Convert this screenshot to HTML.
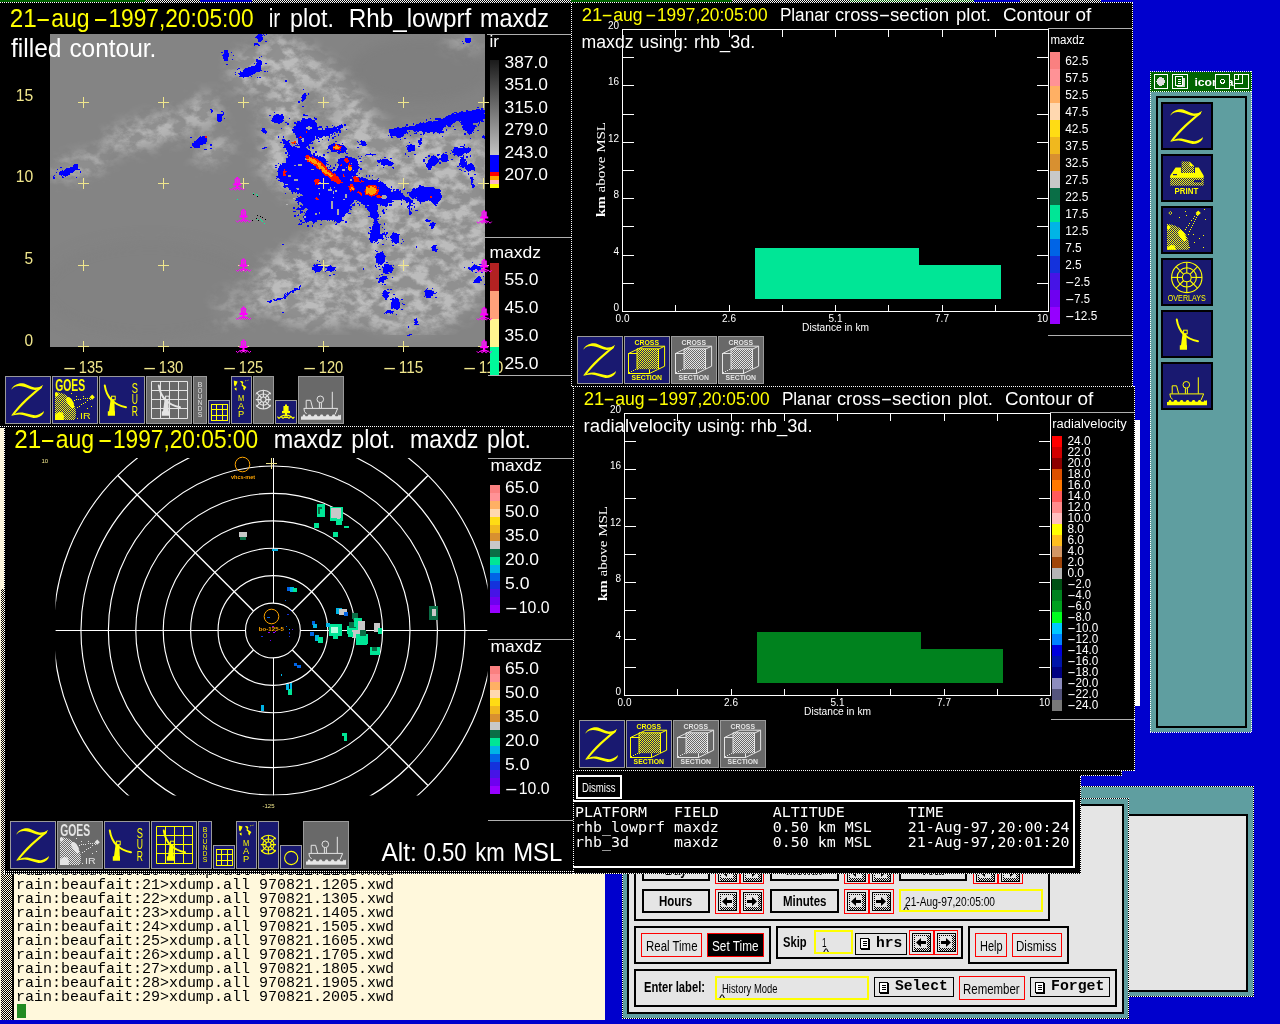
<!DOCTYPE html>
<html lang="en"><head><meta charset="utf-8"><title>zeb display</title>
<style>
html,body{margin:0;padding:0;}
body{width:1280px;height:1024px;overflow:hidden;background:#0000cd;position:relative;font-family:"Liberation Sans",sans-serif;}
.win{position:absolute;overflow:hidden;will-change:transform;}
.win>svg{position:absolute;left:0;top:0;display:block;}
.abs{position:absolute;display:block;}
.b{position:absolute;}
.t{position:absolute;white-space:nowrap;transform-origin:0 0;display:block;}
.pre{white-space:pre;}
</style></head><body>
<svg width="0" height="0" style="position:absolute"><defs>
<pattern id="dy" width="2" height="2" patternUnits="userSpaceOnUse"><rect width="1" height="1" fill="#ffff00"/><rect x="1" y="1" width="1" height="1" fill="#ffff00"/></pattern>
<pattern id="dw" width="2" height="2" patternUnits="userSpaceOnUse"><rect width="1" height="1" fill="#e4e4e4"/><rect x="1" y="1" width="1" height="1" fill="#e4e4e4"/></pattern>
<pattern id="stip" width="2" height="2" patternUnits="userSpaceOnUse"><rect width="2" height="2" fill="#fff8dc"/><rect width="1" height="1" fill="#000"/><rect x="1" y="1" width="1" height="1" fill="#000"/></pattern>
<pattern id="stipg" width="2" height="2" patternUnits="userSpaceOnUse"><rect width="2" height="2" fill="#e5e5e5"/><rect width="1" height="1" fill="#000"/><rect x="1" y="1" width="1" height="1" fill="#000"/></pattern><pattern id="stipgr" width="2" height="2" patternUnits="userSpaceOnUse"><rect width="2" height="2" fill="#006400"/><rect width="1" height="1" fill="#fff"/><rect x="1" y="1" width="1" height="1" fill="#fff"/></pattern><pattern id="stipw" width="2" height="2" patternUnits="userSpaceOnUse"><rect width="2" height="2" fill="#000"/><rect width="1" height="1" fill="#fff"/><rect x="1" y="1" width="1" height="1" fill="#fff"/></pattern></defs></svg>
<div class="win term" style="left:0px;top:427px;width:605px;height:593px;background:#fff8dc;"><svg width="13" height="431" style="position:absolute;left:0;top:162px" shape-rendering="crispEdges"><rect x="1" width="12" height="431" fill="url(#stip)"/></svg><div class="b" style="left:12px;top:445px;width:2px;height:148px;background:#000;"></div><span class="t pre" style="left:16.2px;top:437px;font:normal 15px/16px 'Liberation Mono', monospace;color:#000;transform:scaleX(0.9999);">rain:beaufait:20&gt;xdump.all 970821.1105.xwd</span><span class="t pre" style="left:16.2px;top:451px;font:normal 15px/16px 'Liberation Mono', monospace;color:#000;transform:scaleX(0.9999);">rain:beaufait:21&gt;xdump.all 970821.1205.xwd</span><span class="t pre" style="left:16.2px;top:465px;font:normal 15px/16px 'Liberation Mono', monospace;color:#000;transform:scaleX(0.9999);">rain:beaufait:22&gt;xdump.all 970821.1305.xwd</span><span class="t pre" style="left:16.2px;top:479px;font:normal 15px/16px 'Liberation Mono', monospace;color:#000;transform:scaleX(0.9999);">rain:beaufait:23&gt;xdump.all 970821.1405.xwd</span><span class="t pre" style="left:16.2px;top:493px;font:normal 15px/16px 'Liberation Mono', monospace;color:#000;transform:scaleX(0.9999);">rain:beaufait:24&gt;xdump.all 970821.1505.xwd</span><span class="t pre" style="left:16.2px;top:507px;font:normal 15px/16px 'Liberation Mono', monospace;color:#000;transform:scaleX(0.9999);">rain:beaufait:25&gt;xdump.all 970821.1605.xwd</span><span class="t pre" style="left:16.2px;top:521px;font:normal 15px/16px 'Liberation Mono', monospace;color:#000;transform:scaleX(0.9999);">rain:beaufait:26&gt;xdump.all 970821.1705.xwd</span><span class="t pre" style="left:16.2px;top:535px;font:normal 15px/16px 'Liberation Mono', monospace;color:#000;transform:scaleX(0.9999);">rain:beaufait:27&gt;xdump.all 970821.1805.xwd</span><span class="t pre" style="left:16.2px;top:549px;font:normal 15px/16px 'Liberation Mono', monospace;color:#000;transform:scaleX(0.9999);">rain:beaufait:28&gt;xdump.all 970821.1905.xwd</span><span class="t pre" style="left:16.2px;top:563px;font:normal 15px/16px 'Liberation Mono', monospace;color:#000;transform:scaleX(0.9999);">rain:beaufait:29&gt;xdump.all 970821.2005.xwd</span><div class="b" style="left:17px;top:577px;width:9px;height:14px;background:#228b22;"></div></div>
<div class="win aux" style="left:1080px;top:786px;width:174px;height:211px;background:#5f9ea0;outline:1px dotted #fff;outline-offset:-1px;box-shadow:inset 0 0 0 1px #000;"><div class="b" style="left:20px;top:28px;width:148px;height:178px;background:#e5e5e5;border:2px solid #000;box-sizing:border-box;"></div></div>
<div class="win tctl" style="left:622px;top:798px;width:507px;height:221px;background:#5f9ea0;outline:1px dotted #fff;outline-offset:-1px;box-shadow:inset 0 0 0 1px #000;"><div class="b" style="left:5px;top:6px;width:497px;height:210px;background:#e5e5e5;border:2px solid #000;box-sizing:border-box;"></div><div class="b" style="left:12px;top:14px;width:416px;height:109px;border:2px solid #000;box-sizing:border-box;"></div><div class="b" style="left:20px;top:60px;width:68px;height:23px;border:2px solid #000;box-sizing:border-box;"></div><span class="t" style="left:42.65px;top:63.5px;font:bold 14px/16px 'Liberation Sans', sans-serif;color:#000;transform:scaleX(0.8566);">Day</span><div class="b" style="left:148px;top:60px;width:69px;height:23px;border:2px solid #000;box-sizing:border-box;"></div><span class="t" style="left:164.4px;top:63.5px;font:bold 14px/16px 'Liberation Sans', sans-serif;color:#000;transform:scaleX(0.8575);">Month</span><div class="b" style="left:277px;top:60px;width:68px;height:23px;border:2px solid #000;box-sizing:border-box;"></div><span class="t" style="left:298.1px;top:63.5px;font:bold 14px/16px 'Liberation Sans', sans-serif;color:#000;transform:scaleX(0.8788);">Year</span><div class="b" style="left:93px;top:62px;width:25px;height:24px;border:1px solid #ff0000;box-sizing:border-box;"><svg width="19" height="19" viewBox="0 0 19 19" shape-rendering="crispEdges" style="position:absolute;left:2px;top:2px"><rect x="0.5" y="0.5" width="18" height="18" fill="#e5e5e5" stroke="#000" stroke-width="1"/><rect x="15" y="2" width="3" height="16" fill="url(#stipg)"/><rect x="2" y="15" width="16" height="3" fill="url(#stipg)"/><rect x="2" y="2" width="14" height="1" fill="url(#stipg)"/><rect x="2" y="3" width="1" height="12" fill="url(#stipg)"/><path d="M4,9.5 L9,5 V8 H14 V11 H9 V14 Z" fill="#000" shape-rendering="geometricPrecision"/></svg></div><div class="b" style="left:118px;top:62px;width:24px;height:24px;border:1px solid #ff0000;box-sizing:border-box;"><svg width="19" height="19" viewBox="0 0 19 19" shape-rendering="crispEdges" style="position:absolute;left:2px;top:2px"><rect x="0.5" y="0.5" width="18" height="18" fill="#e5e5e5" stroke="#000" stroke-width="1"/><rect x="15" y="2" width="3" height="16" fill="url(#stipg)"/><rect x="2" y="15" width="16" height="3" fill="url(#stipg)"/><rect x="2" y="2" width="14" height="1" fill="url(#stipg)"/><rect x="2" y="3" width="1" height="12" fill="url(#stipg)"/><path d="M14,9.5 L9,5 V8 H4 V11 H9 V14 Z" fill="#000" shape-rendering="geometricPrecision"/></svg></div><div class="b" style="left:222px;top:62px;width:25px;height:24px;border:1px solid #ff0000;box-sizing:border-box;"><svg width="19" height="19" viewBox="0 0 19 19" shape-rendering="crispEdges" style="position:absolute;left:2px;top:2px"><rect x="0.5" y="0.5" width="18" height="18" fill="#e5e5e5" stroke="#000" stroke-width="1"/><rect x="15" y="2" width="3" height="16" fill="url(#stipg)"/><rect x="2" y="15" width="16" height="3" fill="url(#stipg)"/><rect x="2" y="2" width="14" height="1" fill="url(#stipg)"/><rect x="2" y="3" width="1" height="12" fill="url(#stipg)"/><path d="M4,9.5 L9,5 V8 H14 V11 H9 V14 Z" fill="#000" shape-rendering="geometricPrecision"/></svg></div><div class="b" style="left:247px;top:62px;width:25px;height:24px;border:1px solid #ff0000;box-sizing:border-box;"><svg width="19" height="19" viewBox="0 0 19 19" shape-rendering="crispEdges" style="position:absolute;left:2px;top:2px"><rect x="0.5" y="0.5" width="18" height="18" fill="#e5e5e5" stroke="#000" stroke-width="1"/><rect x="15" y="2" width="3" height="16" fill="url(#stipg)"/><rect x="2" y="15" width="16" height="3" fill="url(#stipg)"/><rect x="2" y="2" width="14" height="1" fill="url(#stipg)"/><rect x="2" y="3" width="1" height="12" fill="url(#stipg)"/><path d="M14,9.5 L9,5 V8 H4 V11 H9 V14 Z" fill="#000" shape-rendering="geometricPrecision"/></svg></div><div class="b" style="left:351px;top:62px;width:25px;height:24px;border:1px solid #ff0000;box-sizing:border-box;"><svg width="19" height="19" viewBox="0 0 19 19" shape-rendering="crispEdges" style="position:absolute;left:2px;top:2px"><rect x="0.5" y="0.5" width="18" height="18" fill="#e5e5e5" stroke="#000" stroke-width="1"/><rect x="15" y="2" width="3" height="16" fill="url(#stipg)"/><rect x="2" y="15" width="16" height="3" fill="url(#stipg)"/><rect x="2" y="2" width="14" height="1" fill="url(#stipg)"/><rect x="2" y="3" width="1" height="12" fill="url(#stipg)"/><path d="M4,9.5 L9,5 V8 H14 V11 H9 V14 Z" fill="#000" shape-rendering="geometricPrecision"/></svg></div><div class="b" style="left:376px;top:62px;width:25px;height:24px;border:1px solid #ff0000;box-sizing:border-box;"><svg width="19" height="19" viewBox="0 0 19 19" shape-rendering="crispEdges" style="position:absolute;left:2px;top:2px"><rect x="0.5" y="0.5" width="18" height="18" fill="#e5e5e5" stroke="#000" stroke-width="1"/><rect x="15" y="2" width="3" height="16" fill="url(#stipg)"/><rect x="2" y="15" width="16" height="3" fill="url(#stipg)"/><rect x="2" y="2" width="14" height="1" fill="url(#stipg)"/><rect x="2" y="3" width="1" height="12" fill="url(#stipg)"/><path d="M14,9.5 L9,5 V8 H4 V11 H9 V14 Z" fill="#000" shape-rendering="geometricPrecision"/></svg></div><div class="b" style="left:20px;top:91px;width:68px;height:24px;border:2px solid #000;box-sizing:border-box;"></div><span class="t" style="left:37.05px;top:95.4px;font:bold 14px/16px 'Liberation Sans', sans-serif;color:#000;transform:scaleX(0.8208);">Hours</span><div class="b" style="left:148px;top:91px;width:69px;height:24px;border:2px solid #000;box-sizing:border-box;"></div><span class="t" style="left:160.65px;top:95.4px;font:bold 14px/16px 'Liberation Sans', sans-serif;color:#000;transform:scaleX(0.8224);">Minutes</span><div class="b" style="left:93px;top:91px;width:25px;height:25px;border:1px solid #ff0000;box-sizing:border-box;"><svg width="19" height="19" viewBox="0 0 19 19" shape-rendering="crispEdges" style="position:absolute;left:2px;top:2px"><rect x="0.5" y="0.5" width="18" height="18" fill="#e5e5e5" stroke="#000" stroke-width="1"/><rect x="15" y="2" width="3" height="16" fill="url(#stipg)"/><rect x="2" y="15" width="16" height="3" fill="url(#stipg)"/><rect x="2" y="2" width="14" height="1" fill="url(#stipg)"/><rect x="2" y="3" width="1" height="12" fill="url(#stipg)"/><path d="M4,9.5 L9,5 V8 H14 V11 H9 V14 Z" fill="#000" shape-rendering="geometricPrecision"/></svg></div><div class="b" style="left:118px;top:91px;width:24px;height:25px;border:1px solid #ff0000;box-sizing:border-box;"><svg width="19" height="19" viewBox="0 0 19 19" shape-rendering="crispEdges" style="position:absolute;left:2px;top:2px"><rect x="0.5" y="0.5" width="18" height="18" fill="#e5e5e5" stroke="#000" stroke-width="1"/><rect x="15" y="2" width="3" height="16" fill="url(#stipg)"/><rect x="2" y="15" width="16" height="3" fill="url(#stipg)"/><rect x="2" y="2" width="14" height="1" fill="url(#stipg)"/><rect x="2" y="3" width="1" height="12" fill="url(#stipg)"/><path d="M14,9.5 L9,5 V8 H4 V11 H9 V14 Z" fill="#000" shape-rendering="geometricPrecision"/></svg></div><div class="b" style="left:222px;top:91px;width:25px;height:25px;border:1px solid #ff0000;box-sizing:border-box;"><svg width="19" height="19" viewBox="0 0 19 19" shape-rendering="crispEdges" style="position:absolute;left:2px;top:2px"><rect x="0.5" y="0.5" width="18" height="18" fill="#e5e5e5" stroke="#000" stroke-width="1"/><rect x="15" y="2" width="3" height="16" fill="url(#stipg)"/><rect x="2" y="15" width="16" height="3" fill="url(#stipg)"/><rect x="2" y="2" width="14" height="1" fill="url(#stipg)"/><rect x="2" y="3" width="1" height="12" fill="url(#stipg)"/><path d="M4,9.5 L9,5 V8 H14 V11 H9 V14 Z" fill="#000" shape-rendering="geometricPrecision"/></svg></div><div class="b" style="left:247px;top:91px;width:25px;height:25px;border:1px solid #ff0000;box-sizing:border-box;"><svg width="19" height="19" viewBox="0 0 19 19" shape-rendering="crispEdges" style="position:absolute;left:2px;top:2px"><rect x="0.5" y="0.5" width="18" height="18" fill="#e5e5e5" stroke="#000" stroke-width="1"/><rect x="15" y="2" width="3" height="16" fill="url(#stipg)"/><rect x="2" y="15" width="16" height="3" fill="url(#stipg)"/><rect x="2" y="2" width="14" height="1" fill="url(#stipg)"/><rect x="2" y="3" width="1" height="12" fill="url(#stipg)"/><path d="M14,9.5 L9,5 V8 H4 V11 H9 V14 Z" fill="#000" shape-rendering="geometricPrecision"/></svg></div><div class="b" style="left:277px;top:91px;width:144px;height:23px;border:2px solid #ffff00;box-sizing:border-box;"></div><span class="t" style="left:283px;top:97.4px;font:normal 12px/14px 'Liberation Sans', sans-serif;color:#000;transform:scaleX(0.8484);">21-Aug-97,20:05:00</span><span class="t" style="left:280.8px;top:107.3px;font:bold 7.4px/9px 'Liberation Sans', sans-serif;color:#000;transform:scaleX(1.4347);">^</span><div class="b" style="left:12px;top:128px;width:137px;height:38px;border:2px solid #000;box-sizing:border-box;"></div><div class="b" style="left:19px;top:135px;width:61px;height:24px;border:1px solid #ff0000;box-sizing:border-box;"></div><span class="t" style="left:23.6px;top:139.6px;font:normal 14px/16px 'Liberation Sans', sans-serif;color:#000;transform:scaleX(0.8172);">Real Time</span><div class="b" style="left:85px;top:135px;width:57px;height:24px;border:1px solid #ff0000;box-sizing:border-box;background:#000;"></div><span class="t" style="left:89.6px;top:139.6px;font:normal 14px/16px 'Liberation Sans', sans-serif;color:#fff;transform:scaleX(0.8417);">Set Time</span><div class="b" style="left:154px;top:128px;width:187px;height:33px;border:2px solid #000;box-sizing:border-box;"></div><span class="t" style="left:161.4px;top:136px;font:bold 14px/16px 'Liberation Sans', sans-serif;color:#000;transform:scaleX(0.7982);">Skip</span><div class="b" style="left:192px;top:132px;width:39px;height:24px;border:2px solid #ffff00;box-sizing:border-box;"></div><span class="t" style="left:200px;top:138.2px;font:normal 12px/14px 'Liberation Sans', sans-serif;color:#000;transform:scaleX(0.6743);">1</span><span class="t" style="left:200.5px;top:148.5px;font:bold 7.4px/9px 'Liberation Sans', sans-serif;color:#000;transform:scaleX(1.4347);">^</span><div class="b" style="left:233px;top:135px;width:52px;height:22px;border:1px solid #000;box-sizing:border-box;"><svg width="10" height="12" viewBox="0 0 10 12" shape-rendering="crispEdges" style="position:absolute;left:4px;top:4px"><rect x="0.5" y="0.5" width="8" height="10" fill="#fff" stroke="#000" stroke-width="1"/><rect x="1" y="10" width="9" height="1.5" fill="#000"/><rect x="8.5" y="1" width="1.5" height="10" fill="#000"/><rect x="2.5" y="3" width="4" height="1" fill="#000"/><rect x="2.5" y="5" width="4" height="1" fill="#000"/><rect x="2.5" y="7" width="4" height="1" fill="#000"/></svg></div><span class="t" style="left:254px;top:138.4px;font:bold 15px/16px 'Liberation Mono', monospace;color:#000;transform:scaleX(0.9739);">hrs</span><div class="b" style="left:287px;top:132px;width:25px;height:25px;border:1px solid #ff0000;box-sizing:border-box;"><svg width="19" height="19" viewBox="0 0 19 19" shape-rendering="crispEdges" style="position:absolute;left:2px;top:2px"><rect x="0.5" y="0.5" width="18" height="18" fill="#e5e5e5" stroke="#000" stroke-width="1"/><rect x="15" y="2" width="3" height="16" fill="url(#stipg)"/><rect x="2" y="15" width="16" height="3" fill="url(#stipg)"/><rect x="2" y="2" width="14" height="1" fill="url(#stipg)"/><rect x="2" y="3" width="1" height="12" fill="url(#stipg)"/><path d="M4,9.5 L9,5 V8 H14 V11 H9 V14 Z" fill="#000" shape-rendering="geometricPrecision"/></svg></div><div class="b" style="left:312px;top:132px;width:24px;height:25px;border:1px solid #ff0000;box-sizing:border-box;"><svg width="19" height="19" viewBox="0 0 19 19" shape-rendering="crispEdges" style="position:absolute;left:2px;top:2px"><rect x="0.5" y="0.5" width="18" height="18" fill="#e5e5e5" stroke="#000" stroke-width="1"/><rect x="15" y="2" width="3" height="16" fill="url(#stipg)"/><rect x="2" y="15" width="16" height="3" fill="url(#stipg)"/><rect x="2" y="2" width="14" height="1" fill="url(#stipg)"/><rect x="2" y="3" width="1" height="12" fill="url(#stipg)"/><path d="M14,9.5 L9,5 V8 H4 V11 H9 V14 Z" fill="#000" shape-rendering="geometricPrecision"/></svg></div><div class="b" style="left:346px;top:128px;width:101px;height:38px;border:2px solid #000;box-sizing:border-box;"></div><div class="b" style="left:353px;top:135px;width:32px;height:24px;border:1px solid #ff0000;box-sizing:border-box;"></div><span class="t" style="left:357.6px;top:139.6px;font:normal 14px/16px 'Liberation Sans', sans-serif;color:#000;transform:scaleX(0.7814);">Help</span><div class="b" style="left:390px;top:135px;width:50px;height:24px;border:1px solid #ff0000;box-sizing:border-box;"></div><span class="t" style="left:394.4px;top:139.6px;font:normal 14px/16px 'Liberation Sans', sans-serif;color:#000;transform:scaleX(0.8266);">Dismiss</span><div class="b" style="left:12px;top:171px;width:483px;height:38px;border:2px solid #000;box-sizing:border-box;"></div><span class="t" style="left:22.4px;top:181.2px;font:bold 14px/16px 'Liberation Sans', sans-serif;color:#000;transform:scaleX(0.8001);">Enter label:</span><div class="b" style="left:93px;top:178px;width:154px;height:24px;border:2px solid #ffff00;box-sizing:border-box;"></div><span class="t" style="left:99.5px;top:183.7px;font:normal 12px/14px 'Liberation Sans', sans-serif;color:#000;transform:scaleX(0.7851);">History Mode</span><span class="t" style="left:96.7px;top:194.5px;font:bold 7.4px/9px 'Liberation Sans', sans-serif;color:#000;transform:scaleX(1.4347);">^</span><div class="b" style="left:252px;top:179px;width:80px;height:20px;border:1px solid #000;box-sizing:border-box;"><svg width="10" height="12" viewBox="0 0 10 12" shape-rendering="crispEdges" style="position:absolute;left:4px;top:4px"><rect x="0.5" y="0.5" width="8" height="10" fill="#fff" stroke="#000" stroke-width="1"/><rect x="1" y="10" width="9" height="1.5" fill="#000"/><rect x="8.5" y="1" width="1.5" height="10" fill="#000"/><rect x="2.5" y="3" width="4" height="1" fill="#000"/><rect x="2.5" y="5" width="4" height="1" fill="#000"/><rect x="2.5" y="7" width="4" height="1" fill="#000"/></svg></div><span class="t" style="left:273.3px;top:180.8px;font:bold 15px/16px 'Liberation Mono', monospace;color:#000;transform:scaleX(0.9758);">Select</span><div class="b" style="left:337px;top:178px;width:66px;height:24px;border:1px solid #ff0000;box-sizing:border-box;"></div><span class="t" style="left:341.2px;top:182.7px;font:normal 14px/16px 'Liberation Sans', sans-serif;color:#000;transform:scaleX(0.8174);">Remember</span><div class="b" style="left:408px;top:179px;width:80px;height:20px;border:1px solid #000;box-sizing:border-box;"><svg width="10" height="12" viewBox="0 0 10 12" shape-rendering="crispEdges" style="position:absolute;left:4px;top:4px"><rect x="0.5" y="0.5" width="8" height="10" fill="#fff" stroke="#000" stroke-width="1"/><rect x="1" y="10" width="9" height="1.5" fill="#000"/><rect x="8.5" y="1" width="1.5" height="10" fill="#000"/><rect x="2.5" y="3" width="4" height="1" fill="#000"/><rect x="2.5" y="5" width="4" height="1" fill="#000"/><rect x="2.5" y="7" width="4" height="1" fill="#000"/></svg></div><span class="t" style="left:428.8px;top:181px;font:bold 15px/16px 'Liberation Mono', monospace;color:#000;transform:scaleX(0.9888);">Forget</span></div>
<div class="win pal" style="left:1150px;top:71px;width:102px;height:662px;background:transparent;"><svg width="102" height="662" viewBox="1150 71 102 662" font-family='"Liberation Sans", sans-serif' shape-rendering="crispEdges" text-rendering="optimizeLegibility"><rect x="1150" y="72" width="102" height="19.5" fill="#006400"/><rect x="1150" y="91.5" width="102" height="640.5" fill="#5f9ea0"/><rect x="1156.5" y="96.5" width="89.5" height="630" fill="none" stroke="#000" stroke-width="2"/><rect x="1154" y="74.5" width="13.5" height="14" fill="none" stroke="#fff" stroke-width="1"/><circle cx="1160.7" cy="81.5" r="4.3" fill="#dcdcdc"/><rect x="1172.5" y="74.5" width="14.5" height="14" fill="none" stroke="#fff" stroke-width="1"/><rect x="1176.5" y="77.5" width="8" height="9.5" fill="#dcdcdc"/><rect x="1175.5" y="76.5" width="7" height="9" fill="#006400" stroke="#fff" stroke-width="1"/><line x1="1177.5" y1="79.5" x2="1181" y2="79.5" stroke="#fff" stroke-width="1"/><line x1="1177.5" y1="81.5" x2="1181" y2="81.5" stroke="#fff" stroke-width="1"/><line x1="1177.5" y1="83.5" x2="1181" y2="83.5" stroke="#fff" stroke-width="1"/><text x="1194.4" y="86" font-size="11.6" fill="#fff" font-family='"Liberation Sans", sans-serif' font-weight="bold" textLength="44.0" lengthAdjust="spacingAndGlyphs">iconbar</text><rect x="1215.5" y="74.5" width="14" height="14" fill="#006400" stroke="#fff" stroke-width="1"/><circle cx="1222.5" cy="81.3" r="2" fill="none" stroke="#fff" stroke-width="1"/><rect x="1234.5" y="74.5" width="14" height="14" fill="#006400" stroke="#fff" stroke-width="1"/><path d="M1242.5,74.5 V83.5 H1234.5 M1238.5,74.5 V79.5 H1234.5" fill="none" stroke="#fff" stroke-width="1"/><g shape-rendering="geometricPrecision"><rect x="1161" y="102" width="52" height="48" fill="#000"/><rect x="1163" y="104" width="48" height="44" fill="#191970"/><g transform="translate(1164,102)"><path d="M6.5,13 C8,9.5 13,6.8 17.5,7.2 C22,7.8 27,11.6 31,11.6 C34,11.4 36.5,10.5 37.8,9 L36.5,12 C33,14.5 28,14.3 24,12.6 C19,10.4 14,9.2 10.5,10.6 C8.5,11.4 7.5,12.4 6.5,13.6 Z" fill="#ffff00"/><path d="M37.8,9 L36.2,12.5 C28,19 17,29 9.5,38.2 L6.2,39.6 C14,28 27,16.5 37.8,9 Z" fill="#ffff00"/><path d="M6.2,39.8 C9,37.8 13,36 17.5,36.6 C22,37.4 27,39.6 31,39.2 C34.5,38.6 37,37 38.8,35 L38.6,37 C36.5,40.4 32.5,42.2 28.5,42 C23.5,41.4 19,38.6 14.5,38.6 C11,38.8 8.5,39.6 6.2,39.8 Z" fill="#ffff00"/></g><rect x="1161" y="154" width="52" height="48" fill="#000"/><rect x="1163" y="156" width="48" height="44" fill="#191970"/><g transform="translate(1161,154)"><path d="M20.6,7.4 H28.6 L33,12 V20 H20.6 Z" fill="url(#dy)"/><path d="M28.6,7.4 L33,12 H28.6 Z" fill="#ffff00"/><path d="M14.6,13.6 H20 V19 H34 V13.6 H37.8 L42.6,21.6 V23 H9.2 V21.6 Z" fill="#ffff00"/><rect x="9.2" y="23" width="33.4" height="8.6" fill="url(#dy)"/><rect x="9.2" y="22.4" width="33.4" height="1.4" fill="#ffff00"/><rect x="33" y="26" width="7.4" height="2.4" fill="#191970"/><rect x="12" y="20" width="4" height="1.2" fill="#191970"/><text x="13.6" y="39.8" font-size="8.2" fill="#ffff00" font-family='"Liberation Sans", sans-serif' font-weight="bold" textLength="23.6" lengthAdjust="spacingAndGlyphs">PRINT</text></g><rect x="1161" y="206" width="52" height="48" fill="#000"/><rect x="1163" y="208" width="48" height="44" fill="#191970"/><g transform="translate(1161,206)"><clipPath id="gcp"><rect x="6" y="0" width="40" height="43.8"/></clipPath><g clip-path="url(#gcp)"><circle cx="6" cy="40" r="22" fill="url(#dy)"/><path d="M17.5,24.5 l2.5,-0.5 l2.5,2 l2,3.5 l0.8,5 l-2.3,1 l-2.5,-2.5 l-2,-3 l-1.5,-2.5 Z" fill="#ffff00"/><path d="M6,47 l0,-5.5 l3.5,-2.5 l4,0.5 l1.5,4 l-0.5,3.5 Z" fill="#ffff00"/><path d="M6,19.5 l2.5,0 l1.5,2 l-2,2 l-2,0 Z" fill="#ffff00"/></g><path d="M37.2,4.4 l2.6,2.6 l-2.6,2.6 l-2.6,-2.6 Z" fill="#ffff00"/><rect x="35" y="8" width="1" height="1" fill="#ffff00" shape-rendering="crispEdges"/><rect x="33" y="10" width="1" height="1" fill="#ffff00" shape-rendering="crispEdges"/><rect x="32" y="12" width="1" height="1" fill="#ffff00" shape-rendering="crispEdges"/><rect x="30" y="14" width="1" height="1" fill="#ffff00" shape-rendering="crispEdges"/><rect x="28" y="17" width="1" height="1" fill="#ffff00" shape-rendering="crispEdges"/><rect x="27" y="19" width="1" height="1" fill="#ffff00" shape-rendering="crispEdges"/><rect x="25" y="21" width="1" height="1" fill="#ffff00" shape-rendering="crispEdges"/><rect x="24" y="23" width="1" height="1" fill="#ffff00" shape-rendering="crispEdges"/><rect x="36" y="9" width="1" height="1" fill="#ffff00" shape-rendering="crispEdges"/><rect x="35" y="11" width="1" height="1" fill="#ffff00" shape-rendering="crispEdges"/><rect x="34" y="13" width="1" height="1" fill="#ffff00" shape-rendering="crispEdges"/><rect x="33" y="15" width="1" height="1" fill="#ffff00" shape-rendering="crispEdges"/><rect x="32" y="17" width="1" height="1" fill="#ffff00" shape-rendering="crispEdges"/><rect x="31" y="19" width="1" height="1" fill="#ffff00" shape-rendering="crispEdges"/><rect x="30" y="21" width="1" height="1" fill="#ffff00" shape-rendering="crispEdges"/><rect x="29" y="23" width="1" height="1" fill="#ffff00" shape-rendering="crispEdges"/><rect x="28" y="25" width="1" height="1" fill="#ffff00" shape-rendering="crispEdges"/><rect x="27" y="28" width="1" height="1" fill="#ffff00" shape-rendering="crispEdges"/><path d="M9.4,5.4 l1.6,1.6 l-1.6,1.6 l-1.6,-1.6 Z" fill="none" stroke="#ffff00" stroke-width="0.8"/><rect x="24" y="5" width="1" height="1" fill="#ffff00" shape-rendering="crispEdges"/><rect x="43" y="3" width="1" height="1" fill="#ffff00" shape-rendering="crispEdges"/><rect x="18" y="11" width="1" height="1" fill="#ffff00" shape-rendering="crispEdges"/><rect x="44" y="13" width="1" height="1" fill="#ffff00" shape-rendering="crispEdges"/><rect x="32" y="28" width="1" height="1" fill="#ffff00" shape-rendering="crispEdges"/><rect x="38" y="32" width="1" height="1" fill="#ffff00" shape-rendering="crispEdges"/><rect x="42" y="29" width="1" height="1" fill="#ffff00" shape-rendering="crispEdges"/><rect x="33" y="36" width="1" height="1" fill="#ffff00" shape-rendering="crispEdges"/><rect x="42" y="41" width="1" height="1" fill="#ffff00" shape-rendering="crispEdges"/><rect x="28" y="41" width="1" height="1" fill="#ffff00" shape-rendering="crispEdges"/><rect x="25" y="9" width="1" height="1" fill="#ffff00" shape-rendering="crispEdges"/></g><rect x="1161" y="258" width="52" height="48" fill="#000"/><rect x="1163" y="260" width="48" height="44" fill="#191970"/><g transform="translate(1161,258)"><circle cx="25.8" cy="19.4" r="15.2" fill="none" stroke="#ffff00" stroke-width="1.1"/><circle cx="25.8" cy="19.4" r="9.6" fill="none" stroke="#ffff00" stroke-width="1.1"/><circle cx="25.8" cy="19.4" r="4.4" fill="none" stroke="#ffff00" stroke-width="1.1"/><line x1="30.2" y1="19.4" x2="41" y2="19.4" stroke="#ffff00" stroke-width="1.1"/><line x1="28.9113" y1="22.5113" x2="36.548" y2="30.148" stroke="#ffff00" stroke-width="1.1"/><line x1="25.8" y1="23.8" x2="25.8" y2="34.6" stroke="#ffff00" stroke-width="1.1"/><line x1="22.6887" y1="22.5113" x2="15.052" y2="30.148" stroke="#ffff00" stroke-width="1.1"/><line x1="21.4" y1="19.4" x2="10.6" y2="19.4" stroke="#ffff00" stroke-width="1.1"/><line x1="22.6887" y1="16.2887" x2="15.052" y2="8.65198" stroke="#ffff00" stroke-width="1.1"/><line x1="25.8" y1="15" x2="25.8" y2="4.2" stroke="#ffff00" stroke-width="1.1"/><line x1="28.9113" y1="16.2887" x2="36.548" y2="8.65198" stroke="#ffff00" stroke-width="1.1"/><text x="6.8" y="42.8" font-size="8.6" fill="#ffff00" textLength="38.0" lengthAdjust="spacingAndGlyphs">OVERLAYS</text></g><rect x="1161" y="310" width="52" height="48" fill="#000"/><rect x="1163" y="312" width="48" height="44" fill="#191970"/><g transform="translate(1161,310)"><g transform="translate(10,0)"><path d="M5.8,9.6 Q8.5,27.5 27,31.2" fill="none" stroke="#ffff00" stroke-width="2" stroke-linecap="round"/><rect x="12.6" y="20.2" width="3.6" height="3.6" fill="none" stroke="#ffff00" stroke-width="1"/><path d="M11.6,23.5 L15.3,23.5 L15.8,35.2 L16,35.2 L16,39.8 L8.8,39.8 L8.8,35.2 L10,35.2 Z" fill="#ffff00"/></g></g><rect x="1161" y="362" width="52" height="48" fill="#000"/><rect x="1163" y="364" width="48" height="44" fill="#191970"/><g transform="translate(1161,361.5)"><g transform="translate(3,0)"><path d="M3,43.8 V40.4 L4.4,40.4 L5.4,38.4 L6.6,38.4 L7.6,40.2 L9.4,40.2 L10.6,38.4 L12.4,38.4 L13.6,40.2 L15.6,40.2 L16.8,38.4 L18.4,38.4 L19.6,40.2 L21.6,40.2 L22.8,38.4 L24.4,38.4 L25.6,40.2 L27.6,40.2 L28.8,38.4 L30.4,38.4 L31.6,40.2 L33.6,40.2 L34.8,38.4 L36.4,38.4 L37.6,40.2 L39.6,40.2 L40.8,38.6 L41.8,39.6 L43,38.4 V43.8 Z" fill="#ffff00"/><path d="M5.8,32.4 H39.8 M5.9,32.4 Q5.8,36 8.6,38 M39.6,32.6 L37,38.6" fill="none" stroke="#ffff00" stroke-width="1"/><path d="M8.2,32.2 V24.3 H12.6 L14.6,32" fill="none" stroke="#ffff00" stroke-width="1"/><circle cx="22.3" cy="23.3" r="3.3" fill="none" stroke="#ffff00" stroke-width="1"/><path d="M21.4,26.6 V32.2 M23.4,26.6 V32.2 M34.3,15.8 V32.2" fill="none" stroke="#ffff00" stroke-width="1"/></g></g></g><line x1="1150" y1="71.5" x2="1252" y2="71.5" stroke="#fff" stroke-width="1" stroke-dasharray="1 1"/><line x1="1150.5" y1="71" x2="1150.5" y2="732" stroke="#fff" stroke-width="1" stroke-dasharray="1 1"/><line x1="1251.5" y1="71" x2="1251.5" y2="732" stroke="#fff" stroke-width="1" stroke-dasharray="1 1"/><line x1="1150" y1="732.5" x2="1252" y2="732.5" stroke="#fff" stroke-width="1" stroke-dasharray="1 1"/><line x1="1150" y1="91.5" x2="1252" y2="91.5" stroke="#fff" stroke-width="1" stroke-dasharray="1 1"/></svg></div>
<div class="b" style="left:1135px;top:420px;width:5px;height:286px;background:#fff;"></div><div class="b" style="left:1044px;top:770px;width:78px;height:6px;background:#000;border:1px dotted #fff;border-top:none;box-sizing:border-box;"></div>
<div class="win ir" style="left:0px;top:0px;width:573px;height:428px;background:#000;"><svg width="573" height="428" viewBox="0 0 573 428" font-family='"Liberation Sans", sans-serif' shape-rendering="crispEdges" text-rendering="optimizeLegibility"><clipPath id="satclip"><rect x="50" y="34" width="435" height="313"/></clipPath><filter id="cl" x="0" y="0" width="100%" height="100%" filterUnits="objectBoundingBox" color-interpolation-filters="sRGB">
<feGaussianBlur in="SourceAlpha" stdDeviation="9" result="b"/>
<feTurbulence type="fractalNoise" baseFrequency="0.07 0.1" numOctaves="5" seed="7" result="n"/>
<feColorMatrix in="n" type="matrix" values="0 0 0 0 1  0 0 0 0 1  0 0 0 0 1  3.4 0 0 0 -1.25" result="n2"/>
<feComposite in="n2" in2="b" operator="in"/>
</filter>
<filter id="soft" x="-20%" y="-20%" width="140%" height="140%"><feGaussianBlur stdDeviation="7"/></filter>
<filter id="rough2" x="-5%" y="-5%" width="110%" height="110%" color-interpolation-filters="sRGB">
<feTurbulence type="fractalNoise" baseFrequency="0.3" numOctaves="2" seed="4" result="t"/>
<feDisplacementMap in="SourceGraphic" in2="t" scale="3.5" xChannelSelector="R" yChannelSelector="G"/>
</filter>
<filter id="rough" x="-5%" y="-5%" width="110%" height="110%" color-interpolation-filters="sRGB">
<feTurbulence type="fractalNoise" baseFrequency="0.22" numOctaves="2" seed="11" result="t"/>
<feDisplacementMap in="SourceGraphic" in2="t" scale="5" xChannelSelector="R" yChannelSelector="G"/>
</filter><g clip-path="url(#satclip)"><rect x="50" y="34" width="435" height="313" fill="#848484"/><g opacity="0.0"></g><g filter="url(#cl)" opacity="0.4"><ellipse cx="322" cy="78" rx="70" ry="15" fill="#fff" transform="rotate(40 322 78)"/><ellipse cx="292" cy="66" rx="34" ry="22" fill="#fff" transform="rotate(30 292 66)"/><ellipse cx="283" cy="118" rx="22" ry="34" fill="#fff"/><ellipse cx="405" cy="245" rx="95" ry="90" fill="#fff"/><ellipse cx="335" cy="160" rx="75" ry="45" fill="#fff"/><ellipse cx="440" cy="165" rx="55" ry="38" fill="#fff"/><ellipse cx="462" cy="44" rx="18" ry="9" fill="#fff"/><ellipse cx="318" cy="285" rx="62" ry="42" fill="#fff"/><ellipse cx="245" cy="300" rx="36" ry="18" fill="#fff" transform="rotate(-28 245 300)"/><ellipse cx="150" cy="132" rx="50" ry="14" fill="#fff" transform="rotate(-15 150 132)"/><ellipse cx="80" cy="166" rx="30" ry="10" fill="#fff" transform="rotate(-15 80 166)"/><ellipse cx="204" cy="112" rx="16" ry="18" fill="#fff"/><ellipse cx="214" cy="150" rx="22" ry="10" fill="#fff" transform="rotate(-35 214 150)"/><ellipse cx="252" cy="72" rx="22" ry="22" fill="#fff"/><ellipse cx="465" cy="255" rx="25" ry="40" fill="#fff"/></g><g filter="url(#soft)" opacity="0.10"><ellipse cx="322" cy="78" rx="70" ry="15" fill="#fff" transform="rotate(40 322 78)"/><ellipse cx="292" cy="66" rx="34" ry="22" fill="#fff" transform="rotate(30 292 66)"/><ellipse cx="283" cy="118" rx="22" ry="34" fill="#fff"/><ellipse cx="405" cy="245" rx="95" ry="90" fill="#fff"/><ellipse cx="335" cy="160" rx="75" ry="45" fill="#fff"/><ellipse cx="440" cy="165" rx="55" ry="38" fill="#fff"/><ellipse cx="462" cy="44" rx="18" ry="9" fill="#fff"/><ellipse cx="318" cy="285" rx="62" ry="42" fill="#fff"/><ellipse cx="245" cy="300" rx="36" ry="18" fill="#fff" transform="rotate(-28 245 300)"/><ellipse cx="150" cy="132" rx="50" ry="14" fill="#fff" transform="rotate(-15 150 132)"/><ellipse cx="80" cy="166" rx="30" ry="10" fill="#fff" transform="rotate(-15 80 166)"/><ellipse cx="204" cy="112" rx="16" ry="18" fill="#fff"/><ellipse cx="214" cy="150" rx="22" ry="10" fill="#fff" transform="rotate(-35 214 150)"/><ellipse cx="252" cy="72" rx="22" ry="22" fill="#fff"/><ellipse cx="465" cy="255" rx="25" ry="40" fill="#fff"/></g><g filter="url(#soft)" opacity="0.5"><ellipse cx="420" cy="70" rx="70" ry="32" fill="#7a7a7a"/><ellipse cx="150" cy="290" rx="110" ry="50" fill="#808080"/></g><g filter="url(#rough)"><polygon points="277.9,167.2 283.9,163 289,156 282,139.5 284,138.5 292.5,147.4 299.4,147.4 297.7,137 292.5,130 297,124 302,118 309.7,118 316.6,121.7 318,130 333.8,127.7 343,125 340.6,130 332,135.4 316.6,137 311.4,144 306,147.4 313,154 325,157.7 326.9,169.8 337,171.5 339,157.7 357.8,157.7 358.7,169.8 354.4,176.7 376.7,180 388.7,187 392,192 399,190 404,196 411,200 411.5,215 409.5,215 408.5,201 402.5,200.3 392,200 385,207 378.4,203.7 378,221 380.5,233 385.3,231 383.6,239.8 369.8,241.5 371.5,229.5 374,221 368,210.6 361,202 354.4,200.3 351,207 345.8,214 339,222.6 330,219 314.8,221.8 304.5,222.6 302.8,215.8 308,209 292.5,210.6 304.5,203.7 294,200.3 302.8,195 292.5,191.7 284,186 279,178" fill="#0000ff"/><polygon points="414,188 420,186 428,187 440,188 442,196 441,201 435,205.5 430,200 425,203 419.7,203.7 416,198 411,199 408,192" fill="#0000ff"/><polygon points="388.7,129.4 407.7,126.8 426.6,121.7 437,120 449,114.8 464.4,111.3 476.4,109.6 485,109.6 485,120 474.7,121.7 473,134 469,135 464.4,130 459,120 452,124 445.5,126.8 441,133 437,132 420,131.5 407.7,130 402.5,137 390,136" fill="#0000ff"/><ellipse cx="278" cy="119" rx="6.5" ry="5" fill="#0000ff" transform="rotate(-30 278 119)"/><ellipse cx="303.5" cy="98" rx="2.5" ry="5" fill="#0000ff" transform="rotate(20 303.5 98)"/><ellipse cx="285.6" cy="81" rx="1.2" ry="1.2" fill="#0000ff"/><ellipse cx="338" cy="148.3" rx="9.5" ry="4.3" fill="#0000ff" transform="rotate(8 338 148.3)"/><ellipse cx="363" cy="144" rx="3.6" ry="3" fill="#0000ff" transform="rotate(-30 363 144)"/><ellipse cx="386" cy="162.5" rx="8" ry="2.8" fill="#0000ff" transform="rotate(12 386 162.5)"/><ellipse cx="370.5" cy="154.8" rx="4.5" ry="1.2" fill="#0000ff"/><ellipse cx="411" cy="148.3" rx="5" ry="4" fill="#0000ff"/><ellipse cx="420" cy="141" rx="2" ry="3" fill="#0000ff"/><ellipse cx="433" cy="161" rx="7" ry="4.5" fill="#0000ff" transform="rotate(-25 433 161)"/><ellipse cx="444" cy="158" rx="5" ry="3.5" fill="#0000ff" transform="rotate(-20 444 158)"/><ellipse cx="429.5" cy="165" rx="2.5" ry="4" fill="#0000ff"/><ellipse cx="458" cy="152" rx="6" ry="4.5" fill="#0000ff" transform="rotate(10 458 152)"/><ellipse cx="466" cy="150" rx="5" ry="3" fill="#0000ff"/><ellipse cx="463" cy="163" rx="4" ry="5" fill="#0000ff"/><ellipse cx="470" cy="168" rx="4" ry="4" fill="#0000ff"/><ellipse cx="472" cy="182" rx="1.3" ry="5" fill="#0000ff" transform="rotate(-10 472 182)"/><ellipse cx="484" cy="137" rx="2" ry="3" fill="#0000ff"/><ellipse cx="200" cy="142.5" rx="9" ry="4.2" fill="#0000ff" transform="rotate(-38 200 142.5)"/><ellipse cx="219.3" cy="118" rx="2.8" ry="4.2" fill="#0000ff"/><ellipse cx="250" cy="71.5" rx="12" ry="4.4" fill="#0000ff" transform="rotate(-22 250 71.5)"/><ellipse cx="259" cy="64" rx="3.5" ry="4.5" fill="#0000ff"/><ellipse cx="226" cy="55.5" rx="3" ry="6" fill="#0000ff" transform="rotate(5 226 55.5)"/><ellipse cx="260" cy="37.5" rx="4" ry="3.6" fill="#0000ff"/><ellipse cx="256.5" cy="45" rx="2.5" ry="1.5" fill="#0000ff"/><ellipse cx="264" cy="131" rx="1.6" ry="3" fill="#0000ff"/><ellipse cx="264.5" cy="148" rx="2.5" ry="1.2" fill="#0000ff"/><ellipse cx="212" cy="110.5" rx="1.2" ry="1.2" fill="#0000ff"/><ellipse cx="68" cy="171.5" rx="11" ry="3.2" fill="#0000ff" transform="rotate(-20 68 171.5)"/><ellipse cx="53.5" cy="177" rx="1.8" ry="2.4" fill="#0000ff" transform="rotate(-30 53.5 177)"/><ellipse cx="75" cy="166" rx="3" ry="2" fill="#0000ff"/><ellipse cx="380" cy="258.5" rx="4.8" ry="6.8" fill="#0000ff"/><ellipse cx="387.5" cy="269" rx="5.5" ry="4.6" fill="#0000ff" transform="rotate(-20 387.5 269)"/><ellipse cx="383" cy="279" rx="5" ry="2.6" fill="#0000ff" transform="rotate(-20 383 279)"/><ellipse cx="395.5" cy="238" rx="4.6" ry="4.8" fill="#0000ff"/><ellipse cx="433" cy="226" rx="1.8" ry="4.2" fill="#0000ff"/><ellipse cx="434.5" cy="248" rx="2.6" ry="3.6" fill="#0000ff" transform="rotate(20 434.5 248)"/><ellipse cx="317.5" cy="268" rx="5.2" ry="4.4" fill="#0000ff"/><ellipse cx="332" cy="269" rx="4.2" ry="3" fill="#0000ff" transform="rotate(-10 332 269)"/><ellipse cx="385.5" cy="295" rx="3" ry="5" fill="#0000ff" transform="rotate(-10 385.5 295)"/><ellipse cx="395.5" cy="304" rx="4.4" ry="5.6" fill="#0000ff" transform="rotate(15 395.5 304)"/><ellipse cx="388.5" cy="312" rx="3.4" ry="2" fill="#0000ff"/><ellipse cx="429" cy="293.5" rx="4.6" ry="4" fill="#0000ff"/><ellipse cx="416" cy="322" rx="2" ry="3.6" fill="#0000ff" transform="rotate(-20 416 322)"/><ellipse cx="408" cy="327" rx="1" ry="1.2" fill="#0000ff"/><ellipse cx="410" cy="335.5" rx="2" ry="0.8" fill="#0000ff"/><ellipse cx="476" cy="267.5" rx="8" ry="2.6" fill="#0000ff" transform="rotate(-12 476 267.5)"/><ellipse cx="478" cy="280" rx="4.6" ry="2.4" fill="#0000ff" transform="rotate(-20 478 280)"/><ellipse cx="427.5" cy="220" rx="1.2" ry="1.6" fill="#0000ff"/><ellipse cx="283" cy="245" rx="1" ry="1" fill="#0000ff"/><ellipse cx="363.5" cy="269.5" rx="0.9" ry="1.6" fill="#0000ff"/><ellipse cx="283" cy="313.5" rx="1.5" ry="0.8" fill="#0000ff"/><ellipse cx="416.5" cy="248" rx="0.8" ry="1" fill="#0000ff"/><path d="M266.7,301.7 L282,298.4 L289,293 L297.6,289 L301,285.4" fill="none" stroke="#0000ff" stroke-width="1.8"/><path d="M297,225 L305,222" fill="none" stroke="#0000ff" stroke-width="1.2"/></g><ellipse cx="468" cy="40.3" rx="3.3" ry="2.5" fill="#0000ff"/><rect x="462" y="41" width="1" height="1" fill="#0000ff"/><rect x="463" y="43" width="1" height="1" fill="#0000ff"/><rect x="277.5" y="162.5" width="1" height="1" fill="#0000ff"/><rect x="284" y="167.5" width="1" height="2" fill="#0000ff"/><rect x="274.5" y="164.5" width="2.5" height="1" fill="#0000ff"/><rect x="283" y="166.5" width="2" height="1" fill="#0000ff"/><rect x="284" y="163" width="1" height="2" fill="#0000ff"/><rect x="282.5" y="164.5" width="1.5" height="1" fill="#0000ff"/><rect x="280.5" y="165.5" width="2.5" height="1.5" fill="#0000ff"/><rect x="290" y="157.5" width="2" height="1" fill="#0000ff"/><rect x="288" y="148" width="1.5" height="1" fill="#0000ff"/><rect x="280" y="142" width="1.5" height="1" fill="#0000ff"/><rect x="286.5" y="141" width="2" height="1.5" fill="#0000ff"/><rect x="286.5" y="155" width="1" height="1" fill="#0000ff"/><rect x="283" y="147" width="1.5" height="1" fill="#0000ff"/><rect x="287.5" y="147" width="1" height="1" fill="#0000ff"/><rect x="282.5" y="139" width="2.5" height="1.5" fill="#0000ff"/><rect x="287.5" y="156" width="2" height="1" fill="#0000ff"/><rect x="285" y="152" width="1.5" height="2" fill="#0000ff"/><rect x="283" y="136" width="1" height="2" fill="#0000ff"/><rect x="278" y="136" width="1" height="2" fill="#0000ff"/><rect x="288" y="144.5" width="2" height="1.5" fill="#0000ff"/><rect x="295.5" y="142.5" width="1" height="1.5" fill="#0000ff"/><rect x="289" y="143.5" width="1" height="2" fill="#0000ff"/><rect x="286" y="140.5" width="2.5" height="1" fill="#0000ff"/><rect x="285" y="144" width="2.5" height="1" fill="#0000ff"/><rect x="287.5" y="140" width="2.5" height="1" fill="#0000ff"/><rect x="296.5" y="144" width="1.5" height="1.5" fill="#0000ff"/><rect x="292" y="148" width="1" height="1" fill="#0000ff"/><rect x="300.5" y="151.5" width="2.5" height="1" fill="#0000ff"/><rect x="293" y="148" width="1.5" height="2" fill="#0000ff"/><rect x="301.5" y="139.5" width="1" height="1.5" fill="#0000ff"/><rect x="300.5" y="142" width="2.5" height="2" fill="#0000ff"/><rect x="296.5" y="144.5" width="2.5" height="1" fill="#0000ff"/><rect x="294" y="143" width="1" height="1" fill="#0000ff"/><rect x="295" y="145" width="2.5" height="1" fill="#0000ff"/><rect x="296" y="135.5" width="2.5" height="2" fill="#0000ff"/><rect x="296" y="134.5" width="1" height="1" fill="#0000ff"/><rect x="293" y="131.5" width="1" height="1" fill="#0000ff"/><rect x="299.5" y="139.5" width="1" height="1" fill="#0000ff"/><rect x="293.5" y="125.5" width="1" height="1.5" fill="#0000ff"/><rect x="298" y="123.5" width="2.5" height="1" fill="#0000ff"/><rect x="297" y="132.5" width="1" height="1" fill="#0000ff"/><rect x="293" y="126.5" width="2" height="1" fill="#0000ff"/><rect x="293.5" y="122" width="2" height="1.5" fill="#0000ff"/><rect x="303" y="126" width="2.5" height="2" fill="#0000ff"/><rect x="296" y="127.5" width="2.5" height="1" fill="#0000ff"/><rect x="297" y="120.5" width="2.5" height="1" fill="#0000ff"/><rect x="302.5" y="121" width="1" height="1" fill="#0000ff"/><rect x="305" y="114.5" width="2.5" height="1" fill="#0000ff"/><rect x="302.5" y="114" width="2.5" height="1.5" fill="#0000ff"/><rect x="306.5" y="120" width="1" height="1.5" fill="#0000ff"/><rect x="314" y="117.5" width="1.5" height="1" fill="#0000ff"/><rect x="311" y="118.5" width="1" height="1" fill="#0000ff"/><rect x="313.5" y="116.5" width="1.5" height="1" fill="#0000ff"/><rect x="314.5" y="118" width="2.5" height="1.5" fill="#0000ff"/><rect x="322" y="128" width="1" height="1.5" fill="#0000ff"/><rect x="314.5" y="133" width="1.5" height="1" fill="#0000ff"/><rect x="320" y="126" width="1.5" height="1" fill="#0000ff"/><rect x="315" y="129" width="1.5" height="2" fill="#0000ff"/><rect x="325.5" y="125.5" width="2" height="1.5" fill="#0000ff"/><rect x="317" y="126.5" width="1.5" height="1" fill="#0000ff"/><rect x="330" y="127.5" width="1" height="1" fill="#0000ff"/><rect x="322.5" y="133.5" width="2.5" height="1" fill="#0000ff"/><rect x="332" y="125" width="1" height="1" fill="#0000ff"/><rect x="326.5" y="132" width="1" height="1.5" fill="#0000ff"/><rect x="319" y="126" width="2.5" height="2" fill="#0000ff"/><rect x="335.5" y="131.5" width="1" height="1" fill="#0000ff"/><rect x="345.5" y="128.5" width="1" height="1" fill="#0000ff"/><rect x="339" y="129.5" width="1" height="1.5" fill="#0000ff"/><rect x="337" y="126" width="1" height="2" fill="#0000ff"/><rect x="338.5" y="126.5" width="1.5" height="1" fill="#0000ff"/><rect x="337.5" y="126" width="1.5" height="1" fill="#0000ff"/><rect x="338.5" y="131" width="2" height="1.5" fill="#0000ff"/><rect x="337.5" y="134" width="1" height="1.5" fill="#0000ff"/><rect x="344" y="124" width="1.5" height="2" fill="#0000ff"/><rect x="335.5" y="132" width="2.5" height="1" fill="#0000ff"/><rect x="340.5" y="127" width="2.5" height="1" fill="#0000ff"/><rect x="333.5" y="133.5" width="1.5" height="1.5" fill="#0000ff"/><rect x="331.5" y="137" width="2.5" height="1.5" fill="#0000ff"/><rect x="333.5" y="135.5" width="2.5" height="1" fill="#0000ff"/><rect x="330.5" y="134.5" width="1" height="1.5" fill="#0000ff"/><rect x="328.5" y="134.5" width="1" height="2" fill="#0000ff"/><rect x="321" y="135" width="2" height="2" fill="#0000ff"/><rect x="321.5" y="139" width="1" height="1" fill="#0000ff"/><rect x="329" y="137" width="1" height="1" fill="#0000ff"/><rect x="319" y="134" width="1" height="1" fill="#0000ff"/><rect x="328" y="139" width="1" height="2" fill="#0000ff"/><rect x="315.5" y="137" width="2" height="2" fill="#0000ff"/><rect x="311.5" y="141.5" width="1" height="2" fill="#0000ff"/><rect x="318" y="140.5" width="2" height="1" fill="#0000ff"/><rect x="317.5" y="137.5" width="1" height="2" fill="#0000ff"/><rect x="312" y="147" width="2" height="2" fill="#0000ff"/><rect x="307.5" y="150.5" width="2" height="2" fill="#0000ff"/><rect x="307.5" y="146" width="2.5" height="2" fill="#0000ff"/><rect x="308.5" y="147.5" width="1.5" height="1" fill="#0000ff"/><rect x="306.5" y="149.5" width="1" height="1" fill="#0000ff"/><rect x="309.5" y="151" width="1" height="2" fill="#0000ff"/><rect x="309" y="149.5" width="1" height="2" fill="#0000ff"/><rect x="311" y="154" width="1" height="2" fill="#0000ff"/><rect x="322.5" y="154" width="2" height="2" fill="#0000ff"/><rect x="321.5" y="158.5" width="1" height="2" fill="#0000ff"/><rect x="315" y="150.5" width="1.5" height="2" fill="#0000ff"/><rect x="325" y="160.5" width="2.5" height="1" fill="#0000ff"/><rect x="324.5" y="159" width="1" height="2" fill="#0000ff"/><rect x="314.5" y="150.5" width="2" height="1.5" fill="#0000ff"/><rect x="324" y="162.5" width="2" height="1.5" fill="#0000ff"/><rect x="329.5" y="164.5" width="1" height="2" fill="#0000ff"/><rect x="325.5" y="162.5" width="1.5" height="1" fill="#0000ff"/><rect x="329" y="167" width="1" height="1" fill="#0000ff"/><rect x="321" y="157" width="1" height="2" fill="#0000ff"/><rect x="327" y="163.5" width="1.5" height="1.5" fill="#0000ff"/><rect x="329.5" y="172.5" width="1" height="1" fill="#0000ff"/><rect x="333" y="167" width="1.5" height="2" fill="#0000ff"/><rect x="333" y="166.5" width="1" height="1" fill="#0000ff"/><rect x="332" y="172.5" width="1" height="1" fill="#0000ff"/><rect x="330" y="169" width="2.5" height="1.5" fill="#0000ff"/><rect x="336.5" y="171" width="2" height="1.5" fill="#0000ff"/><rect x="341" y="164.5" width="2" height="1" fill="#0000ff"/><rect x="342.5" y="159.5" width="2.5" height="2" fill="#0000ff"/><rect x="341" y="166" width="1.5" height="1" fill="#0000ff"/><rect x="335" y="163.5" width="1" height="2" fill="#0000ff"/><rect x="339.5" y="162" width="2" height="1.5" fill="#0000ff"/><rect x="335" y="171.5" width="1.5" height="1.5" fill="#0000ff"/><rect x="357.5" y="155.5" width="1" height="1" fill="#0000ff"/><rect x="342.5" y="157.5" width="1" height="2" fill="#0000ff"/><rect x="351" y="160.5" width="1" height="1.5" fill="#0000ff"/><rect x="345" y="156" width="2.5" height="1.5" fill="#0000ff"/><rect x="348" y="157" width="2.5" height="1.5" fill="#0000ff"/><rect x="345" y="156" width="1" height="1" fill="#0000ff"/><rect x="351" y="160" width="1" height="1" fill="#0000ff"/><rect x="343" y="159.5" width="2.5" height="1.5" fill="#0000ff"/><rect x="360.5" y="156" width="1.5" height="1" fill="#0000ff"/><rect x="360" y="158" width="1" height="1" fill="#0000ff"/><rect x="360" y="161" width="2" height="1" fill="#0000ff"/><rect x="359.5" y="168" width="2" height="1.5" fill="#0000ff"/><rect x="354" y="164" width="2" height="1" fill="#0000ff"/><rect x="357.5" y="164" width="1" height="1" fill="#0000ff"/><rect x="358.5" y="157.5" width="1" height="1" fill="#0000ff"/><rect x="355.5" y="174.5" width="2.5" height="1" fill="#0000ff"/><rect x="354.5" y="179" width="1.5" height="2" fill="#0000ff"/><rect x="358.5" y="173" width="1" height="1" fill="#0000ff"/><rect x="354" y="170.5" width="1" height="1" fill="#0000ff"/><rect x="363.5" y="177.5" width="2.5" height="2" fill="#0000ff"/><rect x="358.5" y="179.5" width="2" height="1" fill="#0000ff"/><rect x="373.5" y="181.5" width="2.5" height="1" fill="#0000ff"/><rect x="364.5" y="179.5" width="1.5" height="1" fill="#0000ff"/><rect x="353" y="175" width="2.5" height="1.5" fill="#0000ff"/><rect x="364" y="176.5" width="2" height="1.5" fill="#0000ff"/><rect x="365.5" y="174.5" width="1" height="2" fill="#0000ff"/><rect x="371.5" y="175" width="1" height="1" fill="#0000ff"/><rect x="378" y="178" width="1" height="1" fill="#0000ff"/><rect x="366.5" y="182" width="1" height="2" fill="#0000ff"/><rect x="368.5" y="175" width="1.5" height="2" fill="#0000ff"/><rect x="382" y="185.5" width="1.5" height="2" fill="#0000ff"/><rect x="383" y="189" width="2.5" height="1" fill="#0000ff"/><rect x="380.5" y="181.5" width="2" height="1" fill="#0000ff"/><rect x="385" y="184" width="1" height="1.5" fill="#0000ff"/><rect x="384" y="184" width="1" height="1" fill="#0000ff"/><rect x="376.5" y="180" width="2" height="1" fill="#0000ff"/><rect x="378" y="183" width="1" height="1.5" fill="#0000ff"/><rect x="391" y="186" width="1" height="2" fill="#0000ff"/><rect x="393" y="188.5" width="1.5" height="1.5" fill="#0000ff"/><rect x="390" y="189" width="2" height="1" fill="#0000ff"/><rect x="398.5" y="191.5" width="1" height="1" fill="#0000ff"/><rect x="396.5" y="190.5" width="2.5" height="1.5" fill="#0000ff"/><rect x="396" y="188.5" width="2.5" height="2" fill="#0000ff"/><rect x="397.5" y="190" width="1.5" height="2" fill="#0000ff"/><rect x="399.5" y="190" width="1" height="2" fill="#0000ff"/><rect x="402.5" y="187.5" width="2" height="2" fill="#0000ff"/><rect x="402.5" y="195" width="1" height="2" fill="#0000ff"/><rect x="400.5" y="200" width="1.5" height="1" fill="#0000ff"/><rect x="409.5" y="199.5" width="2" height="1" fill="#0000ff"/><rect x="408" y="200.5" width="1" height="1" fill="#0000ff"/><rect x="411.5" y="196.5" width="2" height="1" fill="#0000ff"/><rect x="413" y="202.5" width="2" height="1.5" fill="#0000ff"/><rect x="415" y="209.5" width="2.5" height="1" fill="#0000ff"/><rect x="409" y="211" width="1.5" height="1" fill="#0000ff"/><rect x="411" y="207.5" width="1" height="2" fill="#0000ff"/><rect x="409.5" y="198.5" width="1.5" height="1" fill="#0000ff"/><rect x="410" y="201" width="2.5" height="2" fill="#0000ff"/><rect x="414" y="205.5" width="1" height="2" fill="#0000ff"/><rect x="409" y="213" width="1" height="1" fill="#0000ff"/><rect x="408.5" y="213" width="1" height="2" fill="#0000ff"/><rect x="410" y="199.5" width="2" height="1.5" fill="#0000ff"/><rect x="406.5" y="205.5" width="1.5" height="2" fill="#0000ff"/><rect x="406" y="202" width="2" height="1" fill="#0000ff"/><rect x="410" y="212.5" width="1.5" height="1" fill="#0000ff"/><rect x="410" y="199.5" width="2.5" height="1" fill="#0000ff"/><rect x="411" y="205" width="1.5" height="1" fill="#0000ff"/><rect x="407.5" y="207.5" width="2.5" height="1.5" fill="#0000ff"/><rect x="406.5" y="202" width="1" height="1" fill="#0000ff"/><rect x="404.5" y="198.5" width="2" height="1" fill="#0000ff"/><rect x="407" y="197" width="1.5" height="1.5" fill="#0000ff"/><rect x="391.5" y="197" width="2.5" height="1.5" fill="#0000ff"/><rect x="400.5" y="203" width="1.5" height="2" fill="#0000ff"/><rect x="390.5" y="203.5" width="1" height="2" fill="#0000ff"/><rect x="389" y="204" width="2" height="1.5" fill="#0000ff"/><rect x="400.5" y="198" width="1" height="2" fill="#0000ff"/><rect x="391.5" y="200.5" width="2" height="1.5" fill="#0000ff"/><rect x="389" y="196.5" width="2.5" height="1.5" fill="#0000ff"/><rect x="383" y="202.5" width="2" height="1.5" fill="#0000ff"/><rect x="384" y="200.5" width="1" height="1.5" fill="#0000ff"/><rect x="381.5" y="204.5" width="2.5" height="1" fill="#0000ff"/><rect x="381.5" y="210" width="2.5" height="2" fill="#0000ff"/><rect x="383" y="208.5" width="1" height="2" fill="#0000ff"/><rect x="385" y="203" width="1.5" height="1" fill="#0000ff"/><rect x="386" y="208.5" width="1" height="1.5" fill="#0000ff"/><rect x="382.5" y="212" width="2" height="1.5" fill="#0000ff"/><rect x="375" y="210" width="2" height="1" fill="#0000ff"/><rect x="379.5" y="216" width="1" height="1" fill="#0000ff"/><rect x="376" y="214" width="2.5" height="1" fill="#0000ff"/><rect x="381" y="202.5" width="1" height="1" fill="#0000ff"/><rect x="375" y="213" width="1" height="1.5" fill="#0000ff"/><rect x="375" y="215" width="1.5" height="1" fill="#0000ff"/><rect x="381.5" y="202.5" width="1.5" height="1" fill="#0000ff"/><rect x="375" y="226" width="1" height="2" fill="#0000ff"/><rect x="381.5" y="227" width="1.5" height="1" fill="#0000ff"/><rect x="376.5" y="227.5" width="2.5" height="1.5" fill="#0000ff"/><rect x="383.5" y="222.5" width="2" height="2" fill="#0000ff"/><rect x="375.5" y="228" width="2" height="1" fill="#0000ff"/><rect x="378.5" y="228.5" width="1" height="1.5" fill="#0000ff"/><rect x="384.5" y="233.5" width="2" height="1.5" fill="#0000ff"/><rect x="383.5" y="228.5" width="1" height="1" fill="#0000ff"/><rect x="386" y="231.5" width="2" height="2" fill="#0000ff"/><rect x="381" y="234" width="1.5" height="1.5" fill="#0000ff"/><rect x="385.5" y="239" width="1" height="1" fill="#0000ff"/><rect x="381.5" y="234" width="1" height="1" fill="#0000ff"/><rect x="385" y="234.5" width="1" height="2" fill="#0000ff"/><rect x="386" y="236.5" width="1" height="1.5" fill="#0000ff"/><rect x="374" y="241.5" width="1" height="1" fill="#0000ff"/><rect x="372" y="237.5" width="2.5" height="1.5" fill="#0000ff"/><rect x="380" y="237.5" width="2" height="1" fill="#0000ff"/><rect x="376.5" y="242.5" width="1" height="1" fill="#0000ff"/><rect x="382" y="244" width="1.5" height="1" fill="#0000ff"/><rect x="378" y="241.5" width="1" height="1" fill="#0000ff"/><rect x="377.5" y="237.5" width="2.5" height="1" fill="#0000ff"/><rect x="370" y="234" width="1.5" height="1.5" fill="#0000ff"/><rect x="371.5" y="228.5" width="1" height="1" fill="#0000ff"/><rect x="371" y="241" width="1.5" height="2" fill="#0000ff"/><rect x="371" y="233" width="1.5" height="1" fill="#0000ff"/><rect x="367.5" y="232" width="1.5" height="2" fill="#0000ff"/><rect x="369" y="232.5" width="2.5" height="1" fill="#0000ff"/><rect x="369.5" y="227" width="1" height="1.5" fill="#0000ff"/><rect x="369" y="227" width="2" height="1" fill="#0000ff"/><rect x="372" y="226" width="2.5" height="1.5" fill="#0000ff"/><rect x="375" y="225" width="1" height="2" fill="#0000ff"/><rect x="371.5" y="212" width="2.5" height="2" fill="#0000ff"/><rect x="369" y="210" width="1" height="1.5" fill="#0000ff"/><rect x="377" y="219" width="1.5" height="1" fill="#0000ff"/><rect x="368" y="216" width="2" height="1" fill="#0000ff"/><rect x="370" y="215.5" width="1.5" height="1" fill="#0000ff"/><rect x="374.5" y="220.5" width="1" height="1.5" fill="#0000ff"/><rect x="369.5" y="209" width="1" height="1" fill="#0000ff"/><rect x="365" y="207" width="1" height="1" fill="#0000ff"/><rect x="369" y="209" width="2.5" height="2" fill="#0000ff"/><rect x="366.5" y="206" width="2.5" height="1.5" fill="#0000ff"/><rect x="363" y="200" width="1" height="2" fill="#0000ff"/><rect x="356.5" y="199" width="1" height="1.5" fill="#0000ff"/><rect x="356" y="200.5" width="1" height="1.5" fill="#0000ff"/><rect x="351.5" y="204" width="1" height="2" fill="#0000ff"/><rect x="358.5" y="204" width="1" height="2" fill="#0000ff"/><rect x="352" y="203.5" width="2.5" height="2" fill="#0000ff"/><rect x="357" y="203" width="1.5" height="1" fill="#0000ff"/><rect x="349.5" y="201.5" width="2" height="2" fill="#0000ff"/><rect x="353.5" y="202.5" width="1.5" height="2" fill="#0000ff"/><rect x="347.5" y="210.5" width="1.5" height="1" fill="#0000ff"/><rect x="350" y="208.5" width="1.5" height="1" fill="#0000ff"/><rect x="350" y="206" width="1.5" height="1.5" fill="#0000ff"/><rect x="348" y="213" width="2.5" height="1" fill="#0000ff"/><rect x="342.5" y="219.5" width="1" height="1" fill="#0000ff"/><rect x="340.5" y="218.5" width="1.5" height="1.5" fill="#0000ff"/><rect x="342" y="219.5" width="2" height="1" fill="#0000ff"/><rect x="341" y="212" width="1" height="1" fill="#0000ff"/><rect x="344.5" y="221" width="2.5" height="2" fill="#0000ff"/><rect x="334.5" y="224" width="2.5" height="1" fill="#0000ff"/><rect x="328.5" y="219" width="1" height="2" fill="#0000ff"/><rect x="336" y="223" width="1" height="1" fill="#0000ff"/><rect x="339" y="221" width="1" height="1.5" fill="#0000ff"/><rect x="333.5" y="219.5" width="1.5" height="2" fill="#0000ff"/><rect x="321.5" y="217.5" width="1" height="1" fill="#0000ff"/><rect x="312.5" y="221.5" width="1.5" height="1" fill="#0000ff"/><rect x="319.5" y="217.5" width="1" height="1" fill="#0000ff"/><rect x="329.5" y="216.5" width="2" height="1" fill="#0000ff"/><rect x="313" y="221" width="1.5" height="1" fill="#0000ff"/><rect x="323" y="219" width="2" height="1" fill="#0000ff"/><rect x="320" y="224" width="1.5" height="1" fill="#0000ff"/><rect x="311.5" y="225" width="1" height="2" fill="#0000ff"/><rect x="305.5" y="218.5" width="1.5" height="1" fill="#0000ff"/><rect x="306.5" y="224.5" width="2.5" height="2" fill="#0000ff"/><rect x="311.5" y="220" width="1" height="1" fill="#0000ff"/><rect x="313" y="221.5" width="1" height="2" fill="#0000ff"/><rect x="299" y="218.5" width="1" height="1" fill="#0000ff"/><rect x="299.5" y="219.5" width="2.5" height="2" fill="#0000ff"/><rect x="305.5" y="221.5" width="1.5" height="1" fill="#0000ff"/><rect x="303.5" y="218.5" width="2.5" height="1" fill="#0000ff"/><rect x="304.5" y="214.5" width="1.5" height="1.5" fill="#0000ff"/><rect x="305.5" y="207" width="1" height="1" fill="#0000ff"/><rect x="309" y="209" width="1" height="1.5" fill="#0000ff"/><rect x="308.5" y="209" width="2" height="2" fill="#0000ff"/><rect x="301" y="206" width="2" height="1" fill="#0000ff"/><rect x="299.5" y="207" width="1" height="1.5" fill="#0000ff"/><rect x="293.5" y="215" width="2.5" height="2" fill="#0000ff"/><rect x="306.5" y="206.5" width="1.5" height="1" fill="#0000ff"/><rect x="293" y="207" width="1.5" height="2" fill="#0000ff"/><rect x="296.5" y="214" width="2" height="1.5" fill="#0000ff"/><rect x="293" y="210.5" width="2.5" height="1.5" fill="#0000ff"/><rect x="297.5" y="206.5" width="2.5" height="1" fill="#0000ff"/><rect x="297.5" y="203" width="1.5" height="1.5" fill="#0000ff"/><rect x="300" y="204.5" width="2" height="1.5" fill="#0000ff"/><rect x="300" y="211" width="2.5" height="2" fill="#0000ff"/><rect x="300" y="212.5" width="1" height="2" fill="#0000ff"/><rect x="299.5" y="209.5" width="1" height="1" fill="#0000ff"/><rect x="304.5" y="204" width="1" height="1" fill="#0000ff"/><rect x="296.5" y="207.5" width="2.5" height="1" fill="#0000ff"/><rect x="300" y="205.5" width="1.5" height="2" fill="#0000ff"/><rect x="297" y="201.5" width="2" height="1.5" fill="#0000ff"/><rect x="295.5" y="198" width="1" height="2" fill="#0000ff"/><rect x="303" y="198.5" width="1.5" height="2" fill="#0000ff"/><rect x="303.5" y="204.5" width="2" height="1" fill="#0000ff"/><rect x="298.5" y="199" width="2" height="1" fill="#0000ff"/><rect x="305.5" y="200.5" width="1.5" height="1" fill="#0000ff"/><rect x="297" y="195.5" width="1" height="1" fill="#0000ff"/><rect x="301" y="192.5" width="1" height="1" fill="#0000ff"/><rect x="296" y="198" width="2.5" height="1.5" fill="#0000ff"/><rect x="302.5" y="190" width="1" height="1" fill="#0000ff"/><rect x="304" y="196" width="2.5" height="2" fill="#0000ff"/><rect x="298" y="188.5" width="1.5" height="1" fill="#0000ff"/><rect x="300" y="192" width="2.5" height="1" fill="#0000ff"/><rect x="291.5" y="192.5" width="1" height="1" fill="#0000ff"/><rect x="286.5" y="185.5" width="1" height="1.5" fill="#0000ff"/><rect x="284.5" y="184.5" width="1" height="1.5" fill="#0000ff"/><rect x="295" y="188.5" width="1.5" height="1" fill="#0000ff"/><rect x="285" y="193" width="1" height="1" fill="#0000ff"/><rect x="289" y="189" width="2.5" height="1" fill="#0000ff"/><rect x="275.5" y="175.5" width="2.5" height="1.5" fill="#0000ff"/><rect x="283" y="180" width="1" height="2" fill="#0000ff"/><rect x="280" y="180" width="1.5" height="2" fill="#0000ff"/><rect x="285.5" y="183" width="2" height="1" fill="#0000ff"/><rect x="277.5" y="179.5" width="2" height="1" fill="#0000ff"/><rect x="275.5" y="177.5" width="1.5" height="1.5" fill="#0000ff"/><rect x="274.5" y="166.5" width="2.5" height="1" fill="#0000ff"/><rect x="278.5" y="172.5" width="1" height="1" fill="#0000ff"/><rect x="277" y="176" width="2.5" height="2" fill="#0000ff"/><rect x="282" y="172.5" width="1.5" height="1.5" fill="#0000ff"/><rect x="389.5" y="133" width="2" height="2" fill="#0000ff"/><rect x="405.5" y="124" width="2" height="2" fill="#0000ff"/><rect x="405" y="125.5" width="1" height="1.5" fill="#0000ff"/><rect x="401" y="129.5" width="2" height="1.5" fill="#0000ff"/><rect x="401.5" y="127.5" width="1.5" height="1.5" fill="#0000ff"/><rect x="402" y="126.5" width="2.5" height="1" fill="#0000ff"/><rect x="394" y="127.5" width="2" height="1.5" fill="#0000ff"/><rect x="405.5" y="128" width="1" height="1" fill="#0000ff"/><rect x="417.5" y="123.5" width="1.5" height="1" fill="#0000ff"/><rect x="411.5" y="126" width="1" height="1" fill="#0000ff"/><rect x="409" y="126" width="2" height="1" fill="#0000ff"/><rect x="419.5" y="122.5" width="2.5" height="1.5" fill="#0000ff"/><rect x="414.5" y="128" width="1.5" height="1.5" fill="#0000ff"/><rect x="417.5" y="124" width="2.5" height="1.5" fill="#0000ff"/><rect x="413" y="123" width="1" height="2" fill="#0000ff"/><rect x="421" y="125.5" width="1" height="2" fill="#0000ff"/><rect x="430.5" y="125" width="2.5" height="1" fill="#0000ff"/><rect x="435" y="118" width="2.5" height="2" fill="#0000ff"/><rect x="429.5" y="117.5" width="1" height="1" fill="#0000ff"/><rect x="425.5" y="119" width="1" height="2" fill="#0000ff"/><rect x="432.5" y="120.5" width="1" height="1" fill="#0000ff"/><rect x="443.5" y="121.5" width="2" height="2" fill="#0000ff"/><rect x="438" y="121.5" width="1.5" height="1.5" fill="#0000ff"/><rect x="448" y="118" width="1.5" height="2" fill="#0000ff"/><rect x="437.5" y="119.5" width="1" height="1.5" fill="#0000ff"/><rect x="448" y="117.5" width="2" height="1.5" fill="#0000ff"/><rect x="443" y="121" width="1.5" height="1.5" fill="#0000ff"/><rect x="452.5" y="113.5" width="2" height="1.5" fill="#0000ff"/><rect x="466" y="110" width="1.5" height="1" fill="#0000ff"/><rect x="454" y="111.5" width="2" height="1" fill="#0000ff"/><rect x="452.5" y="117.5" width="1.5" height="1" fill="#0000ff"/><rect x="452.5" y="112.5" width="1" height="1" fill="#0000ff"/><rect x="455" y="112" width="2" height="1" fill="#0000ff"/><rect x="456.5" y="116" width="1" height="2" fill="#0000ff"/><rect x="475.5" y="110" width="1" height="1.5" fill="#0000ff"/><rect x="469.5" y="114" width="1" height="1" fill="#0000ff"/><rect x="472.5" y="114" width="1" height="2" fill="#0000ff"/><rect x="472.5" y="113" width="2" height="2" fill="#0000ff"/><rect x="468.5" y="114" width="1.5" height="1" fill="#0000ff"/><rect x="477" y="106.5" width="1.5" height="1.5" fill="#0000ff"/><rect x="481.5" y="110" width="1" height="2" fill="#0000ff"/><rect x="481" y="108" width="2" height="1.5" fill="#0000ff"/><rect x="478.5" y="108.5" width="1.5" height="1" fill="#0000ff"/><rect x="488" y="114.5" width="2" height="1.5" fill="#0000ff"/><rect x="486.5" y="108" width="1" height="2" fill="#0000ff"/><rect x="483" y="111" width="1" height="2" fill="#0000ff"/><rect x="488.5" y="116" width="2.5" height="1" fill="#0000ff"/><rect x="484" y="110" width="1" height="2" fill="#0000ff"/><rect x="481" y="120.5" width="1.5" height="1" fill="#0000ff"/><rect x="482" y="120" width="1" height="1" fill="#0000ff"/><rect x="475" y="121.5" width="2.5" height="1.5" fill="#0000ff"/><rect x="481" y="120.5" width="2.5" height="1" fill="#0000ff"/><rect x="478.5" y="122" width="1" height="2" fill="#0000ff"/><rect x="472.5" y="131.5" width="1" height="1" fill="#0000ff"/><rect x="476.5" y="129.5" width="2.5" height="1" fill="#0000ff"/><rect x="477.5" y="123.5" width="1" height="2" fill="#0000ff"/><rect x="474.5" y="125.5" width="2" height="1" fill="#0000ff"/><rect x="473.5" y="124.5" width="2" height="1.5" fill="#0000ff"/><rect x="469.5" y="137.5" width="1" height="1" fill="#0000ff"/><rect x="471.5" y="130.5" width="1" height="1" fill="#0000ff"/><rect x="464" y="128.5" width="1" height="1" fill="#0000ff"/><rect x="469.5" y="132.5" width="2" height="1.5" fill="#0000ff"/><rect x="463.5" y="133" width="2" height="2" fill="#0000ff"/><rect x="467.5" y="132" width="1" height="1.5" fill="#0000ff"/><rect x="467.5" y="128" width="1" height="1" fill="#0000ff"/><rect x="462" y="125.5" width="2" height="2" fill="#0000ff"/><rect x="464" y="122.5" width="1.5" height="1" fill="#0000ff"/><rect x="466.5" y="129" width="1" height="1" fill="#0000ff"/><rect x="452.5" y="125.5" width="1" height="1" fill="#0000ff"/><rect x="454.5" y="117" width="2.5" height="1" fill="#0000ff"/><rect x="453.5" y="120.5" width="2.5" height="1" fill="#0000ff"/><rect x="456" y="120" width="1.5" height="1" fill="#0000ff"/><rect x="448.5" y="125" width="2.5" height="1.5" fill="#0000ff"/><rect x="453.5" y="128.5" width="2.5" height="1" fill="#0000ff"/><rect x="447.5" y="125.5" width="2.5" height="1" fill="#0000ff"/><rect x="442" y="130.5" width="1.5" height="2" fill="#0000ff"/><rect x="440.5" y="131" width="1" height="1.5" fill="#0000ff"/><rect x="446" y="129" width="1" height="1.5" fill="#0000ff"/><rect x="439" y="132" width="1" height="2" fill="#0000ff"/><rect x="437.5" y="129" width="1" height="1.5" fill="#0000ff"/><rect x="441.5" y="136" width="1.5" height="1" fill="#0000ff"/><rect x="430.5" y="128" width="2" height="1" fill="#0000ff"/><rect x="419.5" y="133.5" width="2.5" height="1" fill="#0000ff"/><rect x="432" y="130.5" width="1" height="1" fill="#0000ff"/><rect x="425" y="128.5" width="2" height="1" fill="#0000ff"/><rect x="427" y="131" width="1" height="1.5" fill="#0000ff"/><rect x="423" y="132" width="1.5" height="1.5" fill="#0000ff"/><rect x="432.5" y="132" width="1" height="2" fill="#0000ff"/><rect x="409" y="128" width="1.5" height="2" fill="#0000ff"/><rect x="422.5" y="133.5" width="1" height="1.5" fill="#0000ff"/><rect x="414" y="132.5" width="1.5" height="1" fill="#0000ff"/><rect x="415.5" y="132" width="1" height="2" fill="#0000ff"/><rect x="417" y="129.5" width="2" height="2" fill="#0000ff"/><rect x="407" y="132" width="1" height="2" fill="#0000ff"/><rect x="410" y="135" width="1" height="1" fill="#0000ff"/><rect x="400" y="138.5" width="1" height="1" fill="#0000ff"/><rect x="408.5" y="130.5" width="1" height="1" fill="#0000ff"/><rect x="399.5" y="133.5" width="2.5" height="2" fill="#0000ff"/><rect x="390.5" y="136.5" width="2" height="1" fill="#0000ff"/><rect x="404" y="137.5" width="1.5" height="1" fill="#0000ff"/><rect x="398" y="136" width="1" height="1" fill="#0000ff"/><rect x="391" y="134" width="2.5" height="1.5" fill="#0000ff"/><rect x="390.5" y="135.5" width="1.5" height="2" fill="#0000ff"/><rect x="387.5" y="134.5" width="1.5" height="1" fill="#0000ff"/><rect x="392" y="134" width="1" height="2" fill="#0000ff"/><rect x="390" y="130" width="1" height="1" fill="#0000ff"/><rect x="287" y="123" width="1.5" height="1.5" fill="#0000ff"/><rect x="289" y="117.5" width="1" height="1" fill="#0000ff"/><rect x="280.5" y="127.5" width="1.5" height="1" fill="#0000ff"/><rect x="285" y="121.5" width="2" height="1.5" fill="#0000ff"/><rect x="273.5" y="111.5" width="1" height="1" fill="#0000ff"/><rect x="269" y="114.5" width="1.5" height="1" fill="#0000ff"/><rect x="302" y="105.5" width="1.5" height="1.5" fill="#0000ff"/><rect x="307.5" y="93" width="1" height="1.5" fill="#0000ff"/><rect x="302.5" y="89" width="1" height="1" fill="#0000ff"/><rect x="298" y="101" width="2" height="1.5" fill="#0000ff"/><rect x="327" y="151.5" width="1.5" height="1" fill="#0000ff"/><rect x="326.5" y="149" width="1.5" height="1" fill="#0000ff"/><rect x="332.5" y="143" width="2" height="1" fill="#0000ff"/><rect x="342" y="143" width="1" height="1" fill="#0000ff"/><rect x="335" y="141" width="1.5" height="1" fill="#0000ff"/><rect x="345.5" y="152.5" width="1.5" height="1" fill="#0000ff"/><rect x="346" y="152.5" width="2" height="1.5" fill="#0000ff"/><rect x="328" y="148" width="2" height="1" fill="#0000ff"/><rect x="357" y="140.5" width="1" height="1" fill="#0000ff"/><rect x="357" y="147" width="2" height="1" fill="#0000ff"/><rect x="358" y="141.5" width="1" height="1" fill="#0000ff"/><rect x="382.5" y="166.5" width="1.5" height="1" fill="#0000ff"/><rect x="376.5" y="164.5" width="1.5" height="1" fill="#0000ff"/><rect x="384" y="157" width="1.5" height="1" fill="#0000ff"/><rect x="391.5" y="166.5" width="2" height="1" fill="#0000ff"/><rect x="389.5" y="157.5" width="2" height="1.5" fill="#0000ff"/><rect x="392.5" y="167.5" width="1" height="1" fill="#0000ff"/><rect x="407.5" y="155.5" width="1.5" height="1.5" fill="#0000ff"/><rect x="408.5" y="142" width="1" height="1" fill="#0000ff"/><rect x="405" y="153" width="1" height="1.5" fill="#0000ff"/><rect x="414" y="153.5" width="2" height="1" fill="#0000ff"/><rect x="418" y="146" width="1.5" height="1" fill="#0000ff"/><rect x="437" y="154" width="1.5" height="1.5" fill="#0000ff"/><rect x="422.5" y="161" width="2" height="1" fill="#0000ff"/><rect x="430.5" y="155.5" width="2" height="1" fill="#0000ff"/><rect x="424.5" y="157" width="2" height="1" fill="#0000ff"/><rect x="422.5" y="159" width="2" height="1.5" fill="#0000ff"/><rect x="428" y="155" width="2" height="1.5" fill="#0000ff"/><rect x="439" y="162" width="2" height="1.5" fill="#0000ff"/><rect x="438.5" y="153.5" width="1.5" height="1" fill="#0000ff"/><rect x="451" y="158.5" width="2" height="1.5" fill="#0000ff"/><rect x="437" y="155" width="1.5" height="1" fill="#0000ff"/><rect x="445" y="152" width="1.5" height="1" fill="#0000ff"/><rect x="450" y="153" width="1" height="1" fill="#0000ff"/><rect x="462.5" y="146" width="1.5" height="1" fill="#0000ff"/><rect x="460" y="145.5" width="1" height="1" fill="#0000ff"/><rect x="456.5" y="146.5" width="1" height="1.5" fill="#0000ff"/><rect x="465.5" y="157" width="2" height="1" fill="#0000ff"/><rect x="466.5" y="149" width="2" height="1" fill="#0000ff"/><rect x="462.5" y="155" width="1.5" height="1.5" fill="#0000ff"/><rect x="469.5" y="155" width="1" height="1.5" fill="#0000ff"/><rect x="461" y="146" width="1.5" height="1" fill="#0000ff"/><rect x="464" y="144" width="1" height="1.5" fill="#0000ff"/><rect x="469" y="167" width="1.5" height="1" fill="#0000ff"/><rect x="457" y="165.5" width="2" height="1.5" fill="#0000ff"/><rect x="460.5" y="170" width="1" height="1" fill="#0000ff"/><rect x="459" y="168.5" width="2" height="1.5" fill="#0000ff"/><rect x="465.5" y="155.5" width="2" height="1" fill="#0000ff"/><rect x="467.5" y="173" width="1.5" height="1.5" fill="#0000ff"/><rect x="474" y="173.5" width="2" height="1" fill="#0000ff"/><rect x="464" y="171" width="2" height="1" fill="#0000ff"/><rect x="464" y="166" width="1.5" height="1" fill="#0000ff"/><rect x="190" y="137" width="1.5" height="1" fill="#0000ff"/><rect x="204" y="149" width="2" height="1" fill="#0000ff"/><rect x="190" y="146.5" width="1.5" height="1" fill="#0000ff"/><rect x="206" y="149" width="1" height="1" fill="#0000ff"/><rect x="210" y="144" width="1.5" height="1.5" fill="#0000ff"/><rect x="199.5" y="135.5" width="1" height="1.5" fill="#0000ff"/><rect x="210" y="147.5" width="1.5" height="1.5" fill="#0000ff"/><rect x="221" y="111" width="2" height="1" fill="#0000ff"/><rect x="224" y="117.5" width="1" height="1" fill="#0000ff"/><rect x="222.5" y="113.5" width="1" height="1" fill="#0000ff"/><rect x="222.5" y="112" width="1" height="1.5" fill="#0000ff"/><rect x="238" y="67.5" width="2" height="1" fill="#0000ff"/><rect x="256.5" y="77" width="1" height="1" fill="#0000ff"/><rect x="236.5" y="68.5" width="1" height="1" fill="#0000ff"/><rect x="263.5" y="70.5" width="2" height="1.5" fill="#0000ff"/><rect x="255" y="64.5" width="1.5" height="1" fill="#0000ff"/><rect x="267" y="71" width="1" height="1" fill="#0000ff"/><rect x="258.5" y="76.5" width="2" height="1" fill="#0000ff"/><rect x="234.5" y="72" width="1.5" height="1" fill="#0000ff"/><rect x="235" y="74" width="1" height="1" fill="#0000ff"/><rect x="253.5" y="63" width="1.5" height="1" fill="#0000ff"/><rect x="264.5" y="62.5" width="2" height="1" fill="#0000ff"/><rect x="258.5" y="56.5" width="1.5" height="1" fill="#0000ff"/><rect x="260.5" y="55.5" width="1" height="1" fill="#0000ff"/><rect x="225.5" y="63.5" width="2" height="1" fill="#0000ff"/><rect x="221" y="52" width="2" height="1" fill="#0000ff"/><rect x="231.5" y="58.5" width="1" height="1" fill="#0000ff"/><rect x="230.5" y="52" width="1.5" height="1" fill="#0000ff"/><rect x="232.5" y="55" width="1.5" height="1" fill="#0000ff"/><rect x="265.5" y="34" width="1.5" height="1" fill="#0000ff"/><rect x="266" y="41" width="1" height="1" fill="#0000ff"/><rect x="255" y="32.5" width="1.5" height="1.5" fill="#0000ff"/><rect x="264.5" y="40.5" width="1" height="1" fill="#0000ff"/><rect x="56.5" y="168.5" width="1" height="1.5" fill="#0000ff"/><rect x="61.5" y="177" width="2" height="1" fill="#0000ff"/><rect x="56" y="172" width="1" height="1" fill="#0000ff"/><rect x="61.5" y="176" width="1" height="1.5" fill="#0000ff"/><rect x="79.5" y="171" width="1" height="1.5" fill="#0000ff"/><rect x="60" y="166.5" width="2" height="1.5" fill="#0000ff"/><rect x="75.5" y="176.5" width="1" height="1" fill="#0000ff"/><rect x="77.5" y="168.5" width="2" height="1" fill="#0000ff"/><rect x="375.5" y="267" width="1" height="1" fill="#0000ff"/><rect x="376" y="250.5" width="2" height="1.5" fill="#0000ff"/><rect x="378" y="266" width="2" height="1" fill="#0000ff"/><rect x="382" y="266.5" width="1.5" height="1" fill="#0000ff"/><rect x="375" y="250" width="1" height="1" fill="#0000ff"/><rect x="375" y="265" width="1" height="1.5" fill="#0000ff"/><rect x="392.5" y="264.5" width="1.5" height="1" fill="#0000ff"/><rect x="380.5" y="273.5" width="2" height="1.5" fill="#0000ff"/><rect x="391.5" y="277" width="1" height="1" fill="#0000ff"/><rect x="382" y="265.5" width="1" height="1" fill="#0000ff"/><rect x="379" y="268.5" width="1.5" height="1" fill="#0000ff"/><rect x="385.5" y="262" width="2" height="1" fill="#0000ff"/><rect x="382" y="284" width="1" height="1" fill="#0000ff"/><rect x="376" y="277.5" width="2" height="1.5" fill="#0000ff"/><rect x="378.5" y="275" width="1" height="1" fill="#0000ff"/><rect x="383.5" y="283.5" width="2" height="1.5" fill="#0000ff"/><rect x="403" y="240.5" width="1" height="1" fill="#0000ff"/><rect x="401.5" y="238.5" width="1.5" height="1" fill="#0000ff"/><rect x="387.5" y="237" width="1" height="1" fill="#0000ff"/><rect x="401" y="243" width="1" height="1" fill="#0000ff"/><rect x="392" y="244.5" width="1.5" height="1.5" fill="#0000ff"/><rect x="325.5" y="267" width="2" height="1" fill="#0000ff"/><rect x="326" y="270" width="1" height="1" fill="#0000ff"/><rect x="319" y="260.5" width="1" height="1" fill="#0000ff"/><rect x="317" y="260" width="1" height="1" fill="#0000ff"/><rect x="324.5" y="270.5" width="1" height="1" fill="#0000ff"/><rect x="324.5" y="267" width="1.5" height="1" fill="#0000ff"/><rect x="329" y="274.5" width="1.5" height="1" fill="#0000ff"/><rect x="327" y="266.5" width="1" height="1" fill="#0000ff"/><rect x="333" y="273.5" width="1.5" height="1" fill="#0000ff"/><rect x="390" y="289" width="1.5" height="1" fill="#0000ff"/><rect x="390" y="298.5" width="1.5" height="1.5" fill="#0000ff"/><rect x="387" y="288.5" width="1.5" height="1.5" fill="#0000ff"/><rect x="392.5" y="293.5" width="2" height="1.5" fill="#0000ff"/><rect x="396" y="297.5" width="1.5" height="1" fill="#0000ff"/><rect x="396" y="313.5" width="1" height="1" fill="#0000ff"/><rect x="403" y="304" width="2" height="1" fill="#0000ff"/><rect x="401" y="308.5" width="1.5" height="1" fill="#0000ff"/><rect x="401.5" y="302.5" width="1" height="1" fill="#0000ff"/><rect x="401" y="298.5" width="1.5" height="1" fill="#0000ff"/><rect x="435" y="292.5" width="1" height="1.5" fill="#0000ff"/><rect x="431.5" y="287.5" width="1.5" height="1.5" fill="#0000ff"/><rect x="435.5" y="292" width="1.5" height="1" fill="#0000ff"/><rect x="426.5" y="287.5" width="1.5" height="1" fill="#0000ff"/><rect x="434.5" y="297" width="2" height="1" fill="#0000ff"/><rect x="481" y="272" width="1.5" height="1" fill="#0000ff"/><rect x="463.5" y="266.5" width="1.5" height="1" fill="#0000ff"/><rect x="475" y="272" width="2" height="1" fill="#0000ff"/><rect x="481.5" y="264" width="1.5" height="1" fill="#0000ff"/><rect x="484" y="270" width="2" height="1" fill="#0000ff"/><rect x="471.5" y="262" width="1" height="1" fill="#0000ff"/><rect x="482.5" y="276" width="1" height="1" fill="#0000ff"/><rect x="484.5" y="282.5" width="1" height="1" fill="#0000ff"/><rect x="483.5" y="283.5" width="2" height="1.5" fill="#0000ff"/><rect x="484.5" y="283" width="1" height="1" fill="#0000ff"/><ellipse cx="300" cy="165" rx="2.4" ry="1.2" fill="#a8a8a8"/><ellipse cx="296" cy="180" rx="2" ry="1" fill="#a8a8a8"/><ellipse cx="318" cy="183" rx="3.5" ry="1.4" fill="#a8a8a8"/><ellipse cx="332" cy="205" rx="1.5" ry="4" fill="#a8a8a8"/><ellipse cx="338" cy="212" rx="1.2" ry="3" fill="#a8a8a8"/><ellipse cx="346" cy="196" rx="1" ry="2.5" fill="#a8a8a8"/><ellipse cx="351" cy="180" rx="1.6" ry="1" fill="#a8a8a8"/><ellipse cx="330" cy="190" rx="2.5" ry="1.2" fill="#a8a8a8"/><ellipse cx="384" cy="197" rx="3" ry="2" fill="#a8a8a8"/><ellipse cx="309" cy="128" rx="3" ry="1.6" fill="#a8a8a8"/><ellipse cx="303" cy="140" rx="1.6" ry="2.4" fill="#a8a8a8"/><ellipse cx="358" cy="210" rx="1" ry="2" fill="#a8a8a8"/><ellipse cx="386" cy="225" rx="1" ry="2.5" fill="#a8a8a8"/><rect x="325" y="175" width="1" height="1" fill="#989898"/><rect x="285" y="184" width="3" height="1" fill="#b4b4b4"/><rect x="333" y="192" width="1" height="2" fill="#b4b4b4"/><rect x="299" y="214" width="2" height="1" fill="#a0a0a0"/><rect x="305" y="158" width="3" height="2" fill="#a0a0a0"/><rect x="352" y="176" width="1" height="1" fill="#a0a0a0"/><rect x="343" y="199" width="2" height="1" fill="#b4b4b4"/><rect x="364" y="177" width="2" height="1" fill="#a0a0a0"/><rect x="346" y="150" width="2" height="1" fill="#b4b4b4"/><rect x="358" y="159" width="1" height="1" fill="#989898"/><rect x="364" y="158" width="3" height="1" fill="#a0a0a0"/><rect x="351" y="163" width="1" height="1" fill="#a0a0a0"/><rect x="363" y="159" width="1" height="2" fill="#a0a0a0"/><rect x="334" y="187" width="1" height="1" fill="#a0a0a0"/><rect x="319" y="193" width="1" height="2" fill="#989898"/><rect x="297" y="214" width="1" height="1" fill="#b4b4b4"/><rect x="333" y="191" width="1" height="2" fill="#b4b4b4"/><rect x="349" y="189" width="1" height="1" fill="#989898"/><rect x="319" y="212" width="1" height="2" fill="#989898"/><rect x="288" y="175" width="3" height="2" fill="#989898"/><rect x="352" y="156" width="2" height="1" fill="#989898"/><rect x="316" y="164" width="1" height="2" fill="#989898"/><rect x="286" y="204" width="2" height="1" fill="#b4b4b4"/><rect x="294" y="165" width="2" height="1" fill="#a0a0a0"/><rect x="311" y="169" width="3" height="1" fill="#a0a0a0"/><rect x="318" y="188" width="2" height="1" fill="#b4b4b4"/><rect x="346" y="167" width="1" height="1" fill="#989898"/><rect x="304" y="216" width="2" height="2" fill="#b4b4b4"/><rect x="368" y="188" width="1" height="2" fill="#b4b4b4"/><rect x="299" y="207" width="2" height="1" fill="#a0a0a0"/><rect x="367" y="205" width="2" height="1" fill="#a0a0a0"/><rect x="337" y="151" width="1" height="1" fill="#a0a0a0"/><rect x="353" y="170" width="1" height="1" fill="#b4b4b4"/><rect x="296" y="188" width="1" height="1" fill="#989898"/><rect x="333" y="197" width="1" height="1" fill="#b4b4b4"/><rect x="297" y="188" width="2" height="2" fill="#a0a0a0"/><rect x="342" y="169" width="3" height="2" fill="#b4b4b4"/><rect x="315" y="213" width="2" height="2" fill="#a0a0a0"/><rect x="299" y="193" width="1" height="1" fill="#a0a0a0"/><rect x="360" y="164" width="2" height="1" fill="#989898"/><rect x="333" y="176" width="1" height="2" fill="#b4b4b4"/><rect x="336" y="168" width="1" height="2" fill="#a0a0a0"/><rect x="335" y="190" width="2" height="2" fill="#b4b4b4"/><rect x="330" y="187" width="1" height="2" fill="#989898"/><rect x="332" y="170" width="1" height="2" fill="#a0a0a0"/><rect x="293" y="198" width="2" height="1" fill="#b4b4b4"/><g filter="url(#rough2)"><path d="M305,156.6 L312,156 L322,162 L330,170.5 L338,177 L343,183 L339,184.5 L331,179.5 L322,172.5 L315,166 L308,161.5 Z" fill="#ff1400"/><path d="M307.5,157.8 L312,158 L320,163.2 L327,170.4 L333,175.6 L330.5,177.2 L322,171 L315.6,164.6 L309,160.4 Z" fill="#ffa000"/><ellipse cx="371.5" cy="190.5" rx="7.4" ry="5.6" fill="#ff1400"/><ellipse cx="371" cy="190.5" rx="5.6" ry="4.2" fill="#ffa000"/><ellipse cx="337" cy="147.8" rx="4.6" ry="2.6" fill="#ff1400"/><ellipse cx="336.5" cy="147.8" rx="3.2" ry="1.5" fill="#ffa000"/><ellipse cx="284.5" cy="173.4" rx="1.6" ry="3.4" fill="#ff1400"/><ellipse cx="293.8" cy="142.3" rx="2.4" ry="1.5" fill="#ff3c00"/><ellipse cx="300.4" cy="137.5" rx="0.9" ry="1.8" fill="#ff1400"/><ellipse cx="306.4" cy="132" rx="0.9" ry="1.2" fill="#ff1400"/><ellipse cx="346.5" cy="160.4" rx="2.2" ry="2.6" fill="#ff1400"/><ellipse cx="350" cy="168.6" rx="2.4" ry="2.6" fill="#ffa000"/><ellipse cx="349.4" cy="165.6" rx="1.2" ry="1.2" fill="#ff1400"/><ellipse cx="356.6" cy="179.6" rx="2.8" ry="2.8" fill="#ff1400"/><ellipse cx="361" cy="181.5" rx="3" ry="1" fill="#ff1400"/><ellipse cx="351.6" cy="188" rx="2.6" ry="3" fill="#ff1400"/><ellipse cx="352" cy="188.4" rx="1.4" ry="1.8" fill="#ffa000"/><ellipse cx="316.8" cy="198.6" rx="1.4" ry="1.2" fill="#ff1400"/><ellipse cx="317" cy="181" rx="2.6" ry="3" fill="#ff1400"/><ellipse cx="344" cy="176" rx="1.5" ry="1.5" fill="#ff1400"/><ellipse cx="360" cy="193.5" rx="2" ry="1.4" fill="#ff1400"/><ellipse cx="378.5" cy="196.5" rx="2.2" ry="1.4" fill="#ff1400"/><ellipse cx="205.8" cy="137.2" rx="1.2" ry="1.2" fill="#ff1400"/><ellipse cx="341" cy="165" rx="1" ry="1.5" fill="#ff1400"/><ellipse cx="431" cy="197" rx="0.9" ry="0.7" fill="#ff1400"/></g></g><line x1="78" y1="102.5" x2="89" y2="102.5" stroke="#f0e68c" stroke-width="1"/><line x1="83.5" y1="97" x2="83.5" y2="108" stroke="#f0e68c" stroke-width="1"/><line x1="78" y1="183.5" x2="89" y2="183.5" stroke="#f0e68c" stroke-width="1"/><line x1="83.5" y1="178" x2="83.5" y2="189" stroke="#f0e68c" stroke-width="1"/><line x1="78" y1="265.5" x2="89" y2="265.5" stroke="#f0e68c" stroke-width="1"/><line x1="83.5" y1="260" x2="83.5" y2="271" stroke="#f0e68c" stroke-width="1"/><line x1="78" y1="346.5" x2="89" y2="346.5" stroke="#f0e68c" stroke-width="1"/><line x1="83.5" y1="341" x2="83.5" y2="352" stroke="#f0e68c" stroke-width="1"/><line x1="158" y1="102.5" x2="169" y2="102.5" stroke="#f0e68c" stroke-width="1"/><line x1="163.5" y1="97" x2="163.5" y2="108" stroke="#f0e68c" stroke-width="1"/><line x1="158" y1="183.5" x2="169" y2="183.5" stroke="#f0e68c" stroke-width="1"/><line x1="163.5" y1="178" x2="163.5" y2="189" stroke="#f0e68c" stroke-width="1"/><line x1="158" y1="265.5" x2="169" y2="265.5" stroke="#f0e68c" stroke-width="1"/><line x1="163.5" y1="260" x2="163.5" y2="271" stroke="#f0e68c" stroke-width="1"/><line x1="158" y1="346.5" x2="169" y2="346.5" stroke="#f0e68c" stroke-width="1"/><line x1="163.5" y1="341" x2="163.5" y2="352" stroke="#f0e68c" stroke-width="1"/><line x1="238" y1="102.5" x2="249" y2="102.5" stroke="#f0e68c" stroke-width="1"/><line x1="243.5" y1="97" x2="243.5" y2="108" stroke="#f0e68c" stroke-width="1"/><line x1="238" y1="183.5" x2="249" y2="183.5" stroke="#f0e68c" stroke-width="1"/><line x1="243.5" y1="178" x2="243.5" y2="189" stroke="#f0e68c" stroke-width="1"/><line x1="238" y1="265.5" x2="249" y2="265.5" stroke="#f0e68c" stroke-width="1"/><line x1="243.5" y1="260" x2="243.5" y2="271" stroke="#f0e68c" stroke-width="1"/><line x1="238" y1="346.5" x2="249" y2="346.5" stroke="#f0e68c" stroke-width="1"/><line x1="243.5" y1="341" x2="243.5" y2="352" stroke="#f0e68c" stroke-width="1"/><line x1="318" y1="102.5" x2="329" y2="102.5" stroke="#f0e68c" stroke-width="1"/><line x1="323.5" y1="97" x2="323.5" y2="108" stroke="#f0e68c" stroke-width="1"/><line x1="318" y1="183.5" x2="329" y2="183.5" stroke="#f0e68c" stroke-width="1"/><line x1="323.5" y1="178" x2="323.5" y2="189" stroke="#f0e68c" stroke-width="1"/><line x1="318" y1="265.5" x2="329" y2="265.5" stroke="#f0e68c" stroke-width="1"/><line x1="323.5" y1="260" x2="323.5" y2="271" stroke="#f0e68c" stroke-width="1"/><line x1="318" y1="346.5" x2="329" y2="346.5" stroke="#f0e68c" stroke-width="1"/><line x1="323.5" y1="341" x2="323.5" y2="352" stroke="#f0e68c" stroke-width="1"/><line x1="398" y1="102.5" x2="409" y2="102.5" stroke="#f0e68c" stroke-width="1"/><line x1="403.5" y1="97" x2="403.5" y2="108" stroke="#f0e68c" stroke-width="1"/><line x1="398" y1="183.5" x2="409" y2="183.5" stroke="#f0e68c" stroke-width="1"/><line x1="403.5" y1="178" x2="403.5" y2="189" stroke="#f0e68c" stroke-width="1"/><line x1="398" y1="265.5" x2="409" y2="265.5" stroke="#f0e68c" stroke-width="1"/><line x1="403.5" y1="260" x2="403.5" y2="271" stroke="#f0e68c" stroke-width="1"/><line x1="398" y1="346.5" x2="409" y2="346.5" stroke="#f0e68c" stroke-width="1"/><line x1="403.5" y1="341" x2="403.5" y2="352" stroke="#f0e68c" stroke-width="1"/><line x1="478" y1="102.5" x2="489" y2="102.5" stroke="#f0e68c" stroke-width="1"/><line x1="483.5" y1="97" x2="483.5" y2="108" stroke="#f0e68c" stroke-width="1"/><line x1="478" y1="183.5" x2="489" y2="183.5" stroke="#f0e68c" stroke-width="1"/><line x1="483.5" y1="178" x2="483.5" y2="189" stroke="#f0e68c" stroke-width="1"/><line x1="478" y1="265.5" x2="489" y2="265.5" stroke="#f0e68c" stroke-width="1"/><line x1="483.5" y1="260" x2="483.5" y2="271" stroke="#f0e68c" stroke-width="1"/><line x1="478" y1="346.5" x2="489" y2="346.5" stroke="#f0e68c" stroke-width="1"/><line x1="483.5" y1="341" x2="483.5" y2="352" stroke="#f0e68c" stroke-width="1"/><text y="27" font-size="25" fill="#ffff00"><tspan x="9.7" textLength="27.0" lengthAdjust="spacingAndGlyphs">21</tspan><tspan x="35.4537" textLength="15.3" lengthAdjust="spacingAndGlyphs">-</tspan><tspan x="51.2" textLength="38.4" lengthAdjust="spacingAndGlyphs">aug</tspan><tspan x="92.9537" textLength="15.3" lengthAdjust="spacingAndGlyphs">-</tspan><tspan x="108.4" textLength="145.2" lengthAdjust="spacingAndGlyphs">1997,20:05:00</tspan></text><text y="27" font-size="25" fill="#fff"><tspan x="268.75" textLength="11.5" lengthAdjust="spacingAndGlyphs">ir</tspan> <tspan x="290" textLength="44.0" lengthAdjust="spacingAndGlyphs">plot.</tspan> <tspan x="348.75" textLength="122.5" lengthAdjust="spacingAndGlyphs">Rhb_lowprf</tspan> <tspan x="480" textLength="69.0" lengthAdjust="spacingAndGlyphs">maxdz</tspan></text><text y="57" font-size="25" fill="#fff"><tspan x="11" textLength="50.5" lengthAdjust="spacingAndGlyphs">filled</tspan> <tspan x="69.4" textLength="87.0" lengthAdjust="spacingAndGlyphs">contour.</tspan></text><text y="372.5" font-size="17" fill="#f0e68c"><tspan x="62.5901" textLength="14.3" lengthAdjust="spacingAndGlyphs">-</tspan><tspan x="78.75" textLength="24.5" lengthAdjust="spacingAndGlyphs">135</tspan></text><text y="372.5" font-size="17" fill="#f0e68c"><tspan x="142.59" textLength="14.3" lengthAdjust="spacingAndGlyphs">-</tspan><tspan x="158.75" textLength="24.5" lengthAdjust="spacingAndGlyphs">130</tspan></text><text y="372.5" font-size="17" fill="#f0e68c"><tspan x="222.59" textLength="14.3" lengthAdjust="spacingAndGlyphs">-</tspan><tspan x="238.75" textLength="24.5" lengthAdjust="spacingAndGlyphs">125</tspan></text><text y="372.5" font-size="17" fill="#f0e68c"><tspan x="302.59" textLength="14.3" lengthAdjust="spacingAndGlyphs">-</tspan><tspan x="318.75" textLength="24.5" lengthAdjust="spacingAndGlyphs">120</tspan></text><text y="372.5" font-size="17" fill="#f0e68c"><tspan x="382.59" textLength="14.3" lengthAdjust="spacingAndGlyphs">-</tspan><tspan x="398.75" textLength="24.5" lengthAdjust="spacingAndGlyphs">115</tspan></text><text y="372.5" font-size="17" fill="#f0e68c"><tspan x="462.59" textLength="14.3" lengthAdjust="spacingAndGlyphs">-</tspan><tspan x="478.75" textLength="24.5" lengthAdjust="spacingAndGlyphs">110</tspan></text><text x="15.7" y="101" font-size="17" fill="#f0e68c" textLength="17.5" lengthAdjust="spacingAndGlyphs">15</text><text x="15.7" y="182" font-size="17" fill="#f0e68c" textLength="17.5" lengthAdjust="spacingAndGlyphs">10</text><text x="24.6" y="264" font-size="17" fill="#f0e68c" textLength="8.6" lengthAdjust="spacingAndGlyphs">5</text><text x="24.6" y="345.5" font-size="17" fill="#f0e68c" textLength="8.6" lengthAdjust="spacingAndGlyphs">0</text><line x1="487" y1="34.5" x2="571" y2="34.5" stroke="#b0b0b0" stroke-width="1"/><line x1="485" y1="237.5" x2="571" y2="237.5" stroke="#b0b0b0" stroke-width="1"/><line x1="488" y1="375.5" x2="571" y2="375.5" stroke="#b0b0b0" stroke-width="1"/><text x="489.5" y="47" font-size="17" fill="#fff">ir</text><linearGradient id="irg" x1="0" y1="0" x2="0" y2="1"><stop offset="0" stop-color="#1a1a1a"/><stop offset="1" stop-color="#c4c4c4"/></linearGradient><rect x="489.5" y="60" width="9.5" height="95" fill="url(#irg)"/><rect x="489.5" y="155" width="9.5" height="16.5" fill="#0000ff"/><rect x="489.5" y="171.5" width="9.5" height="4.5" fill="#ff0000"/><rect x="489.5" y="176" width="9.5" height="4" fill="#ffa500"/><rect x="489.5" y="180" width="9.5" height="4" fill="#ffb6c1"/><rect x="489.5" y="184" width="9.5" height="4" fill="#ffff00"/><text x="504.5" y="67.5" font-size="17" fill="#fff" textLength="43.5" lengthAdjust="spacingAndGlyphs">387.0</text><text x="504.5" y="90" font-size="17" fill="#fff" textLength="43.5" lengthAdjust="spacingAndGlyphs">351.0</text><text x="504.5" y="112.5" font-size="17" fill="#fff" textLength="43.5" lengthAdjust="spacingAndGlyphs">315.0</text><text x="504.5" y="135" font-size="17" fill="#fff" textLength="43.5" lengthAdjust="spacingAndGlyphs">279.0</text><text x="504.5" y="158" font-size="17" fill="#fff" textLength="43.5" lengthAdjust="spacingAndGlyphs">243.0</text><text x="504.5" y="180" font-size="17" fill="#fff" textLength="43.5" lengthAdjust="spacingAndGlyphs">207.0</text><text x="489.5" y="257.5" font-size="17" fill="#fff" textLength="51.5" lengthAdjust="spacingAndGlyphs">maxdz</text><rect x="489.5" y="263" width="9.5" height="28.05" fill="#b22222"/><rect x="489.5" y="291" width="9.5" height="28.05" fill="#ffa07a"/><rect x="489.5" y="319" width="9.5" height="28.05" fill="#fff68f"/><rect x="489.5" y="347" width="9.5" height="28.05" fill="#00fa9a"/><text x="504.5" y="284.5" font-size="17" fill="#fff" textLength="34.0" lengthAdjust="spacingAndGlyphs">55.0</text><text x="504.5" y="312.5" font-size="17" fill="#fff" textLength="34.0" lengthAdjust="spacingAndGlyphs">45.0</text><text x="504.5" y="340.5" font-size="17" fill="#fff" textLength="34.0" lengthAdjust="spacingAndGlyphs">35.0</text><text x="504.5" y="368.5" font-size="17" fill="#fff" textLength="34.0" lengthAdjust="spacingAndGlyphs">25.0</text><g shape-rendering="geometricPrecision"><path d="M236.3,177 h2 v1.4 h1.6 v5 h1.4 v2 h-3 v2 h-2 v-2 h-3 v-2 h1.4 v-5 h1.6 Z" fill="#ff00ff"/><path d="M229.8,188.4 l1.5,1.6 l2,-1.8 l2,1.8 l2,-1.6 l2,1.6 l2,-1.8 l2,1.8 l1.5,-1.6" fill="none" stroke="#ff00ff" stroke-width="1"/><path d="M232.3,188.6 q5,-3.6 10,0 Z" fill="#ff00ff"/><path d="M236.4,179 v4 M238.2,179 v4" stroke="#909090" stroke-width="0.6" fill="none"/><path d="M242.5,209.1 h2 v1.4 h1.6 v5 h1.4 v2 h-3 v2 h-2 v-2 h-3 v-2 h1.4 v-5 h1.6 Z" fill="#ff00ff"/><path d="M236,220.5 l1.5,1.6 l2,-1.8 l2,1.8 l2,-1.6 l2,1.6 l2,-1.8 l2,1.8 l1.5,-1.6" fill="none" stroke="#ff00ff" stroke-width="1"/><path d="M238.5,220.7 q5,-3.6 10,0 Z" fill="#ff00ff"/><path d="M242.6,211.1 v4 M244.4,211.1 v4" stroke="#909090" stroke-width="0.6" fill="none"/><path d="M242.5,258.4 h2 v1.4 h1.6 v5 h1.4 v2 h-3 v2 h-2 v-2 h-3 v-2 h1.4 v-5 h1.6 Z" fill="#ff00ff"/><path d="M236,269.8 l1.5,1.6 l2,-1.8 l2,1.8 l2,-1.6 l2,1.6 l2,-1.8 l2,1.8 l1.5,-1.6" fill="none" stroke="#ff00ff" stroke-width="1"/><path d="M238.5,270 q5,-3.6 10,0 Z" fill="#ff00ff"/><path d="M242.6,260.4 v4 M244.4,260.4 v4" stroke="#909090" stroke-width="0.6" fill="none"/><path d="M242.5,306.5 h2 v1.4 h1.6 v5 h1.4 v2 h-3 v2 h-2 v-2 h-3 v-2 h1.4 v-5 h1.6 Z" fill="#ff00ff"/><path d="M236,317.9 l1.5,1.6 l2,-1.8 l2,1.8 l2,-1.6 l2,1.6 l2,-1.8 l2,1.8 l1.5,-1.6" fill="none" stroke="#ff00ff" stroke-width="1"/><path d="M238.5,318.1 q5,-3.6 10,0 Z" fill="#ff00ff"/><path d="M242.6,308.5 v4 M244.4,308.5 v4" stroke="#909090" stroke-width="0.6" fill="none"/><path d="M242.5,339.6 h2 v1.4 h1.6 v5 h1.4 v2 h-3 v2 h-2 v-2 h-3 v-2 h1.4 v-5 h1.6 Z" fill="#ff00ff"/><path d="M236,351 l1.5,1.6 l2,-1.8 l2,1.8 l2,-1.6 l2,1.6 l2,-1.8 l2,1.8 l1.5,-1.6" fill="none" stroke="#ff00ff" stroke-width="1"/><path d="M238.5,351.2 q5,-3.6 10,0 Z" fill="#ff00ff"/><path d="M242.6,341.6 v4 M244.4,341.6 v4" stroke="#909090" stroke-width="0.6" fill="none"/><path d="M483.2,210.2 h2 v1.4 h1.6 v5 h1.4 v2 h-3 v2 h-2 v-2 h-3 v-2 h1.4 v-5 h1.6 Z" fill="#ff00ff"/><path d="M476.7,221.6 l1.5,1.6 l2,-1.8 l2,1.8 l2,-1.6 l2,1.6 l2,-1.8 l2,1.8 l1.5,-1.6" fill="none" stroke="#ff00ff" stroke-width="1"/><path d="M479.2,221.8 q5,-3.6 10,0 Z" fill="#ff00ff"/><path d="M483.3,212.2 v4 M485.1,212.2 v4" stroke="#909090" stroke-width="0.6" fill="none"/><path d="M483.2,259 h2 v1.4 h1.6 v5 h1.4 v2 h-3 v2 h-2 v-2 h-3 v-2 h1.4 v-5 h1.6 Z" fill="#ff00ff"/><path d="M476.7,270.4 l1.5,1.6 l2,-1.8 l2,1.8 l2,-1.6 l2,1.6 l2,-1.8 l2,1.8 l1.5,-1.6" fill="none" stroke="#ff00ff" stroke-width="1"/><path d="M479.2,270.6 q5,-3.6 10,0 Z" fill="#ff00ff"/><path d="M483.3,261 v4 M485.1,261 v4" stroke="#909090" stroke-width="0.6" fill="none"/><path d="M483.2,307 h2 v1.4 h1.6 v5 h1.4 v2 h-3 v2 h-2 v-2 h-3 v-2 h1.4 v-5 h1.6 Z" fill="#ff00ff"/><path d="M476.7,318.4 l1.5,1.6 l2,-1.8 l2,1.8 l2,-1.6 l2,1.6 l2,-1.8 l2,1.8 l1.5,-1.6" fill="none" stroke="#ff00ff" stroke-width="1"/><path d="M479.2,318.6 q5,-3.6 10,0 Z" fill="#ff00ff"/><path d="M483.3,309 v4 M485.1,309 v4" stroke="#909090" stroke-width="0.6" fill="none"/><path d="M483.2,339.8 h2 v1.4 h1.6 v5 h1.4 v2 h-3 v2 h-2 v-2 h-3 v-2 h1.4 v-5 h1.6 Z" fill="#ff00ff"/><path d="M476.7,351.2 l1.5,1.6 l2,-1.8 l2,1.8 l2,-1.6 l2,1.6 l2,-1.8 l2,1.8 l1.5,-1.6" fill="none" stroke="#ff00ff" stroke-width="1"/><path d="M479.2,351.4 q5,-3.6 10,0 Z" fill="#ff00ff"/><path d="M483.3,341.8 v4 M485.1,341.8 v4" stroke="#909090" stroke-width="0.6" fill="none"/></g><rect x="253" y="193" width="1" height="1" fill="#00fa9a" shape-rendering="crispEdges"/><rect x="256" y="194" width="1" height="1" fill="#00fa9a" shape-rendering="crispEdges"/><rect x="257" y="195" width="1" height="1" fill="#00fa9a" shape-rendering="crispEdges"/><rect x="237" y="199" width="1" height="1" fill="#00fa9a" shape-rendering="crispEdges"/><rect x="257" y="219" width="1" height="1" fill="#00fa9a" shape-rendering="crispEdges"/><rect x="260" y="219" width="1" height="1" fill="#00fa9a" shape-rendering="crispEdges"/><rect x="261" y="220" width="1" height="1" fill="#00fa9a" shape-rendering="crispEdges"/><rect x="262" y="221" width="1" height="1" fill="#00fa9a" shape-rendering="crispEdges"/><rect x="264" y="223" width="1" height="1" fill="#00fa9a" shape-rendering="crispEdges"/><rect x="253" y="194" width="1" height="1" fill="#000" shape-rendering="crispEdges"/><rect x="257" y="196" width="1" height="1" fill="#000" shape-rendering="crispEdges"/><rect x="257" y="215" width="1" height="1" fill="#000" shape-rendering="crispEdges"/><rect x="260" y="216" width="1" height="1" fill="#000" shape-rendering="crispEdges"/><rect x="262" y="217" width="1" height="1" fill="#000" shape-rendering="crispEdges"/><rect x="256" y="218" width="1" height="1" fill="#000" shape-rendering="crispEdges"/><rect x="258" y="220" width="1" height="1" fill="#000" shape-rendering="crispEdges"/><rect x="252" y="220" width="1" height="1" fill="#000" shape-rendering="crispEdges"/><rect x="265" y="219" width="1" height="1" fill="#000" shape-rendering="crispEdges"/><g shape-rendering="geometricPrecision"><rect x="5.5" y="376.5" width="45" height="47" fill="#191970" stroke="#9a9a9a" stroke-width="1"/><g transform="translate(5,376)"><path d="M6.5,13 C8,9.5 13,6.8 17.5,7.2 C22,7.8 27,11.6 31,11.6 C34,11.4 36.5,10.5 37.8,9 L36.5,12 C33,14.5 28,14.3 24,12.6 C19,10.4 14,9.2 10.5,10.6 C8.5,11.4 7.5,12.4 6.5,13.6 Z" fill="#ffff00"/><path d="M37.8,9 L36.2,12.5 C28,19 17,29 9.5,38.2 L6.2,39.6 C14,28 27,16.5 37.8,9 Z" fill="#ffff00"/><path d="M6.2,39.8 C9,37.8 13,36 17.5,36.6 C22,37.4 27,39.6 31,39.2 C34.5,38.6 37,37 38.8,35 L38.6,37 C36.5,40.4 32.5,42.2 28.5,42 C23.5,41.4 19,38.6 14.5,38.6 C11,38.8 8.5,39.6 6.2,39.8 Z" fill="#ffff00"/></g><rect x="52.5" y="376.5" width="45" height="47" fill="#191970" stroke="#9a9a9a" stroke-width="1"/><g transform="translate(52,376)"><text x="3.2" y="14.7" font-size="15.6" fill="#ffff00" font-family='"Liberation Sans", sans-serif' font-weight="bold" textLength="30.0" lengthAdjust="spacingAndGlyphs">GOES</text><clipPath id="gca"><rect x="3" y="0" width="40" height="44"/></clipPath><g clip-path="url(#gca)"><circle cx="3" cy="37" r="21" fill="url(#dy)"/><path d="M14.5,21.5 l2.5,-0.5 l2.5,2 l2,3.5 l0.8,5 l-2.3,1 l-2.5,-2.5 l-2,-3 l-1.5,-2.5 Z" fill="#ffff00"/><path d="M3,44 l0,-5.5 l3.5,-2.5 l4,0.5 l1.5,4 l-0.5,3.5 Z" fill="#ffff00"/><path d="M3,16.5 l2.5,0 l1.5,2 l-2,2 l-2,0 Z" fill="#ffff00"/></g><path d="M40.2,18.6 l2.6,2.6 l-2.6,2.6 l-2.6,-2.6 Z" fill="#ffff00"/><rect x="37" y="22" width="1" height="1" fill="#ffff00" shape-rendering="crispEdges"/><rect x="35" y="22" width="1" height="1" fill="#ffff00" shape-rendering="crispEdges"/><rect x="33" y="22" width="1" height="1" fill="#ffff00" shape-rendering="crispEdges"/><rect x="31" y="22" width="1" height="1" fill="#ffff00" shape-rendering="crispEdges"/><rect x="28" y="23" width="1" height="1" fill="#ffff00" shape-rendering="crispEdges"/><rect x="26" y="23" width="1" height="1" fill="#ffff00" shape-rendering="crispEdges"/><rect x="24" y="23" width="1" height="1" fill="#ffff00" shape-rendering="crispEdges"/><rect x="22" y="24" width="1" height="1" fill="#ffff00" shape-rendering="crispEdges"/><rect x="38" y="23" width="1" height="1" fill="#ffff00" shape-rendering="crispEdges"/><rect x="35" y="24" width="1" height="1" fill="#ffff00" shape-rendering="crispEdges"/><rect x="33" y="26" width="1" height="1" fill="#ffff00" shape-rendering="crispEdges"/><rect x="31" y="27" width="1" height="1" fill="#ffff00" shape-rendering="crispEdges"/><rect x="29" y="28" width="1" height="1" fill="#ffff00" shape-rendering="crispEdges"/><rect x="27" y="30" width="1" height="1" fill="#ffff00" shape-rendering="crispEdges"/><rect x="25" y="31" width="1" height="1" fill="#ffff00" shape-rendering="crispEdges"/><rect x="19" y="17" width="1" height="1" fill="#ffff00" shape-rendering="crispEdges"/><rect x="24" y="20" width="1" height="1" fill="#ffff00" shape-rendering="crispEdges"/><rect x="31" y="20" width="1" height="1" fill="#ffff00" shape-rendering="crispEdges"/><rect x="39" y="30" width="1" height="1" fill="#ffff00" shape-rendering="crispEdges"/><rect x="35" y="32" width="1" height="1" fill="#ffff00" shape-rendering="crispEdges"/><rect x="25" y="42" width="1" height="1" fill="#ffff00" shape-rendering="crispEdges"/><text x="28" y="42.8" font-size="9.8" fill="#ffff00" textLength="10.6" lengthAdjust="spacingAndGlyphs">IR</text></g><rect x="99.5" y="376.5" width="45" height="47" fill="#191970" stroke="#9a9a9a" stroke-width="1"/><g transform="translate(99,376)"><g transform="translate(0,0)"><path d="M5.8,9.6 Q8.5,27.5 27,31.2" fill="none" stroke="#ffff00" stroke-width="2" stroke-linecap="round"/><rect x="12.6" y="20.2" width="3.6" height="3.6" fill="none" stroke="#ffff00" stroke-width="1"/><path d="M11.6,23.5 L15.3,23.5 L15.8,35.2 L16,35.2 L16,39.8 L8.8,39.8 L8.8,35.2 L10,35.2 Z" fill="#ffff00"/></g><text x="32.7" y="16.6" font-size="15.2" fill="#ffff00" textLength="6.2" lengthAdjust="spacingAndGlyphs">S</text><text x="32.7" y="28.2" font-size="15.2" fill="#ffff00" textLength="6.2" lengthAdjust="spacingAndGlyphs">U</text><text x="32.7" y="40" font-size="15.2" fill="#ffff00" textLength="6.2" lengthAdjust="spacingAndGlyphs">R</text></g><rect x="146.5" y="376.5" width="45" height="47" fill="#696969" stroke="#9a9a9a" stroke-width="1"/><g transform="translate(146,376)"><line x1="5.5" y1="5.5" x2="5.5" y2="42.5" stroke="#e4e4e4" stroke-width="1"/><line x1="14.5" y1="5.5" x2="14.5" y2="42.5" stroke="#e4e4e4" stroke-width="1"/><line x1="23.5" y1="5.5" x2="23.5" y2="42.5" stroke="#e4e4e4" stroke-width="1"/><line x1="32.5" y1="5.5" x2="32.5" y2="42.5" stroke="#e4e4e4" stroke-width="1"/><line x1="41.5" y1="5.5" x2="41.5" y2="42.5" stroke="#e4e4e4" stroke-width="1"/><line x1="5.5" y1="5.5" x2="41.5" y2="5.5" stroke="#e4e4e4" stroke-width="1"/><line x1="5.5" y1="14.5" x2="41.5" y2="14.5" stroke="#e4e4e4" stroke-width="1"/><line x1="5.5" y1="23.5" x2="41.5" y2="23.5" stroke="#e4e4e4" stroke-width="1"/><line x1="5.5" y1="32.5" x2="41.5" y2="32.5" stroke="#e4e4e4" stroke-width="1"/><line x1="5.5" y1="42.5" x2="41.5" y2="42.5" stroke="#e4e4e4" stroke-width="1"/><g transform="translate(7,0)"><path d="M5.8,9.6 Q8.5,27.5 27,31.2" fill="none" stroke="#e4e4e4" stroke-width="2" stroke-linecap="round"/><rect x="12.6" y="20.2" width="3.6" height="3.6" fill="none" stroke="#e4e4e4" stroke-width="1"/><path d="M11.6,23.5 L15.3,23.5 L15.8,35.2 L16,35.2 L16,39.8 L8.8,39.8 L8.8,35.2 L10,35.2 Z" fill="#e4e4e4"/></g></g><rect x="193.5" y="376.5" width="13" height="47" fill="#696969" stroke="#9a9a9a" stroke-width="1"/><g transform="translate(193,376)"><text x="4.7" y="11.2" font-size="7.2" fill="#e4e4e4" textLength="4.6" lengthAdjust="spacingAndGlyphs">B</text><text x="4.7" y="17.2" font-size="7.2" fill="#e4e4e4" textLength="4.6" lengthAdjust="spacingAndGlyphs">O</text><text x="4.7" y="23.2" font-size="7.2" fill="#e4e4e4" textLength="4.6" lengthAdjust="spacingAndGlyphs">U</text><text x="4.7" y="29.2" font-size="7.2" fill="#e4e4e4" textLength="4.6" lengthAdjust="spacingAndGlyphs">N</text><text x="4.7" y="35.2" font-size="7.2" fill="#e4e4e4" textLength="4.6" lengthAdjust="spacingAndGlyphs">D</text><text x="4.7" y="41.2" font-size="7.2" fill="#e4e4e4" textLength="4.6" lengthAdjust="spacingAndGlyphs">S</text></g><rect x="208.5" y="400.5" width="21" height="23" fill="#191970" stroke="#9a9a9a" stroke-width="1"/><g shape-rendering="crispEdges"><g transform="translate(208,400)"><line x1="3.5" y1="4" x2="3.5" y2="21" stroke="#ffff00" stroke-width="1"/><line x1="8.5" y1="4" x2="8.5" y2="21" stroke="#ffff00" stroke-width="1"/><line x1="14.5" y1="4" x2="14.5" y2="21" stroke="#ffff00" stroke-width="1"/><line x1="19.5" y1="4" x2="19.5" y2="21" stroke="#ffff00" stroke-width="1"/><line x1="3" y1="4.5" x2="20" y2="4.5" stroke="#ffff00" stroke-width="1"/><line x1="3" y1="9.5" x2="20" y2="9.5" stroke="#ffff00" stroke-width="1"/><line x1="3" y1="15.5" x2="20" y2="15.5" stroke="#ffff00" stroke-width="1"/><line x1="3" y1="20.5" x2="20" y2="20.5" stroke="#ffff00" stroke-width="1"/></g></g><rect x="231.5" y="376.5" width="20" height="47" fill="#191970" stroke="#9a9a9a" stroke-width="1"/><g transform="translate(231,376)"><path d="M2.8,4.6 L6.6,5.6 L5.6,8.2 L4,10.8 L3,9 Z M3.4,12.6 L5.4,11.4 L5.8,14.4 L4.2,14 Z M8.8,5.2 L11.2,5 L12.4,6.6 L11.6,8.4 L13,9.6 L15.4,11 L14.4,12.6 L13.4,14.6 L12.2,13 L12.4,11 L10.6,9.6 L10.8,7.2 Z M14,4.6 L15.6,4.2 L14.8,5.6 Z M16.4,4 L17.8,3.8 L16.8,5 Z" fill="#ffff00"/><text x="7.1" y="24.8" font-size="9.6" fill="#ffff00" textLength="6.2" lengthAdjust="spacingAndGlyphs">M</text><text x="7.1" y="32.8" font-size="9.6" fill="#ffff00" textLength="6.2" lengthAdjust="spacingAndGlyphs">A</text><text x="7.1" y="41.2" font-size="9.6" fill="#ffff00" textLength="6.2" lengthAdjust="spacingAndGlyphs">P</text></g><rect x="253.5" y="376.5" width="20" height="47" fill="#696969" stroke="#9a9a9a" stroke-width="1"/><g transform="translate(253,376)"><clipPath id="wc1"><rect x="2.8" y="12" width="15.2" height="24"/></clipPath><g clip-path="url(#wc1)"><circle cx="10.4" cy="23.6" r="9.4" fill="none" stroke="#e4e4e4" stroke-width="1.1"/><circle cx="10.4" cy="23.6" r="5.6" fill="none" stroke="#e4e4e4" stroke-width="1.1"/><circle cx="10.4" cy="23.6" r="2.6" fill="none" stroke="#e4e4e4" stroke-width="1.1"/><line x1="13" y1="23.6" x2="19.8" y2="23.6" stroke="#e4e4e4" stroke-width="1.1"/><line x1="12.2385" y1="25.4385" x2="17.0468" y2="30.2468" stroke="#e4e4e4" stroke-width="1.1"/><line x1="10.4" y1="26.2" x2="10.4" y2="33" stroke="#e4e4e4" stroke-width="1.1"/><line x1="8.56152" y1="25.4385" x2="3.7532" y2="30.2468" stroke="#e4e4e4" stroke-width="1.1"/><line x1="7.8" y1="23.6" x2="1" y2="23.6" stroke="#e4e4e4" stroke-width="1.1"/><line x1="8.56152" y1="21.7615" x2="3.7532" y2="16.9532" stroke="#e4e4e4" stroke-width="1.1"/><line x1="10.4" y1="21" x2="10.4" y2="14.2" stroke="#e4e4e4" stroke-width="1.1"/><line x1="12.2385" y1="21.7615" x2="17.0468" y2="16.9532" stroke="#e4e4e4" stroke-width="1.1"/></g></g><rect x="275.5" y="400.5" width="21" height="23" fill="#191970" stroke="#9a9a9a" stroke-width="1"/><g transform="translate(275,400)"><path d="M10,4.6 H12 V6 H13.6 V11 H15 V13.2 H12 V16 H10 V13.2 H7 V11 H8.4 V6 H10 Z" fill="#ffff00"/><path d="M2.4,16.6 L4,18.4 L6,16.6 L8,18.4 L10,16.8 L11,17.6 L12,16.8 L14,18.4 L16,16.6 L18,18.4 L19.4,16.8" fill="none" stroke="#ffff00" stroke-width="1.1"/><path d="M6,16.4 Q11,13.8 16,16.4" fill="none" stroke="#ffff00" stroke-width="1.1"/></g><rect x="298.5" y="376.5" width="45" height="47" fill="#696969" stroke="#9a9a9a" stroke-width="1"/><g transform="translate(298,376)"><g transform="translate(0,0)"><path d="M3,43.8 V40.4 L4.4,40.4 L5.4,38.4 L6.6,38.4 L7.6,40.2 L9.4,40.2 L10.6,38.4 L12.4,38.4 L13.6,40.2 L15.6,40.2 L16.8,38.4 L18.4,38.4 L19.6,40.2 L21.6,40.2 L22.8,38.4 L24.4,38.4 L25.6,40.2 L27.6,40.2 L28.8,38.4 L30.4,38.4 L31.6,40.2 L33.6,40.2 L34.8,38.4 L36.4,38.4 L37.6,40.2 L39.6,40.2 L40.8,38.6 L41.8,39.6 L43,38.4 V43.8 Z" fill="#e4e4e4"/><path d="M5.8,32.4 H39.8 M5.9,32.4 Q5.8,36 8.6,38 M39.6,32.6 L37,38.6" fill="none" stroke="#e4e4e4" stroke-width="1"/><path d="M8.2,32.2 V24.3 H12.6 L14.6,32" fill="none" stroke="#e4e4e4" stroke-width="1"/><circle cx="22.3" cy="23.3" r="3.3" fill="none" stroke="#e4e4e4" stroke-width="1"/><path d="M21.4,26.6 V32.2 M23.4,26.6 V32.2 M34.3,15.8 V32.2" fill="none" stroke="#e4e4e4" stroke-width="1"/></g></g></g><line x1="571.5" y1="3" x2="571.5" y2="386" stroke="#fff" stroke-width="1" stroke-dasharray="1 1"/><line x1="0" y1="426.5" x2="572" y2="426.5" stroke="#fff" stroke-width="1" stroke-dasharray="1 1"/><line x1="0" y1="2.5" x2="572" y2="2.5" stroke="#fff" stroke-width="1" stroke-dasharray="1 1"/></svg></div>
<div class="win ppi" style="left:4px;top:426px;width:570px;height:448px;background:#000;"><svg width="570" height="448" viewBox="4 426 570 448" font-family='"Liberation Sans", sans-serif' shape-rendering="crispEdges" text-rendering="optimizeLegibility"><clipPath id="ppiclip"><rect x="55.6" y="458" width="431.9" height="337.5"/></clipPath><g clip-path="url(#ppiclip)" shape-rendering="geometricPrecision"><circle cx="272.9" cy="630.5" r="27.42" fill="none" stroke="#fff" stroke-width="1.15"/><circle cx="272.9" cy="630.5" r="54.84" fill="none" stroke="#fff" stroke-width="1.15"/><circle cx="272.9" cy="630.5" r="82.26" fill="none" stroke="#fff" stroke-width="1.15"/><circle cx="272.9" cy="630.5" r="109.68" fill="none" stroke="#fff" stroke-width="1.15"/><circle cx="272.9" cy="630.5" r="137.1" fill="none" stroke="#fff" stroke-width="1.15"/><circle cx="272.9" cy="630.5" r="164.52" fill="none" stroke="#fff" stroke-width="1.15"/><circle cx="272.9" cy="630.5" r="191.94" fill="none" stroke="#fff" stroke-width="1.15"/><circle cx="272.9" cy="630.5" r="219.36" fill="none" stroke="#fff" stroke-width="1.15"/><line x1="55" y1="630.5" x2="245.48" y2="630.5" stroke="#fff" stroke-width="1"/><line x1="300.32" y1="630.5" x2="487.5" y2="630.5" stroke="#fff" stroke-width="1"/><line x1="273.5" y1="458" x2="273.5" y2="603.08" stroke="#fff" stroke-width="1"/><line x1="273.5" y1="657.92" x2="273.5" y2="795.5" stroke="#fff" stroke-width="1"/><line x1="292.289" y1="649.889" x2="428.011" y2="785.611" stroke="#fff" stroke-width="1.4"/><line x1="292.289" y1="611.111" x2="428.011" y2="475.389" stroke="#fff" stroke-width="1.4"/><line x1="253.511" y1="649.889" x2="117.789" y2="785.611" stroke="#fff" stroke-width="1.4"/><line x1="253.511" y1="611.111" x2="117.789" y2="475.389" stroke="#fff" stroke-width="1.4"/></g><rect x="316.7" y="504" width="8.3" height="13.4" fill="#00e696"/><rect x="318" y="507" width="4" height="7" fill="#0a6e46"/><rect x="320" y="509" width="5" height="8" fill="#00e696"/><rect x="330" y="507" width="13" height="14" fill="#00e696"/><rect x="331" y="508" width="10" height="10" fill="#c8c8c8"/><rect x="336" y="518" width="6" height="7" fill="#00e696"/><rect x="337" y="515" width="3" height="4" fill="#c8c8c8"/><rect x="314" y="523" width="4.8" height="5" fill="#00e696"/><rect x="333" y="532" width="4.6" height="4.7" fill="#00e696"/><rect x="344" y="525.8" width="5" height="2.2" fill="#00e696"/><rect x="290" y="586.5" width="4" height="5.5" fill="#00b4e6"/><rect x="293" y="588" width="4" height="4" fill="#00e696"/><rect x="286.6" y="587" width="3.4" height="4" fill="#0064e6"/><rect x="336" y="608" width="6" height="6" fill="#00b4e6"/><rect x="339" y="609" width="8" height="6" fill="#c8c8c8"/><rect x="344" y="612" width="4" height="4" fill="#0064e6"/><rect x="352" y="612.6" width="6" height="6.8" fill="#0a6e46"/><rect x="311.5" y="620.5" width="3" height="4.5" fill="#0064e6"/><rect x="313" y="624" width="4" height="4.4" fill="#00b4e6"/><rect x="328.5" y="624" width="13.5" height="12" fill="#00e696"/><rect x="331" y="627" width="7" height="6" fill="#b4ffe0"/><rect x="333" y="634" width="5" height="4.6" fill="#00e696"/><rect x="326" y="623" width="4" height="4" fill="#00b4e6"/><rect x="346.6" y="626" width="11.4" height="8" fill="#00e696"/><rect x="349" y="622" width="7" height="6" fill="#0a6e46"/><rect x="354" y="618" width="8" height="9" fill="#00e696"/><rect x="358" y="621" width="7" height="9" fill="#c8c8c8"/><rect x="352" y="630" width="10" height="8" fill="#c8c8c8"/><rect x="356" y="634" width="12" height="10" fill="#00e696"/><rect x="360" y="630" width="6" height="6" fill="#0a6e46"/><rect x="348" y="632" width="5" height="5" fill="#00e696"/><rect x="373.8" y="622.8" width="6.2" height="9.2" fill="#c8c8c8"/><rect x="378" y="628" width="3.8" height="6" fill="#00e696"/><rect x="315" y="635" width="4" height="6" fill="#00b4e6"/><rect x="318" y="637" width="4.8" height="6" fill="#00e696"/><rect x="310" y="632" width="4" height="4" fill="#0064e6"/><rect x="429" y="606" width="9" height="14" fill="#0a6e46"/><rect x="431.5" y="609" width="4.5" height="7" fill="#c8c8c8"/><rect x="370" y="646.5" width="10" height="8.5" fill="#00e696"/><rect x="372" y="647" width="5" height="4" fill="#0a6e46"/><rect x="355.6" y="640" width="11.4" height="4.7" fill="#00e696"/><rect x="294" y="662.7" width="3" height="2.8" fill="#0064e6"/><rect x="297" y="665" width="3.5" height="3" fill="#0064e6"/><rect x="290" y="683" width="2" height="6" fill="#00b4e6"/><rect x="288" y="689" width="4" height="6" fill="#00e696"/><rect x="285.5" y="684" width="3.5" height="6" fill="#00b4e6"/><rect x="341.6" y="733" width="5.4" height="3" fill="#00e696"/><rect x="344" y="735" width="3" height="6" fill="#00e696"/><rect x="239" y="531.7" width="8" height="4.8" fill="#c8c8c8"/><rect x="240" y="536.5" width="6" height="3.1" fill="#0a6e46"/><rect x="271.9" y="548.7" width="5.6" height="2.3" fill="#00b4e6"/><rect x="261.4" y="705" width="2.4" height="6" fill="#00b4e6"/><rect x="280.5" y="674" width="1" height="2" fill="#00b4e6"/><rect x="267" y="616.5" width="3" height="1.5" fill="#0064e6"/><rect x="272" y="626" width="2" height="1" fill="#9600ff"/><rect x="272.5" y="631.5" width="2" height="1" fill="#9600ff"/><rect x="268" y="632" width="2" height="1" fill="#9600ff"/><rect x="261" y="636" width="2" height="1" fill="#1432dc"/><rect x="270" y="640" width="1" height="1" fill="#6e00f0"/><rect x="285" y="600" width="1" height="1" fill="#0064e6"/><rect x="287" y="614" width="2" height="1" fill="#1432dc"/><rect x="286" y="626" width="1" height="1" fill="#0064e6"/><rect x="289" y="629" width="1" height="1" fill="#00b4e6"/><rect x="292" y="629" width="1" height="1" fill="#4614e6"/><rect x="289" y="632" width="1" height="2" fill="#1432dc"/><rect x="289" y="636" width="1" height="1" fill="#1432dc"/><rect x="275" y="631" width="1" height="1" fill="#9600ff"/><rect x="289.5" y="609.5" width="1.5" height="1" fill="#1432dc"/><g shape-rendering="geometricPrecision"><circle cx="242.5" cy="464.5" r="7.3" fill="none" stroke="#ffa500" stroke-width="1"/><circle cx="271.5" cy="616.5" r="7.3" fill="none" stroke="#ffa500" stroke-width="1"/></g><text x="231" y="479" font-size="5.8" fill="#ffa500" font-family='"Liberation Sans", sans-serif' font-weight="bold" textLength="24.0" lengthAdjust="spacingAndGlyphs">vhcs-met</text><text x="258.8" y="631.2" font-size="5.8" fill="#ffa500" font-family='"Liberation Sans", sans-serif' font-weight="bold" textLength="25.2" lengthAdjust="spacingAndGlyphs">bo-125-5</text><line x1="266" y1="463.5" x2="277" y2="463.5" stroke="#f0e68c" stroke-width="1"/><line x1="271.5" y1="458" x2="271.5" y2="469" stroke="#f0e68c" stroke-width="1"/><text x="41.5" y="463.2" font-size="6" fill="#f0e68c">10</text><text x="262.5" y="808" font-size="6" fill="#f0e68c">-125</text><text y="448" font-size="25" fill="#ffff00"><tspan x="14.2" textLength="27.0" lengthAdjust="spacingAndGlyphs">21</tspan><tspan x="39.9537" textLength="15.3" lengthAdjust="spacingAndGlyphs">-</tspan><tspan x="55.7" textLength="38.4" lengthAdjust="spacingAndGlyphs">aug</tspan><tspan x="97.4537" textLength="15.3" lengthAdjust="spacingAndGlyphs">-</tspan><tspan x="112.9" textLength="145.2" lengthAdjust="spacingAndGlyphs">1997,20:05:00</tspan></text><text y="448" font-size="25" fill="#fff"><tspan x="273.75" textLength="69.0" lengthAdjust="spacingAndGlyphs">maxdz</tspan> <tspan x="351.25" textLength="44.0" lengthAdjust="spacingAndGlyphs">plot.</tspan> <tspan x="410" textLength="68.5" lengthAdjust="spacingAndGlyphs">maxdz</tspan> <tspan x="487" textLength="44.0" lengthAdjust="spacingAndGlyphs">plot.</tspan></text><rect x="488" y="458" width="86" height="372" fill="#000"/><line x1="488" y1="458.5" x2="574" y2="458.5" stroke="#b0b0b0" stroke-width="1"/><text x="490.5" y="470.5" font-size="17" fill="#fff" textLength="51.5" lengthAdjust="spacingAndGlyphs">maxdz</text><rect x="490" y="485" width="10" height="8.05" fill="#fa8080"/><rect x="490" y="493" width="10" height="8.05" fill="#ff9296"/><rect x="490" y="501" width="10" height="8.05" fill="#ffb064"/><rect x="490" y="509" width="10" height="8.05" fill="#ffd8b0"/><rect x="490" y="517" width="10" height="8.05" fill="#ffdc14"/><rect x="490" y="525" width="10" height="8.05" fill="#f0b81e"/><rect x="490" y="533" width="10" height="8.05" fill="#d89030"/><rect x="490" y="541" width="10" height="8.05" fill="#c8c8c8"/><rect x="490" y="549" width="10" height="8.05" fill="#0a6e46"/><rect x="490" y="557" width="10" height="8.05" fill="#00e696"/><rect x="490" y="565" width="10" height="8.05" fill="#00b4e6"/><rect x="490" y="573" width="10" height="8.05" fill="#0064e6"/><rect x="490" y="581" width="10" height="8.05" fill="#1432dc"/><rect x="490" y="589" width="10" height="8.05" fill="#4614e6"/><rect x="490" y="597" width="10" height="8.05" fill="#6e00f0"/><rect x="490" y="605" width="10" height="8.05" fill="#9600ff"/><text x="505" y="493.2" font-size="17" fill="#fff" textLength="34.0" lengthAdjust="spacingAndGlyphs">65.0</text><text x="505" y="517.2" font-size="17" fill="#fff" textLength="34.0" lengthAdjust="spacingAndGlyphs">50.0</text><text x="505" y="541.2" font-size="17" fill="#fff" textLength="34.0" lengthAdjust="spacingAndGlyphs">35.0</text><text x="505" y="565.2" font-size="17" fill="#fff" textLength="34.0" lengthAdjust="spacingAndGlyphs">20.0</text><text x="505" y="589.2" font-size="17" fill="#fff" textLength="24.5" lengthAdjust="spacingAndGlyphs">5.0</text><text y="613.2" font-size="17" fill="#fff"><tspan x="504.581" textLength="13.6" lengthAdjust="spacingAndGlyphs">-</tspan><tspan x="518.8" textLength="30.8" lengthAdjust="spacingAndGlyphs">10.0</tspan></text><line x1="488" y1="639.5" x2="574" y2="639.5" stroke="#b0b0b0" stroke-width="1"/><text x="490.5" y="651.5" font-size="17" fill="#fff" textLength="51.5" lengthAdjust="spacingAndGlyphs">maxdz</text><rect x="490" y="666" width="10" height="8.05" fill="#fa8080"/><rect x="490" y="674" width="10" height="8.05" fill="#ff9296"/><rect x="490" y="682" width="10" height="8.05" fill="#ffb064"/><rect x="490" y="690" width="10" height="8.05" fill="#ffd8b0"/><rect x="490" y="698" width="10" height="8.05" fill="#ffdc14"/><rect x="490" y="706" width="10" height="8.05" fill="#f0b81e"/><rect x="490" y="714" width="10" height="8.05" fill="#d89030"/><rect x="490" y="722" width="10" height="8.05" fill="#c8c8c8"/><rect x="490" y="730" width="10" height="8.05" fill="#0a6e46"/><rect x="490" y="738" width="10" height="8.05" fill="#00e696"/><rect x="490" y="746" width="10" height="8.05" fill="#00b4e6"/><rect x="490" y="754" width="10" height="8.05" fill="#0064e6"/><rect x="490" y="762" width="10" height="8.05" fill="#1432dc"/><rect x="490" y="770" width="10" height="8.05" fill="#4614e6"/><rect x="490" y="778" width="10" height="8.05" fill="#6e00f0"/><rect x="490" y="786" width="10" height="8.05" fill="#9600ff"/><text x="505" y="674.2" font-size="17" fill="#fff" textLength="34.0" lengthAdjust="spacingAndGlyphs">65.0</text><text x="505" y="698.2" font-size="17" fill="#fff" textLength="34.0" lengthAdjust="spacingAndGlyphs">50.0</text><text x="505" y="722.2" font-size="17" fill="#fff" textLength="34.0" lengthAdjust="spacingAndGlyphs">35.0</text><text x="505" y="746.2" font-size="17" fill="#fff" textLength="34.0" lengthAdjust="spacingAndGlyphs">20.0</text><text x="505" y="770.2" font-size="17" fill="#fff" textLength="24.5" lengthAdjust="spacingAndGlyphs">5.0</text><text y="794.2" font-size="17" fill="#fff"><tspan x="504.581" textLength="13.6" lengthAdjust="spacingAndGlyphs">-</tspan><tspan x="518.8" textLength="30.8" lengthAdjust="spacingAndGlyphs">10.0</tspan></text><line x1="488" y1="820.5" x2="574" y2="820.5" stroke="#b0b0b0" stroke-width="1"/><text y="861" font-size="25" fill="#fff"><tspan x="381.4" textLength="35.5" lengthAdjust="spacingAndGlyphs">Alt:</tspan> <tspan x="423.6" textLength="43.0" lengthAdjust="spacingAndGlyphs">0.50</tspan> <tspan x="475.2" textLength="29.6" lengthAdjust="spacingAndGlyphs">km</tspan> <tspan x="513.2" textLength="49.0" lengthAdjust="spacingAndGlyphs">MSL</tspan></text><g shape-rendering="geometricPrecision"><rect x="10.5" y="821.5" width="45" height="47" fill="#191970" stroke="#9a9a9a" stroke-width="1"/><g transform="translate(10,821)"><path d="M6.5,13 C8,9.5 13,6.8 17.5,7.2 C22,7.8 27,11.6 31,11.6 C34,11.4 36.5,10.5 37.8,9 L36.5,12 C33,14.5 28,14.3 24,12.6 C19,10.4 14,9.2 10.5,10.6 C8.5,11.4 7.5,12.4 6.5,13.6 Z" fill="#ffff00"/><path d="M37.8,9 L36.2,12.5 C28,19 17,29 9.5,38.2 L6.2,39.6 C14,28 27,16.5 37.8,9 Z" fill="#ffff00"/><path d="M6.2,39.8 C9,37.8 13,36 17.5,36.6 C22,37.4 27,39.6 31,39.2 C34.5,38.6 37,37 38.8,35 L38.6,37 C36.5,40.4 32.5,42.2 28.5,42 C23.5,41.4 19,38.6 14.5,38.6 C11,38.8 8.5,39.6 6.2,39.8 Z" fill="#ffff00"/></g><rect x="57.5" y="821.5" width="45" height="47" fill="#696969" stroke="#9a9a9a" stroke-width="1"/><g transform="translate(57,821)"><text x="3.2" y="14.7" font-size="15.6" fill="#e4e4e4" font-family='"Liberation Sans", sans-serif' font-weight="bold" textLength="30.0" lengthAdjust="spacingAndGlyphs">GOES</text><clipPath id="gcb"><rect x="3" y="0" width="40" height="44"/></clipPath><g clip-path="url(#gcb)"><circle cx="3" cy="37" r="21" fill="url(#dw)"/><path d="M14.5,21.5 l2.5,-0.5 l2.5,2 l2,3.5 l0.8,5 l-2.3,1 l-2.5,-2.5 l-2,-3 l-1.5,-2.5 Z" fill="#e4e4e4"/><path d="M3,44 l0,-5.5 l3.5,-2.5 l4,0.5 l1.5,4 l-0.5,3.5 Z" fill="#e4e4e4"/><path d="M3,16.5 l2.5,0 l1.5,2 l-2,2 l-2,0 Z" fill="#e4e4e4"/></g><path d="M40.2,18.6 l2.6,2.6 l-2.6,2.6 l-2.6,-2.6 Z" fill="#e4e4e4"/><rect x="37" y="22" width="1" height="1" fill="#e4e4e4" shape-rendering="crispEdges"/><rect x="35" y="22" width="1" height="1" fill="#e4e4e4" shape-rendering="crispEdges"/><rect x="33" y="22" width="1" height="1" fill="#e4e4e4" shape-rendering="crispEdges"/><rect x="31" y="22" width="1" height="1" fill="#e4e4e4" shape-rendering="crispEdges"/><rect x="28" y="23" width="1" height="1" fill="#e4e4e4" shape-rendering="crispEdges"/><rect x="26" y="23" width="1" height="1" fill="#e4e4e4" shape-rendering="crispEdges"/><rect x="24" y="23" width="1" height="1" fill="#e4e4e4" shape-rendering="crispEdges"/><rect x="22" y="24" width="1" height="1" fill="#e4e4e4" shape-rendering="crispEdges"/><rect x="38" y="23" width="1" height="1" fill="#e4e4e4" shape-rendering="crispEdges"/><rect x="35" y="24" width="1" height="1" fill="#e4e4e4" shape-rendering="crispEdges"/><rect x="33" y="26" width="1" height="1" fill="#e4e4e4" shape-rendering="crispEdges"/><rect x="31" y="27" width="1" height="1" fill="#e4e4e4" shape-rendering="crispEdges"/><rect x="29" y="28" width="1" height="1" fill="#e4e4e4" shape-rendering="crispEdges"/><rect x="27" y="30" width="1" height="1" fill="#e4e4e4" shape-rendering="crispEdges"/><rect x="25" y="31" width="1" height="1" fill="#e4e4e4" shape-rendering="crispEdges"/><rect x="19" y="17" width="1" height="1" fill="#e4e4e4" shape-rendering="crispEdges"/><rect x="24" y="20" width="1" height="1" fill="#e4e4e4" shape-rendering="crispEdges"/><rect x="31" y="20" width="1" height="1" fill="#e4e4e4" shape-rendering="crispEdges"/><rect x="39" y="30" width="1" height="1" fill="#e4e4e4" shape-rendering="crispEdges"/><rect x="35" y="32" width="1" height="1" fill="#e4e4e4" shape-rendering="crispEdges"/><rect x="25" y="42" width="1" height="1" fill="#e4e4e4" shape-rendering="crispEdges"/><text x="28" y="42.8" font-size="9.8" fill="#e4e4e4" textLength="10.6" lengthAdjust="spacingAndGlyphs">IR</text></g><rect x="104.5" y="821.5" width="45" height="47" fill="#191970" stroke="#9a9a9a" stroke-width="1"/><g transform="translate(104,821)"><g transform="translate(0,0)"><path d="M5.8,9.6 Q8.5,27.5 27,31.2" fill="none" stroke="#ffff00" stroke-width="2" stroke-linecap="round"/><rect x="12.6" y="20.2" width="3.6" height="3.6" fill="none" stroke="#ffff00" stroke-width="1"/><path d="M11.6,23.5 L15.3,23.5 L15.8,35.2 L16,35.2 L16,39.8 L8.8,39.8 L8.8,35.2 L10,35.2 Z" fill="#ffff00"/></g><text x="32.7" y="16.6" font-size="15.2" fill="#ffff00" textLength="6.2" lengthAdjust="spacingAndGlyphs">S</text><text x="32.7" y="28.2" font-size="15.2" fill="#ffff00" textLength="6.2" lengthAdjust="spacingAndGlyphs">U</text><text x="32.7" y="40" font-size="15.2" fill="#ffff00" textLength="6.2" lengthAdjust="spacingAndGlyphs">R</text></g><rect x="151.5" y="821.5" width="45" height="47" fill="#191970" stroke="#9a9a9a" stroke-width="1"/><g transform="translate(151,821)"><line x1="5.5" y1="5.5" x2="5.5" y2="42.5" stroke="#ffff00" stroke-width="1"/><line x1="14.5" y1="5.5" x2="14.5" y2="42.5" stroke="#ffff00" stroke-width="1"/><line x1="23.5" y1="5.5" x2="23.5" y2="42.5" stroke="#ffff00" stroke-width="1"/><line x1="32.5" y1="5.5" x2="32.5" y2="42.5" stroke="#ffff00" stroke-width="1"/><line x1="41.5" y1="5.5" x2="41.5" y2="42.5" stroke="#ffff00" stroke-width="1"/><line x1="5.5" y1="5.5" x2="41.5" y2="5.5" stroke="#ffff00" stroke-width="1"/><line x1="5.5" y1="14.5" x2="41.5" y2="14.5" stroke="#ffff00" stroke-width="1"/><line x1="5.5" y1="23.5" x2="41.5" y2="23.5" stroke="#ffff00" stroke-width="1"/><line x1="5.5" y1="32.5" x2="41.5" y2="32.5" stroke="#ffff00" stroke-width="1"/><line x1="5.5" y1="42.5" x2="41.5" y2="42.5" stroke="#ffff00" stroke-width="1"/><g transform="translate(7,0)"><path d="M5.8,9.6 Q8.5,27.5 27,31.2" fill="none" stroke="#ffff00" stroke-width="2" stroke-linecap="round"/><rect x="12.6" y="20.2" width="3.6" height="3.6" fill="none" stroke="#ffff00" stroke-width="1"/><path d="M11.6,23.5 L15.3,23.5 L15.8,35.2 L16,35.2 L16,39.8 L8.8,39.8 L8.8,35.2 L10,35.2 Z" fill="#ffff00"/></g></g><rect x="198.5" y="821.5" width="13" height="47" fill="#191970" stroke="#9a9a9a" stroke-width="1"/><g transform="translate(198,821)"><text x="4.7" y="11.2" font-size="7.2" fill="#ffff00" textLength="4.6" lengthAdjust="spacingAndGlyphs">B</text><text x="4.7" y="17.2" font-size="7.2" fill="#ffff00" textLength="4.6" lengthAdjust="spacingAndGlyphs">O</text><text x="4.7" y="23.2" font-size="7.2" fill="#ffff00" textLength="4.6" lengthAdjust="spacingAndGlyphs">U</text><text x="4.7" y="29.2" font-size="7.2" fill="#ffff00" textLength="4.6" lengthAdjust="spacingAndGlyphs">N</text><text x="4.7" y="35.2" font-size="7.2" fill="#ffff00" textLength="4.6" lengthAdjust="spacingAndGlyphs">D</text><text x="4.7" y="41.2" font-size="7.2" fill="#ffff00" textLength="4.6" lengthAdjust="spacingAndGlyphs">S</text></g><rect x="213.5" y="845.5" width="21" height="23" fill="#191970" stroke="#9a9a9a" stroke-width="1"/><g shape-rendering="crispEdges"><g transform="translate(213,845)"><line x1="3.5" y1="4" x2="3.5" y2="21" stroke="#ffff00" stroke-width="1"/><line x1="8.5" y1="4" x2="8.5" y2="21" stroke="#ffff00" stroke-width="1"/><line x1="14.5" y1="4" x2="14.5" y2="21" stroke="#ffff00" stroke-width="1"/><line x1="19.5" y1="4" x2="19.5" y2="21" stroke="#ffff00" stroke-width="1"/><line x1="3" y1="4.5" x2="20" y2="4.5" stroke="#ffff00" stroke-width="1"/><line x1="3" y1="9.5" x2="20" y2="9.5" stroke="#ffff00" stroke-width="1"/><line x1="3" y1="15.5" x2="20" y2="15.5" stroke="#ffff00" stroke-width="1"/><line x1="3" y1="20.5" x2="20" y2="20.5" stroke="#ffff00" stroke-width="1"/></g></g><rect x="236.5" y="821.5" width="20" height="47" fill="#191970" stroke="#9a9a9a" stroke-width="1"/><g transform="translate(236,821)"><path d="M2.8,4.6 L6.6,5.6 L5.6,8.2 L4,10.8 L3,9 Z M3.4,12.6 L5.4,11.4 L5.8,14.4 L4.2,14 Z M8.8,5.2 L11.2,5 L12.4,6.6 L11.6,8.4 L13,9.6 L15.4,11 L14.4,12.6 L13.4,14.6 L12.2,13 L12.4,11 L10.6,9.6 L10.8,7.2 Z M14,4.6 L15.6,4.2 L14.8,5.6 Z M16.4,4 L17.8,3.8 L16.8,5 Z" fill="#ffff00"/><text x="7.1" y="24.8" font-size="9.6" fill="#ffff00" textLength="6.2" lengthAdjust="spacingAndGlyphs">M</text><text x="7.1" y="32.8" font-size="9.6" fill="#ffff00" textLength="6.2" lengthAdjust="spacingAndGlyphs">A</text><text x="7.1" y="41.2" font-size="9.6" fill="#ffff00" textLength="6.2" lengthAdjust="spacingAndGlyphs">P</text></g><rect x="258.5" y="821.5" width="20" height="47" fill="#191970" stroke="#9a9a9a" stroke-width="1"/><g transform="translate(258,821)"><clipPath id="wc2"><rect x="2.8" y="12" width="15.2" height="24"/></clipPath><g clip-path="url(#wc2)"><circle cx="10.4" cy="23.6" r="9.4" fill="none" stroke="#ffff00" stroke-width="1.1"/><circle cx="10.4" cy="23.6" r="5.6" fill="none" stroke="#ffff00" stroke-width="1.1"/><circle cx="10.4" cy="23.6" r="2.6" fill="none" stroke="#ffff00" stroke-width="1.1"/><line x1="13" y1="23.6" x2="19.8" y2="23.6" stroke="#ffff00" stroke-width="1.1"/><line x1="12.2385" y1="25.4385" x2="17.0468" y2="30.2468" stroke="#ffff00" stroke-width="1.1"/><line x1="10.4" y1="26.2" x2="10.4" y2="33" stroke="#ffff00" stroke-width="1.1"/><line x1="8.56152" y1="25.4385" x2="3.7532" y2="30.2468" stroke="#ffff00" stroke-width="1.1"/><line x1="7.8" y1="23.6" x2="1" y2="23.6" stroke="#ffff00" stroke-width="1.1"/><line x1="8.56152" y1="21.7615" x2="3.7532" y2="16.9532" stroke="#ffff00" stroke-width="1.1"/><line x1="10.4" y1="21" x2="10.4" y2="14.2" stroke="#ffff00" stroke-width="1.1"/><line x1="12.2385" y1="21.7615" x2="17.0468" y2="16.9532" stroke="#ffff00" stroke-width="1.1"/></g></g><rect x="280.5" y="845.5" width="21" height="23" fill="#191970" stroke="#9a9a9a" stroke-width="1"/><g transform="translate(280,845)"><circle cx="11.2" cy="13" r="6.6" fill="none" stroke="#ffff00" stroke-width="1.1"/></g><rect x="303.5" y="821.5" width="45" height="47" fill="#696969" stroke="#9a9a9a" stroke-width="1"/><g transform="translate(303,821)"><g transform="translate(0,0)"><path d="M3,43.8 V40.4 L4.4,40.4 L5.4,38.4 L6.6,38.4 L7.6,40.2 L9.4,40.2 L10.6,38.4 L12.4,38.4 L13.6,40.2 L15.6,40.2 L16.8,38.4 L18.4,38.4 L19.6,40.2 L21.6,40.2 L22.8,38.4 L24.4,38.4 L25.6,40.2 L27.6,40.2 L28.8,38.4 L30.4,38.4 L31.6,40.2 L33.6,40.2 L34.8,38.4 L36.4,38.4 L37.6,40.2 L39.6,40.2 L40.8,38.6 L41.8,39.6 L43,38.4 V43.8 Z" fill="#e4e4e4"/><path d="M5.8,32.4 H39.8 M5.9,32.4 Q5.8,36 8.6,38 M39.6,32.6 L37,38.6" fill="none" stroke="#e4e4e4" stroke-width="1"/><path d="M8.2,32.2 V24.3 H12.6 L14.6,32" fill="none" stroke="#e4e4e4" stroke-width="1"/><circle cx="22.3" cy="23.3" r="3.3" fill="none" stroke="#e4e4e4" stroke-width="1"/><path d="M21.4,26.6 V32.2 M23.4,26.6 V32.2 M34.3,15.8 V32.2" fill="none" stroke="#e4e4e4" stroke-width="1"/></g></g></g><line x1="4" y1="426.5" x2="574" y2="426.5" stroke="#fff" stroke-width="1" stroke-dasharray="1 1"/><line x1="4.5" y1="426" x2="4.5" y2="874" stroke="#fff" stroke-width="1" stroke-dasharray="1 1"/><line x1="4" y1="871.5" x2="574" y2="871.5" stroke="#fff" stroke-width="1" stroke-dasharray="1 1"/><line x1="4" y1="873.5" x2="574" y2="873.5" stroke="#fff" stroke-width="1" stroke-dasharray="1 1"/></svg></div>
<div class="win xs" style="left:572px;top:0px;width:561px;height:388px;background:#000;"><svg width="561" height="388" viewBox="572 0 561 388" font-family='"Liberation Sans", sans-serif' shape-rendering="crispEdges" text-rendering="optimizeLegibility"><rect x="755.3" y="248.2" width="163.7" height="50.6" fill="#00e696"/><rect x="918.5" y="264.8" width="82.5" height="34" fill="#00e696"/><rect x="622.5" y="29.5" width="426" height="282" fill="none" stroke="#fff" stroke-width="1"/><line x1="622.5" y1="57.7" x2="633.8" y2="57.7" stroke="#fff" stroke-width="1"/><line x1="1037.2" y1="57.7" x2="1048.5" y2="57.7" stroke="#fff" stroke-width="1"/><line x1="622.5" y1="85.9" x2="633.8" y2="85.9" stroke="#fff" stroke-width="1"/><line x1="1037.2" y1="85.9" x2="1048.5" y2="85.9" stroke="#fff" stroke-width="1"/><line x1="622.5" y1="114.1" x2="633.8" y2="114.1" stroke="#fff" stroke-width="1"/><line x1="1037.2" y1="114.1" x2="1048.5" y2="114.1" stroke="#fff" stroke-width="1"/><line x1="622.5" y1="142.3" x2="633.8" y2="142.3" stroke="#fff" stroke-width="1"/><line x1="1037.2" y1="142.3" x2="1048.5" y2="142.3" stroke="#fff" stroke-width="1"/><line x1="622.5" y1="170.5" x2="633.8" y2="170.5" stroke="#fff" stroke-width="1"/><line x1="1037.2" y1="170.5" x2="1048.5" y2="170.5" stroke="#fff" stroke-width="1"/><line x1="622.5" y1="198.7" x2="633.8" y2="198.7" stroke="#fff" stroke-width="1"/><line x1="1037.2" y1="198.7" x2="1048.5" y2="198.7" stroke="#fff" stroke-width="1"/><line x1="622.5" y1="226.9" x2="633.8" y2="226.9" stroke="#fff" stroke-width="1"/><line x1="1037.2" y1="226.9" x2="1048.5" y2="226.9" stroke="#fff" stroke-width="1"/><line x1="622.5" y1="255.1" x2="633.8" y2="255.1" stroke="#fff" stroke-width="1"/><line x1="1037.2" y1="255.1" x2="1048.5" y2="255.1" stroke="#fff" stroke-width="1"/><line x1="622.5" y1="283.3" x2="633.8" y2="283.3" stroke="#fff" stroke-width="1"/><line x1="1037.2" y1="283.3" x2="1048.5" y2="283.3" stroke="#fff" stroke-width="1"/><line x1="675.75" y1="29.5" x2="675.75" y2="36.5" stroke="#fff" stroke-width="1"/><line x1="675.75" y1="304.5" x2="675.75" y2="311.5" stroke="#fff" stroke-width="1"/><line x1="729" y1="29.5" x2="729" y2="36.5" stroke="#fff" stroke-width="1"/><line x1="729" y1="304.5" x2="729" y2="311.5" stroke="#fff" stroke-width="1"/><line x1="782.25" y1="29.5" x2="782.25" y2="36.5" stroke="#fff" stroke-width="1"/><line x1="782.25" y1="304.5" x2="782.25" y2="311.5" stroke="#fff" stroke-width="1"/><line x1="835.5" y1="29.5" x2="835.5" y2="36.5" stroke="#fff" stroke-width="1"/><line x1="835.5" y1="304.5" x2="835.5" y2="311.5" stroke="#fff" stroke-width="1"/><line x1="888.75" y1="29.5" x2="888.75" y2="36.5" stroke="#fff" stroke-width="1"/><line x1="888.75" y1="304.5" x2="888.75" y2="311.5" stroke="#fff" stroke-width="1"/><line x1="942" y1="29.5" x2="942" y2="36.5" stroke="#fff" stroke-width="1"/><line x1="942" y1="304.5" x2="942" y2="311.5" stroke="#fff" stroke-width="1"/><line x1="995.25" y1="29.5" x2="995.25" y2="36.5" stroke="#fff" stroke-width="1"/><line x1="995.25" y1="304.5" x2="995.25" y2="311.5" stroke="#fff" stroke-width="1"/><text x="619.1" y="29" font-size="10" fill="#fff" text-anchor="end">20</text><text x="619.1" y="85.4" font-size="10" fill="#fff" text-anchor="end">16</text><text x="619.1" y="141.8" font-size="10" fill="#fff" text-anchor="end">12</text><text x="619.1" y="198.2" font-size="10" fill="#fff" text-anchor="end">8</text><text x="619.1" y="254.6" font-size="10" fill="#fff" text-anchor="end">4</text><text x="619.1" y="310.5" font-size="10" fill="#fff" text-anchor="end">0</text><text x="622.5" y="321.9" font-size="10" fill="#fff" text-anchor="middle">0.0</text><text x="729" y="321.9" font-size="10" fill="#fff" text-anchor="middle">2.6</text><text x="835.5" y="321.9" font-size="10" fill="#fff" text-anchor="middle">5.1</text><text x="942" y="321.9" font-size="10" fill="#fff" text-anchor="middle">7.7</text><text x="1048" y="321.9" font-size="10" fill="#fff" text-anchor="end">10</text><text x="835.5" y="330.5" font-size="10" fill="#fff" text-anchor="middle" textLength="67.0" lengthAdjust="spacingAndGlyphs">Distance in km</text><text transform="translate(604.5,217) rotate(-90)" font-size="12.5" fill="#fff" font-family='"Liberation Serif", serif' textLength="95" lengthAdjust="spacingAndGlyphs"><tspan font-weight="bold">km</tspan> above MSL</text><text y="21" font-size="18" fill="#ffff00"><tspan x="581.659" textLength="20.6" lengthAdjust="spacingAndGlyphs">21</tspan><tspan x="601.296" textLength="11.7" lengthAdjust="spacingAndGlyphs">-</tspan><tspan x="613.303" textLength="29.3" lengthAdjust="spacingAndGlyphs">aug</tspan><tspan x="645.14" textLength="11.7" lengthAdjust="spacingAndGlyphs">-</tspan><tspan x="656.918" textLength="110.7" lengthAdjust="spacingAndGlyphs">1997,20:05:00</tspan></text><text y="21" font-size="18" fill="#fff"><tspan x="779.9" textLength="49.5" lengthAdjust="spacingAndGlyphs">Planar</tspan> <tspan x="834.9" textLength="43.8" lengthAdjust="spacingAndGlyphs">cross</tspan><tspan x="878.399" textLength="12.0" lengthAdjust="spacingAndGlyphs">-</tspan><tspan x="890" textLength="59.2" lengthAdjust="spacingAndGlyphs">section</tspan> <tspan x="956" textLength="35.0" lengthAdjust="spacingAndGlyphs">plot.</tspan> <tspan x="1003" textLength="67.0" lengthAdjust="spacingAndGlyphs">Contour</tspan> <tspan x="1075.5" textLength="15.8" lengthAdjust="spacingAndGlyphs">of</tspan></text><text y="48" font-size="18" fill="#fff"><tspan x="581.6" textLength="52.0" lengthAdjust="spacingAndGlyphs">maxdz</tspan> <tspan x="639.6" textLength="48.4" lengthAdjust="spacingAndGlyphs">using:</tspan> <tspan x="694" textLength="61.3" lengthAdjust="spacingAndGlyphs">rhb_3d.</tspan></text><rect x="1049.5" y="29" width="82" height="306" fill="#000"/><line x1="1048" y1="28.5" x2="1132" y2="28.5" stroke="#b0b0b0" stroke-width="1"/><line x1="1048.5" y1="29" x2="1048.5" y2="312" stroke="#fff" stroke-width="1"/><text x="1050.5" y="43.5" font-size="12" fill="#fff" textLength="34.0" lengthAdjust="spacingAndGlyphs">maxdz</text><rect x="1049.8" y="52" width="10.2" height="17.05" fill="#fa8080"/><rect x="1049.8" y="69" width="10.2" height="17.05" fill="#ff9296"/><rect x="1049.8" y="86" width="10.2" height="17.05" fill="#ffb064"/><rect x="1049.8" y="103" width="10.2" height="17.05" fill="#ffd8b0"/><rect x="1049.8" y="120" width="10.2" height="17.05" fill="#ffdc14"/><rect x="1049.8" y="137" width="10.2" height="17.05" fill="#f0b81e"/><rect x="1049.8" y="154" width="10.2" height="17.05" fill="#d89030"/><rect x="1049.8" y="171" width="10.2" height="17.05" fill="#c8c8c8"/><rect x="1049.8" y="188" width="10.2" height="17.05" fill="#0a6e46"/><rect x="1049.8" y="205" width="10.2" height="17.05" fill="#00e696"/><rect x="1049.8" y="222" width="10.2" height="17.05" fill="#00b4e6"/><rect x="1049.8" y="239" width="10.2" height="17.05" fill="#0064e6"/><rect x="1049.8" y="256" width="10.2" height="17.05" fill="#1432dc"/><rect x="1049.8" y="273" width="10.2" height="17.05" fill="#4614e6"/><rect x="1049.8" y="290" width="10.2" height="17.05" fill="#6e00f0"/><rect x="1049.8" y="307" width="10.2" height="17.05" fill="#9600ff"/><text x="1065.2" y="65.2" font-size="12" fill="#fff" textLength="23.2" lengthAdjust="spacingAndGlyphs">62.5</text><text x="1065.2" y="82.2" font-size="12" fill="#fff" textLength="23.2" lengthAdjust="spacingAndGlyphs">57.5</text><text x="1065.2" y="99.2" font-size="12" fill="#fff" textLength="23.2" lengthAdjust="spacingAndGlyphs">52.5</text><text x="1065.2" y="116.2" font-size="12" fill="#fff" textLength="23.2" lengthAdjust="spacingAndGlyphs">47.5</text><text x="1065.2" y="133.2" font-size="12" fill="#fff" textLength="23.2" lengthAdjust="spacingAndGlyphs">42.5</text><text x="1065.2" y="150.2" font-size="12" fill="#fff" textLength="23.2" lengthAdjust="spacingAndGlyphs">37.5</text><text x="1065.2" y="167.2" font-size="12" fill="#fff" textLength="23.2" lengthAdjust="spacingAndGlyphs">32.5</text><text x="1065.2" y="184.2" font-size="12" fill="#fff" textLength="23.2" lengthAdjust="spacingAndGlyphs">27.5</text><text x="1065.2" y="201.2" font-size="12" fill="#fff" textLength="23.2" lengthAdjust="spacingAndGlyphs">22.5</text><text x="1065.2" y="218.2" font-size="12" fill="#fff" textLength="23.2" lengthAdjust="spacingAndGlyphs">17.5</text><text x="1065.2" y="235.2" font-size="12" fill="#fff" textLength="23.2" lengthAdjust="spacingAndGlyphs">12.5</text><text x="1065.2" y="252.2" font-size="12" fill="#fff" textLength="16.5" lengthAdjust="spacingAndGlyphs">7.5</text><text x="1065.2" y="269.2" font-size="12" fill="#fff" textLength="16.5" lengthAdjust="spacingAndGlyphs">2.5</text><text y="286.2" font-size="12" fill="#fff"><tspan x="1065.03" textLength="9.5" lengthAdjust="spacingAndGlyphs">-</tspan><tspan x="1074.3" textLength="15.6" lengthAdjust="spacingAndGlyphs">2.5</tspan></text><text y="303.2" font-size="12" fill="#fff"><tspan x="1065.03" textLength="9.5" lengthAdjust="spacingAndGlyphs">-</tspan><tspan x="1074.3" textLength="15.6" lengthAdjust="spacingAndGlyphs">7.5</tspan></text><text y="320.2" font-size="12" fill="#fff"><tspan x="1065.03" textLength="9.5" lengthAdjust="spacingAndGlyphs">-</tspan><tspan x="1074.3" textLength="22.9" lengthAdjust="spacingAndGlyphs">12.5</tspan></text><line x1="1048" y1="335.5" x2="1132" y2="335.5" stroke="#b0b0b0" stroke-width="1"/><g shape-rendering="geometricPrecision"><rect x="577.5" y="336.5" width="45" height="47" fill="#191970" stroke="#9a9a9a" stroke-width="1"/><g transform="translate(577,336)"><path d="M6.5,13 C8,9.5 13,6.8 17.5,7.2 C22,7.8 27,11.6 31,11.6 C34,11.4 36.5,10.5 37.8,9 L36.5,12 C33,14.5 28,14.3 24,12.6 C19,10.4 14,9.2 10.5,10.6 C8.5,11.4 7.5,12.4 6.5,13.6 Z" fill="#ffff00"/><path d="M37.8,9 L36.2,12.5 C28,19 17,29 9.5,38.2 L6.2,39.6 C14,28 27,16.5 37.8,9 Z" fill="#ffff00"/><path d="M6.2,39.8 C9,37.8 13,36 17.5,36.6 C22,37.4 27,39.6 31,39.2 C34.5,38.6 37,37 38.8,35 L38.6,37 C36.5,40.4 32.5,42.2 28.5,42 C23.5,41.4 19,38.6 14.5,38.6 C11,38.8 8.5,39.6 6.2,39.8 Z" fill="#ffff00"/></g><rect x="624.5" y="336.5" width="45" height="47" fill="#191970" stroke="#9a9a9a" stroke-width="1"/><g transform="translate(624,336)"><text x="10.6" y="8.9" font-size="7.6" fill="#ffff00" font-family='"Liberation Sans", sans-serif' font-weight="bold" textLength="24.4" lengthAdjust="spacingAndGlyphs">CROSS</text><rect x="4.5" y="17.5" width="21" height="20" fill="none" stroke="#ffff00" stroke-width="1"/><path d="M4.5,17.5 L19.8,10.2 H40.6 V30.2 L25.5,37.5 M25.5,17.5 L40.6,10.2" fill="none" stroke="#ffff00" stroke-width="1"/><rect x="5" y="36" width="1" height="1" fill="#ffff00" shape-rendering="crispEdges"/><rect x="7" y="35" width="1" height="1" fill="#ffff00" shape-rendering="crispEdges"/><rect x="9" y="34" width="1" height="1" fill="#ffff00" shape-rendering="crispEdges"/><rect x="11" y="33" width="1" height="1" fill="#ffff00" shape-rendering="crispEdges"/><rect x="13" y="33" width="1" height="1" fill="#ffff00" shape-rendering="crispEdges"/><rect x="15" y="32" width="1" height="1" fill="#ffff00" shape-rendering="crispEdges"/><rect x="17" y="31" width="1" height="1" fill="#ffff00" shape-rendering="crispEdges"/><rect x="19" y="30" width="1" height="1" fill="#ffff00" shape-rendering="crispEdges"/><rect x="13" y="12.8" width="21.5" height="20.4" fill="#191970"/><rect x="13" y="12.8" width="21.5" height="20.4" fill="url(#dy)"/><path d="M13,33.2 V12.8 H34.5 V33.2" fill="none" stroke="#ffff00" stroke-width="1"/><text x="7.6" y="44" font-size="7.2" fill="#ffff00" font-family='"Liberation Sans", sans-serif' font-weight="bold" textLength="30.4" lengthAdjust="spacingAndGlyphs">SECTION</text></g><rect x="671.5" y="336.5" width="45" height="47" fill="#696969" stroke="#9a9a9a" stroke-width="1"/><g transform="translate(671,336)"><text x="10.6" y="8.9" font-size="7.6" fill="#e4e4e4" font-family='"Liberation Sans", sans-serif' font-weight="bold" textLength="24.4" lengthAdjust="spacingAndGlyphs">CROSS</text><rect x="4.5" y="17.5" width="21" height="20" fill="none" stroke="#e4e4e4" stroke-width="1"/><path d="M4.5,17.5 L19.8,10.2 H40.6 V30.2 L25.5,37.5 M25.5,17.5 L40.6,10.2" fill="none" stroke="#e4e4e4" stroke-width="1"/><rect x="5" y="36" width="1" height="1" fill="#e4e4e4" shape-rendering="crispEdges"/><rect x="7" y="35" width="1" height="1" fill="#e4e4e4" shape-rendering="crispEdges"/><rect x="9" y="34" width="1" height="1" fill="#e4e4e4" shape-rendering="crispEdges"/><rect x="11" y="33" width="1" height="1" fill="#e4e4e4" shape-rendering="crispEdges"/><rect x="13" y="33" width="1" height="1" fill="#e4e4e4" shape-rendering="crispEdges"/><rect x="15" y="32" width="1" height="1" fill="#e4e4e4" shape-rendering="crispEdges"/><rect x="17" y="31" width="1" height="1" fill="#e4e4e4" shape-rendering="crispEdges"/><rect x="19" y="30" width="1" height="1" fill="#e4e4e4" shape-rendering="crispEdges"/><rect x="13" y="12.8" width="21.5" height="20.4" fill="#696969"/><rect x="13" y="12.8" width="21.5" height="20.4" fill="url(#dw)"/><path d="M13,33.2 V12.8 H34.5 V33.2" fill="none" stroke="#e4e4e4" stroke-width="1"/><text x="7.6" y="44" font-size="7.2" fill="#e4e4e4" font-family='"Liberation Sans", sans-serif' font-weight="bold" textLength="30.4" lengthAdjust="spacingAndGlyphs">SECTION</text></g><rect x="718.5" y="336.5" width="45" height="47" fill="#696969" stroke="#9a9a9a" stroke-width="1"/><g transform="translate(718,336)"><text x="10.6" y="8.9" font-size="7.6" fill="#e4e4e4" font-family='"Liberation Sans", sans-serif' font-weight="bold" textLength="24.4" lengthAdjust="spacingAndGlyphs">CROSS</text><rect x="4.5" y="17.5" width="21" height="20" fill="none" stroke="#e4e4e4" stroke-width="1"/><path d="M4.5,17.5 L19.8,10.2 H40.6 V30.2 L25.5,37.5 M25.5,17.5 L40.6,10.2" fill="none" stroke="#e4e4e4" stroke-width="1"/><rect x="5" y="36" width="1" height="1" fill="#e4e4e4" shape-rendering="crispEdges"/><rect x="7" y="35" width="1" height="1" fill="#e4e4e4" shape-rendering="crispEdges"/><rect x="9" y="34" width="1" height="1" fill="#e4e4e4" shape-rendering="crispEdges"/><rect x="11" y="33" width="1" height="1" fill="#e4e4e4" shape-rendering="crispEdges"/><rect x="13" y="33" width="1" height="1" fill="#e4e4e4" shape-rendering="crispEdges"/><rect x="15" y="32" width="1" height="1" fill="#e4e4e4" shape-rendering="crispEdges"/><rect x="17" y="31" width="1" height="1" fill="#e4e4e4" shape-rendering="crispEdges"/><rect x="19" y="30" width="1" height="1" fill="#e4e4e4" shape-rendering="crispEdges"/><rect x="13" y="12.8" width="21.5" height="20.4" fill="#696969"/><rect x="13" y="12.8" width="21.5" height="20.4" fill="url(#dw)"/><path d="M13,33.2 V12.8 H34.5 V33.2" fill="none" stroke="#e4e4e4" stroke-width="1"/><text x="7.6" y="44" font-size="7.2" fill="#e4e4e4" font-family='"Liberation Sans", sans-serif' font-weight="bold" textLength="30.4" lengthAdjust="spacingAndGlyphs">SECTION</text></g></g><line x1="1132.5" y1="3" x2="1132.5" y2="387" stroke="#fff" stroke-width="1" stroke-dasharray="1 1"/><line x1="572" y1="386.5" x2="1133" y2="386.5" stroke="#fff" stroke-width="1" stroke-dasharray="1 1"/><line x1="572" y1="2.5" x2="1133" y2="2.5" stroke="#fff" stroke-width="1" stroke-dasharray="1 1"/></svg></div>
<div class="win xs" style="left:573px;top:386px;width:562px;height:385px;background:#000;"><svg width="562" height="385" viewBox="573 386 562 385" font-family='"Liberation Sans", sans-serif' shape-rendering="crispEdges" text-rendering="optimizeLegibility"><rect x="757.3" y="632.2" width="163.7" height="50.6" fill="#00821e"/><rect x="920.5" y="648.8" width="82.5" height="34" fill="#00821e"/><rect x="624.5" y="413.5" width="426" height="282" fill="none" stroke="#fff" stroke-width="1"/><line x1="624.5" y1="441.7" x2="635.8" y2="441.7" stroke="#fff" stroke-width="1"/><line x1="1039.2" y1="441.7" x2="1050.5" y2="441.7" stroke="#fff" stroke-width="1"/><line x1="624.5" y1="469.9" x2="635.8" y2="469.9" stroke="#fff" stroke-width="1"/><line x1="1039.2" y1="469.9" x2="1050.5" y2="469.9" stroke="#fff" stroke-width="1"/><line x1="624.5" y1="498.1" x2="635.8" y2="498.1" stroke="#fff" stroke-width="1"/><line x1="1039.2" y1="498.1" x2="1050.5" y2="498.1" stroke="#fff" stroke-width="1"/><line x1="624.5" y1="526.3" x2="635.8" y2="526.3" stroke="#fff" stroke-width="1"/><line x1="1039.2" y1="526.3" x2="1050.5" y2="526.3" stroke="#fff" stroke-width="1"/><line x1="624.5" y1="554.5" x2="635.8" y2="554.5" stroke="#fff" stroke-width="1"/><line x1="1039.2" y1="554.5" x2="1050.5" y2="554.5" stroke="#fff" stroke-width="1"/><line x1="624.5" y1="582.7" x2="635.8" y2="582.7" stroke="#fff" stroke-width="1"/><line x1="1039.2" y1="582.7" x2="1050.5" y2="582.7" stroke="#fff" stroke-width="1"/><line x1="624.5" y1="610.9" x2="635.8" y2="610.9" stroke="#fff" stroke-width="1"/><line x1="1039.2" y1="610.9" x2="1050.5" y2="610.9" stroke="#fff" stroke-width="1"/><line x1="624.5" y1="639.1" x2="635.8" y2="639.1" stroke="#fff" stroke-width="1"/><line x1="1039.2" y1="639.1" x2="1050.5" y2="639.1" stroke="#fff" stroke-width="1"/><line x1="624.5" y1="667.3" x2="635.8" y2="667.3" stroke="#fff" stroke-width="1"/><line x1="1039.2" y1="667.3" x2="1050.5" y2="667.3" stroke="#fff" stroke-width="1"/><line x1="677.75" y1="413.5" x2="677.75" y2="420.5" stroke="#fff" stroke-width="1"/><line x1="677.75" y1="688.5" x2="677.75" y2="695.5" stroke="#fff" stroke-width="1"/><line x1="731" y1="413.5" x2="731" y2="420.5" stroke="#fff" stroke-width="1"/><line x1="731" y1="688.5" x2="731" y2="695.5" stroke="#fff" stroke-width="1"/><line x1="784.25" y1="413.5" x2="784.25" y2="420.5" stroke="#fff" stroke-width="1"/><line x1="784.25" y1="688.5" x2="784.25" y2="695.5" stroke="#fff" stroke-width="1"/><line x1="837.5" y1="413.5" x2="837.5" y2="420.5" stroke="#fff" stroke-width="1"/><line x1="837.5" y1="688.5" x2="837.5" y2="695.5" stroke="#fff" stroke-width="1"/><line x1="890.75" y1="413.5" x2="890.75" y2="420.5" stroke="#fff" stroke-width="1"/><line x1="890.75" y1="688.5" x2="890.75" y2="695.5" stroke="#fff" stroke-width="1"/><line x1="944" y1="413.5" x2="944" y2="420.5" stroke="#fff" stroke-width="1"/><line x1="944" y1="688.5" x2="944" y2="695.5" stroke="#fff" stroke-width="1"/><line x1="997.25" y1="413.5" x2="997.25" y2="420.5" stroke="#fff" stroke-width="1"/><line x1="997.25" y1="688.5" x2="997.25" y2="695.5" stroke="#fff" stroke-width="1"/><text x="621.1" y="413" font-size="10" fill="#fff" text-anchor="end">20</text><text x="621.1" y="469.4" font-size="10" fill="#fff" text-anchor="end">16</text><text x="621.1" y="525.8" font-size="10" fill="#fff" text-anchor="end">12</text><text x="621.1" y="582.2" font-size="10" fill="#fff" text-anchor="end">8</text><text x="621.1" y="638.6" font-size="10" fill="#fff" text-anchor="end">4</text><text x="621.1" y="694.5" font-size="10" fill="#fff" text-anchor="end">0</text><text x="624.5" y="705.9" font-size="10" fill="#fff" text-anchor="middle">0.0</text><text x="731" y="705.9" font-size="10" fill="#fff" text-anchor="middle">2.6</text><text x="837.5" y="705.9" font-size="10" fill="#fff" text-anchor="middle">5.1</text><text x="944" y="705.9" font-size="10" fill="#fff" text-anchor="middle">7.7</text><text x="1050" y="705.9" font-size="10" fill="#fff" text-anchor="end">10</text><text x="837.5" y="714.5" font-size="10" fill="#fff" text-anchor="middle" textLength="67.0" lengthAdjust="spacingAndGlyphs">Distance in km</text><text transform="translate(606.5,601) rotate(-90)" font-size="12.5" fill="#fff" font-family='"Liberation Serif", serif' textLength="95" lengthAdjust="spacingAndGlyphs"><tspan font-weight="bold">km</tspan> above MSL</text><text y="405" font-size="18" fill="#ffff00"><tspan x="583.659" textLength="20.6" lengthAdjust="spacingAndGlyphs">21</tspan><tspan x="603.296" textLength="11.7" lengthAdjust="spacingAndGlyphs">-</tspan><tspan x="615.303" textLength="29.3" lengthAdjust="spacingAndGlyphs">aug</tspan><tspan x="647.14" textLength="11.7" lengthAdjust="spacingAndGlyphs">-</tspan><tspan x="658.918" textLength="110.7" lengthAdjust="spacingAndGlyphs">1997,20:05:00</tspan></text><text y="405" font-size="18" fill="#fff"><tspan x="781.9" textLength="49.5" lengthAdjust="spacingAndGlyphs">Planar</tspan> <tspan x="836.9" textLength="43.8" lengthAdjust="spacingAndGlyphs">cross</tspan><tspan x="880.399" textLength="12.0" lengthAdjust="spacingAndGlyphs">-</tspan><tspan x="892" textLength="59.2" lengthAdjust="spacingAndGlyphs">section</tspan> <tspan x="958" textLength="35.0" lengthAdjust="spacingAndGlyphs">plot.</tspan> <tspan x="1005" textLength="67.0" lengthAdjust="spacingAndGlyphs">Contour</tspan> <tspan x="1077.5" textLength="15.8" lengthAdjust="spacingAndGlyphs">of</tspan></text><text y="432.2" font-size="18" fill="#fff"><tspan x="583.6" textLength="107.5" lengthAdjust="spacingAndGlyphs">radialvelocity</tspan> <tspan x="696.9" textLength="48.4" lengthAdjust="spacingAndGlyphs">using:</tspan> <tspan x="750.6" textLength="62.0" lengthAdjust="spacingAndGlyphs">rhb_3d.</tspan></text><rect x="1051.5" y="413" width="83" height="306" fill="#000"/><line x1="1050" y1="412.5" x2="1134.5" y2="412.5" stroke="#b0b0b0" stroke-width="1"/><line x1="1050.5" y1="413" x2="1050.5" y2="696" stroke="#fff" stroke-width="1"/><text x="1052.3" y="428" font-size="12" fill="#fff" textLength="74.5" lengthAdjust="spacingAndGlyphs">radialvelocity</text><rect x="1051.8" y="436.2" width="10.2" height="11.05" fill="#ff0000"/><rect x="1051.8" y="447.2" width="10.2" height="11.05" fill="#d20000"/><rect x="1051.8" y="458.2" width="10.2" height="11.05" fill="#8c0000"/><rect x="1051.8" y="469.2" width="10.2" height="11.05" fill="#dc5000"/><rect x="1051.8" y="480.2" width="10.2" height="11.05" fill="#ff7800"/><rect x="1051.8" y="491.2" width="10.2" height="11.05" fill="#ff5a5a"/><rect x="1051.8" y="502.2" width="10.2" height="11.05" fill="#ff8c8c"/><rect x="1051.8" y="513.2" width="10.2" height="11.05" fill="#ffbebe"/><rect x="1051.8" y="524.2" width="10.2" height="11.05" fill="#ffff00"/><rect x="1051.8" y="535.2" width="10.2" height="11.05" fill="#ffbe1e"/><rect x="1051.8" y="546.2" width="10.2" height="11.05" fill="#d29664"/><rect x="1051.8" y="557.2" width="10.2" height="11.05" fill="#a0460a"/><rect x="1051.8" y="568.2" width="10.2" height="11.05" fill="#b4b4b4"/><rect x="1051.8" y="579.2" width="10.2" height="11.05" fill="#005014"/><rect x="1051.8" y="590.2" width="10.2" height="11.05" fill="#00821e"/><rect x="1051.8" y="601.2" width="10.2" height="11.05" fill="#00a01e"/><rect x="1051.8" y="612.2" width="10.2" height="11.05" fill="#00ff1e"/><rect x="1051.8" y="623.2" width="10.2" height="11.05" fill="#00c8ff"/><rect x="1051.8" y="634.2" width="10.2" height="11.05" fill="#0082ff"/><rect x="1051.8" y="645.2" width="10.2" height="11.05" fill="#0000dc"/><rect x="1051.8" y="656.2" width="10.2" height="11.05" fill="#0014aa"/><rect x="1051.8" y="667.2" width="10.2" height="11.05" fill="#000082"/><rect x="1051.8" y="678.2" width="10.2" height="11.05" fill="#8c8cbe"/><rect x="1051.8" y="689.2" width="10.2" height="11.05" fill="#55557d"/><rect x="1051.8" y="700.2" width="10.2" height="11.05" fill="#787878"/><text x="1067.4" y="445.4" font-size="12" fill="#fff" textLength="23.2" lengthAdjust="spacingAndGlyphs">24.0</text><text x="1067.4" y="456.4" font-size="12" fill="#fff" textLength="23.2" lengthAdjust="spacingAndGlyphs">22.0</text><text x="1067.4" y="467.4" font-size="12" fill="#fff" textLength="23.2" lengthAdjust="spacingAndGlyphs">20.0</text><text x="1067.4" y="478.4" font-size="12" fill="#fff" textLength="23.2" lengthAdjust="spacingAndGlyphs">18.0</text><text x="1067.4" y="489.4" font-size="12" fill="#fff" textLength="23.2" lengthAdjust="spacingAndGlyphs">16.0</text><text x="1067.4" y="500.4" font-size="12" fill="#fff" textLength="23.2" lengthAdjust="spacingAndGlyphs">14.0</text><text x="1067.4" y="511.4" font-size="12" fill="#fff" textLength="23.2" lengthAdjust="spacingAndGlyphs">12.0</text><text x="1067.4" y="522.4" font-size="12" fill="#fff" textLength="23.2" lengthAdjust="spacingAndGlyphs">10.0</text><text x="1067.4" y="533.4" font-size="12" fill="#fff" textLength="16.5" lengthAdjust="spacingAndGlyphs">8.0</text><text x="1067.4" y="544.4" font-size="12" fill="#fff" textLength="16.5" lengthAdjust="spacingAndGlyphs">6.0</text><text x="1067.4" y="555.4" font-size="12" fill="#fff" textLength="16.5" lengthAdjust="spacingAndGlyphs">4.0</text><text x="1067.4" y="566.4" font-size="12" fill="#fff" textLength="16.5" lengthAdjust="spacingAndGlyphs">2.0</text><text x="1067.4" y="577.4" font-size="12" fill="#fff" textLength="16.5" lengthAdjust="spacingAndGlyphs">0.0</text><text y="588.4" font-size="12" fill="#fff"><tspan x="1067.27" textLength="8.5" lengthAdjust="spacingAndGlyphs">-</tspan><tspan x="1075.4" textLength="15.6" lengthAdjust="spacingAndGlyphs">2.0</tspan></text><text y="599.4" font-size="12" fill="#fff"><tspan x="1067.27" textLength="8.5" lengthAdjust="spacingAndGlyphs">-</tspan><tspan x="1075.4" textLength="15.6" lengthAdjust="spacingAndGlyphs">4.0</tspan></text><text y="610.4" font-size="12" fill="#fff"><tspan x="1067.27" textLength="8.5" lengthAdjust="spacingAndGlyphs">-</tspan><tspan x="1075.4" textLength="15.6" lengthAdjust="spacingAndGlyphs">6.0</tspan></text><text y="621.4" font-size="12" fill="#fff"><tspan x="1067.27" textLength="8.5" lengthAdjust="spacingAndGlyphs">-</tspan><tspan x="1075.4" textLength="15.6" lengthAdjust="spacingAndGlyphs">8.0</tspan></text><text y="632.4" font-size="12" fill="#fff"><tspan x="1067.27" textLength="8.5" lengthAdjust="spacingAndGlyphs">-</tspan><tspan x="1075.4" textLength="22.9" lengthAdjust="spacingAndGlyphs">10.0</tspan></text><text y="643.4" font-size="12" fill="#fff"><tspan x="1067.27" textLength="8.5" lengthAdjust="spacingAndGlyphs">-</tspan><tspan x="1075.4" textLength="22.9" lengthAdjust="spacingAndGlyphs">12.0</tspan></text><text y="654.4" font-size="12" fill="#fff"><tspan x="1067.27" textLength="8.5" lengthAdjust="spacingAndGlyphs">-</tspan><tspan x="1075.4" textLength="22.9" lengthAdjust="spacingAndGlyphs">14.0</tspan></text><text y="665.4" font-size="12" fill="#fff"><tspan x="1067.27" textLength="8.5" lengthAdjust="spacingAndGlyphs">-</tspan><tspan x="1075.4" textLength="22.9" lengthAdjust="spacingAndGlyphs">16.0</tspan></text><text y="676.4" font-size="12" fill="#fff"><tspan x="1067.27" textLength="8.5" lengthAdjust="spacingAndGlyphs">-</tspan><tspan x="1075.4" textLength="22.9" lengthAdjust="spacingAndGlyphs">18.0</tspan></text><text y="687.4" font-size="12" fill="#fff"><tspan x="1067.27" textLength="8.5" lengthAdjust="spacingAndGlyphs">-</tspan><tspan x="1075.4" textLength="22.9" lengthAdjust="spacingAndGlyphs">20.0</tspan></text><text y="698.4" font-size="12" fill="#fff"><tspan x="1067.27" textLength="8.5" lengthAdjust="spacingAndGlyphs">-</tspan><tspan x="1075.4" textLength="22.9" lengthAdjust="spacingAndGlyphs">22.0</tspan></text><text y="709.4" font-size="12" fill="#fff"><tspan x="1067.27" textLength="8.5" lengthAdjust="spacingAndGlyphs">-</tspan><tspan x="1075.4" textLength="22.9" lengthAdjust="spacingAndGlyphs">24.0</tspan></text><line x1="1050.5" y1="719.5" x2="1134.5" y2="719.5" stroke="#b0b0b0" stroke-width="1"/><g shape-rendering="geometricPrecision"><rect x="579.5" y="720.5" width="45" height="47" fill="#191970" stroke="#9a9a9a" stroke-width="1"/><g transform="translate(579,720)"><path d="M6.5,13 C8,9.5 13,6.8 17.5,7.2 C22,7.8 27,11.6 31,11.6 C34,11.4 36.5,10.5 37.8,9 L36.5,12 C33,14.5 28,14.3 24,12.6 C19,10.4 14,9.2 10.5,10.6 C8.5,11.4 7.5,12.4 6.5,13.6 Z" fill="#ffff00"/><path d="M37.8,9 L36.2,12.5 C28,19 17,29 9.5,38.2 L6.2,39.6 C14,28 27,16.5 37.8,9 Z" fill="#ffff00"/><path d="M6.2,39.8 C9,37.8 13,36 17.5,36.6 C22,37.4 27,39.6 31,39.2 C34.5,38.6 37,37 38.8,35 L38.6,37 C36.5,40.4 32.5,42.2 28.5,42 C23.5,41.4 19,38.6 14.5,38.6 C11,38.8 8.5,39.6 6.2,39.8 Z" fill="#ffff00"/></g><rect x="626.5" y="720.5" width="45" height="47" fill="#191970" stroke="#9a9a9a" stroke-width="1"/><g transform="translate(626,720)"><text x="10.6" y="8.9" font-size="7.6" fill="#ffff00" font-family='"Liberation Sans", sans-serif' font-weight="bold" textLength="24.4" lengthAdjust="spacingAndGlyphs">CROSS</text><rect x="4.5" y="17.5" width="21" height="20" fill="none" stroke="#ffff00" stroke-width="1"/><path d="M4.5,17.5 L19.8,10.2 H40.6 V30.2 L25.5,37.5 M25.5,17.5 L40.6,10.2" fill="none" stroke="#ffff00" stroke-width="1"/><rect x="5" y="36" width="1" height="1" fill="#ffff00" shape-rendering="crispEdges"/><rect x="7" y="35" width="1" height="1" fill="#ffff00" shape-rendering="crispEdges"/><rect x="9" y="34" width="1" height="1" fill="#ffff00" shape-rendering="crispEdges"/><rect x="11" y="33" width="1" height="1" fill="#ffff00" shape-rendering="crispEdges"/><rect x="13" y="33" width="1" height="1" fill="#ffff00" shape-rendering="crispEdges"/><rect x="15" y="32" width="1" height="1" fill="#ffff00" shape-rendering="crispEdges"/><rect x="17" y="31" width="1" height="1" fill="#ffff00" shape-rendering="crispEdges"/><rect x="19" y="30" width="1" height="1" fill="#ffff00" shape-rendering="crispEdges"/><rect x="13" y="12.8" width="21.5" height="20.4" fill="#191970"/><rect x="13" y="12.8" width="21.5" height="20.4" fill="url(#dy)"/><path d="M13,33.2 V12.8 H34.5 V33.2" fill="none" stroke="#ffff00" stroke-width="1"/><text x="7.6" y="44" font-size="7.2" fill="#ffff00" font-family='"Liberation Sans", sans-serif' font-weight="bold" textLength="30.4" lengthAdjust="spacingAndGlyphs">SECTION</text></g><rect x="673.5" y="720.5" width="45" height="47" fill="#696969" stroke="#9a9a9a" stroke-width="1"/><g transform="translate(673,720)"><text x="10.6" y="8.9" font-size="7.6" fill="#e4e4e4" font-family='"Liberation Sans", sans-serif' font-weight="bold" textLength="24.4" lengthAdjust="spacingAndGlyphs">CROSS</text><rect x="4.5" y="17.5" width="21" height="20" fill="none" stroke="#e4e4e4" stroke-width="1"/><path d="M4.5,17.5 L19.8,10.2 H40.6 V30.2 L25.5,37.5 M25.5,17.5 L40.6,10.2" fill="none" stroke="#e4e4e4" stroke-width="1"/><rect x="5" y="36" width="1" height="1" fill="#e4e4e4" shape-rendering="crispEdges"/><rect x="7" y="35" width="1" height="1" fill="#e4e4e4" shape-rendering="crispEdges"/><rect x="9" y="34" width="1" height="1" fill="#e4e4e4" shape-rendering="crispEdges"/><rect x="11" y="33" width="1" height="1" fill="#e4e4e4" shape-rendering="crispEdges"/><rect x="13" y="33" width="1" height="1" fill="#e4e4e4" shape-rendering="crispEdges"/><rect x="15" y="32" width="1" height="1" fill="#e4e4e4" shape-rendering="crispEdges"/><rect x="17" y="31" width="1" height="1" fill="#e4e4e4" shape-rendering="crispEdges"/><rect x="19" y="30" width="1" height="1" fill="#e4e4e4" shape-rendering="crispEdges"/><rect x="13" y="12.8" width="21.5" height="20.4" fill="#696969"/><rect x="13" y="12.8" width="21.5" height="20.4" fill="url(#dw)"/><path d="M13,33.2 V12.8 H34.5 V33.2" fill="none" stroke="#e4e4e4" stroke-width="1"/><text x="7.6" y="44" font-size="7.2" fill="#e4e4e4" font-family='"Liberation Sans", sans-serif' font-weight="bold" textLength="30.4" lengthAdjust="spacingAndGlyphs">SECTION</text></g><rect x="720.5" y="720.5" width="45" height="47" fill="#696969" stroke="#9a9a9a" stroke-width="1"/><g transform="translate(720,720)"><text x="10.6" y="8.9" font-size="7.6" fill="#e4e4e4" font-family='"Liberation Sans", sans-serif' font-weight="bold" textLength="24.4" lengthAdjust="spacingAndGlyphs">CROSS</text><rect x="4.5" y="17.5" width="21" height="20" fill="none" stroke="#e4e4e4" stroke-width="1"/><path d="M4.5,17.5 L19.8,10.2 H40.6 V30.2 L25.5,37.5 M25.5,17.5 L40.6,10.2" fill="none" stroke="#e4e4e4" stroke-width="1"/><rect x="5" y="36" width="1" height="1" fill="#e4e4e4" shape-rendering="crispEdges"/><rect x="7" y="35" width="1" height="1" fill="#e4e4e4" shape-rendering="crispEdges"/><rect x="9" y="34" width="1" height="1" fill="#e4e4e4" shape-rendering="crispEdges"/><rect x="11" y="33" width="1" height="1" fill="#e4e4e4" shape-rendering="crispEdges"/><rect x="13" y="33" width="1" height="1" fill="#e4e4e4" shape-rendering="crispEdges"/><rect x="15" y="32" width="1" height="1" fill="#e4e4e4" shape-rendering="crispEdges"/><rect x="17" y="31" width="1" height="1" fill="#e4e4e4" shape-rendering="crispEdges"/><rect x="19" y="30" width="1" height="1" fill="#e4e4e4" shape-rendering="crispEdges"/><rect x="13" y="12.8" width="21.5" height="20.4" fill="#696969"/><rect x="13" y="12.8" width="21.5" height="20.4" fill="url(#dw)"/><path d="M13,33.2 V12.8 H34.5 V33.2" fill="none" stroke="#e4e4e4" stroke-width="1"/><text x="7.6" y="44" font-size="7.2" fill="#e4e4e4" font-family='"Liberation Sans", sans-serif' font-weight="bold" textLength="30.4" lengthAdjust="spacingAndGlyphs">SECTION</text></g></g><line x1="573.5" y1="386" x2="573.5" y2="771" stroke="#fff" stroke-width="1" stroke-dasharray="1 1"/><line x1="573" y1="386.5" x2="1135" y2="386.5" stroke="#fff" stroke-width="1" stroke-dasharray="1 1"/><line x1="1134.5" y1="386" x2="1134.5" y2="771" stroke="#fff" stroke-width="1" stroke-dasharray="1 1"/><line x1="573" y1="770.5" x2="1135" y2="770.5" stroke="#fff" stroke-width="1" stroke-dasharray="1 1"/></svg></div>
<div class="win popup" style="left:573px;top:771px;width:508px;height:103px;background:#000;"><div class="b" style="left:3px;top:4px;width:46px;height:24px;border:2px solid #fff;box-sizing:border-box;"></div><span class="t" style="left:8.7px;top:9.7px;font:normal 12px/14px 'Liberation Sans', sans-serif;color:#fff;transform:scaleX(0.7977);">Dismiss</span><div class="b" style="left:0px;top:29px;width:502px;height:68px;border:2px solid #fff;border-left:none;box-sizing:border-box;"></div><span class="t pre" style="left:1.8px;top:33.8px;font:normal 13.2px/15px 'DejaVu Sans Mono', monospace;color:#fff;transform:scaleX(1.1325);">PLATFORM   FIELD      ALTITUDE       TIME</span><span class="t pre" style="left:1.8px;top:48.8px;font:normal 13.2px/15px 'DejaVu Sans Mono', monospace;color:#fff;transform:scaleX(1.1325);">rhb_lowprf maxdz      0.50 km MSL    21-Aug-97,20:00:24</span><span class="t pre" style="left:1.8px;top:63.8px;font:normal 13.2px/15px 'DejaVu Sans Mono', monospace;color:#fff;transform:scaleX(1.1325);">rhb_3d     maxdz      0.50 km MSL    21-Aug-97,20:01:20</span><div class="b" style="left:0px;top:0px;width:1px;height:103px;border-left:1px dotted #fff;"></div><div class="b" style="left:0px;top:102px;width:508px;height:1px;border-top:1px dotted #fff;"></div><div class="b" style="left:507px;top:5px;width:1px;height:98px;border-left:1px dotted #fff;"></div></div>
<svg class="abs" style="left:0;top:0" width="1133" height="2" viewBox="0 0 1133 2" shape-rendering="crispEdges"><rect x="0" y="0" width="145" height="2" fill="#006400"/><rect x="200" y="0" width="52" height="2" fill="#0000cd"/><rect x="571" y="0" width="161" height="2" fill="#006400"/><rect x="973" y="0" width="47" height="2" fill="#0000cd"/><rect x="1101" y="0" width="32" height="2" fill="#0000cd"/><rect x="850" y="0" width="124" height="2" fill="url(#stipgr)"/><rect x="145" y="0" width="55" height="2" fill="url(#stipw)"/><rect x="252" y="0" width="319" height="2" fill="url(#stipw)"/><rect x="732" y="0" width="118" height="2" fill="url(#stipw)"/><rect x="1020" y="0" width="81" height="2" fill="url(#stipw)"/></svg>
</body></html>
